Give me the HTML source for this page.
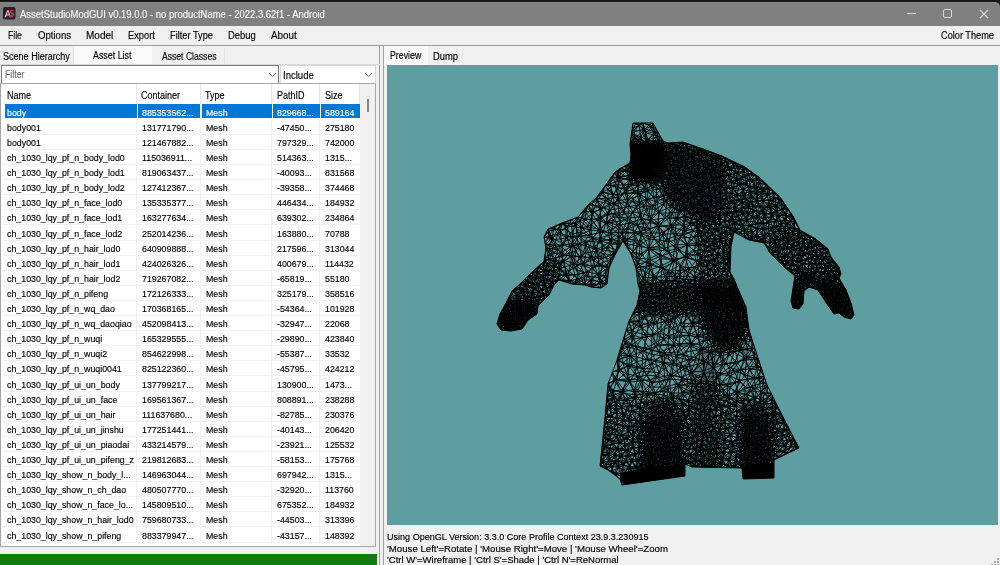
<!DOCTYPE html>
<html><head><meta charset="utf-8">
<style>
*{margin:0;padding:0;box-sizing:border-box}
html,body{width:1000px;height:565px;overflow:hidden;background:#f0f0f0;font-family:"Liberation Sans",sans-serif;font-size:9px;color:#000}
.a{-webkit-text-stroke:0.15px currentColor}
.a{position:absolute;white-space:pre}
#top{left:0;top:0;width:1000px;height:10px;background:#181818}
#title{left:0;top:2px;width:1000px;height:24px;background:#808080;border-top-right-radius:5px;border-top:1px solid #888}
#menu{left:0;top:26px;width:1000px;height:19px;background:#f0f0f0}
.mi{top:30px;font-size:9.6px}
#sep{left:0;top:45px;width:1000px;height:1px;background:#a0a0a0}
.tab{font-size:9.2px}
#lv{left:0px;top:83px;width:376px;height:464px;background:#fff;border:1px solid #a6a6a6}
.row{position:absolute;left:4px;width:355px;height:15.1px}
.c{position:absolute;top:1px;font-size:9.1px;white-space:pre;color:#000;transform:scaleX(.97);transform-origin:0 0}
.gl{position:absolute;left:4px;width:355px;height:1px;background:#f0f0f0}
.vl{position:absolute;width:1px;background:#f0f0f0}
#gl{left:387px;top:65px;width:611px;height:460px;background:#5f9ea0;overflow:hidden}
.info{left:387px;font-size:9.1px;color:#000}
</style></head><body>
<div class="a" id="top"></div>
<div class="a" id="title"></div>
<!-- icon -->
<svg class="a" style="left:3px;top:7px" width="13" height="13"><defs><linearGradient id="ga" x1="0" y1="1" x2="1" y2="0"><stop offset="0" stop-color="#f4f0f6"/><stop offset="1" stop-color="#f05a6a"/></linearGradient><linearGradient id="gs" x1="0" y1="1" x2="1" y2="0"><stop offset="0" stop-color="#f0106a"/><stop offset="1" stop-color="#e8483a"/></linearGradient></defs>
<rect x="0" y="0" width="12.5" height="12.5" rx="2" fill="#1f212b"/>
<path d="M1.6 10.2L4.2 3H5.6L8 10.2H6.5L6 8.6H3.6L3.1 10.2ZM4 7.4H5.6L4.9 4.9Z" fill="url(#ga)"/>
<path d="M10.8 3.6C10.2 3.1 9.5 2.9 8.8 2.9C7.5 2.9 6.7 3.7 6.7 4.8C6.7 6 7.7 6.4 8.6 6.8C9.2 7 9.6 7.3 9.6 7.8C9.6 8.4 9.1 8.8 8.4 8.8C7.7 8.8 7.1 8.5 6.6 8L5.9 9.2C6.6 9.9 7.5 10.2 8.4 10.2C9.9 10.2 11 9.3 11 7.8C11 6.5 10.1 6 9.1 5.6C8.5 5.3 8.1 5.1 8.1 4.7C8.1 4.3 8.5 4.1 9 4.1C9.5 4.1 9.9 4.3 10.3 4.6Z" fill="url(#gs)"/></svg>
<!-- window controls -->
<div class="a" style="left:907px;top:13px;width:9px;height:1px;background:#d8d8d8"></div>
<div class="a" style="left:943px;top:9px;width:9px;height:9px;border:1px solid #d8d8d8;border-radius:2px"></div>
<svg class="a" style="left:979px;top:8.5px" width="10" height="10"><path d="M1 1L9 9M9 1L1 9" stroke="#d8d8d8" stroke-width="1.1"/></svg>

<div class="a" id="menu"></div>
<div class="a" id="sep"></div>

<!-- left tab control -->
<div class="a" style="left:0;top:46px;width:380px;height:519px;border-right:1px solid #a0a0a0"></div>
<div class="a" style="left:0;top:48px;width:74px;height:17px;background:#f0f0f0;border-right:1px solid #e3e3e3"></div>
<div class="a" style="left:74px;top:46px;width:78px;height:19px;background:#f9f9f9"></div>
<div class="a" style="left:152px;top:48px;width:73px;height:17px;background:#f0f0f0;border-right:1px solid #e3e3e3"></div>
<div class="a" style="left:0;top:64px;width:380px;height:1px;background:#dadada"></div>

<!-- combos -->
<div class="a" style="left:1px;top:65px;width:278px;height:19px;background:#fff;border:1px solid #7a7a7a"></div>
<svg class="a" style="left:268px;top:72px" width="9" height="6"><path d="M1 1L4.5 4.5L8 1" stroke="#606060" fill="none" stroke-width="1"/></svg>
<div class="a" style="left:280px;top:65px;width:96px;height:19px;background:#fff;border:1px solid #d9d9d9;border-bottom:none"></div>
<svg class="a" style="left:364px;top:72px" width="9" height="6"><path d="M1 1L4.5 4.5L8 1" stroke="#606060" fill="none" stroke-width="1"/></svg>

<!-- list view -->
<div class="a" id="lv"></div>
<div class="a" style="left:5px;top:104.1px;width:131.7px;height:14.2px;background:#0078d7"></div>
<div class="a" style="left:137.9px;top:104.1px;width:62.5px;height:14.2px;background:#0078d7"></div>
<div class="a" style="left:201.6px;top:104.1px;width:70.0px;height:14.2px;background:#0078d7"></div>
<div class="a" style="left:272.8px;top:104.1px;width:46.9px;height:14.2px;background:#0078d7"></div>
<div class="a" style="left:320.9px;top:104.1px;width:38.8px;height:14.2px;background:#0078d7"></div>
<div class="a c" style="left:6.9px;top:107.7px;color:#fff">body</div>
<div class="a c" style="left:141.7px;top:107.7px;color:#fff">885353562...</div>
<div class="a c" style="left:205.7px;top:107.7px;color:#fff">Mesh</div>
<div class="a c" style="left:277px;top:107.7px;color:#fff">829668...</div>
<div class="a c" style="left:325px;top:107.7px;color:#fff">589164</div>
<div class="a c" style="left:6.9px;top:122.8px;color:#000">body001</div>
<div class="a c" style="left:141.7px;top:122.8px;color:#000">131771790...</div>
<div class="a c" style="left:205.7px;top:122.8px;color:#000">Mesh</div>
<div class="a c" style="left:277px;top:122.8px;color:#000">-47450...</div>
<div class="a c" style="left:325px;top:122.8px;color:#000">275180</div>
<div class="a" style="left:2px;top:133.8px;width:358px;height:1px;background:#f0f0f0"></div>
<div class="a c" style="left:6.9px;top:137.9px;color:#000">body001</div>
<div class="a c" style="left:141.7px;top:137.9px;color:#000">121467882...</div>
<div class="a c" style="left:205.7px;top:137.9px;color:#000">Mesh</div>
<div class="a c" style="left:277px;top:137.9px;color:#000">797329...</div>
<div class="a c" style="left:325px;top:137.9px;color:#000">742000</div>
<div class="a" style="left:2px;top:148.9px;width:358px;height:1px;background:#f0f0f0"></div>
<div class="a c" style="left:6.9px;top:153.0px;color:#000">ch_1030_lqy_pf_n_body_lod0</div>
<div class="a c" style="left:141.7px;top:153.0px;color:#000">115036911...</div>
<div class="a c" style="left:205.7px;top:153.0px;color:#000">Mesh</div>
<div class="a c" style="left:277px;top:153.0px;color:#000">514363...</div>
<div class="a c" style="left:325px;top:153.0px;color:#000">1315...</div>
<div class="a" style="left:2px;top:164.0px;width:358px;height:1px;background:#f0f0f0"></div>
<div class="a c" style="left:6.9px;top:168.1px;color:#000">ch_1030_lqy_pf_n_body_lod1</div>
<div class="a c" style="left:141.7px;top:168.1px;color:#000">819063437...</div>
<div class="a c" style="left:205.7px;top:168.1px;color:#000">Mesh</div>
<div class="a c" style="left:277px;top:168.1px;color:#000">-40093...</div>
<div class="a c" style="left:325px;top:168.1px;color:#000">831568</div>
<div class="a" style="left:2px;top:179.1px;width:358px;height:1px;background:#f0f0f0"></div>
<div class="a c" style="left:6.9px;top:183.2px;color:#000">ch_1030_lqy_pf_n_body_lod2</div>
<div class="a c" style="left:141.7px;top:183.2px;color:#000">127412367...</div>
<div class="a c" style="left:205.7px;top:183.2px;color:#000">Mesh</div>
<div class="a c" style="left:277px;top:183.2px;color:#000">-39358...</div>
<div class="a c" style="left:325px;top:183.2px;color:#000">374468</div>
<div class="a" style="left:2px;top:194.2px;width:358px;height:1px;background:#f0f0f0"></div>
<div class="a c" style="left:6.9px;top:198.3px;color:#000">ch_1030_lqy_pf_n_face_lod0</div>
<div class="a c" style="left:141.7px;top:198.3px;color:#000">135335377...</div>
<div class="a c" style="left:205.7px;top:198.3px;color:#000">Mesh</div>
<div class="a c" style="left:277px;top:198.3px;color:#000">446434...</div>
<div class="a c" style="left:325px;top:198.3px;color:#000">184932</div>
<div class="a" style="left:2px;top:209.3px;width:358px;height:1px;background:#f0f0f0"></div>
<div class="a c" style="left:6.9px;top:213.4px;color:#000">ch_1030_lqy_pf_n_face_lod1</div>
<div class="a c" style="left:141.7px;top:213.4px;color:#000">163277634...</div>
<div class="a c" style="left:205.7px;top:213.4px;color:#000">Mesh</div>
<div class="a c" style="left:277px;top:213.4px;color:#000">639302...</div>
<div class="a c" style="left:325px;top:213.4px;color:#000">234864</div>
<div class="a" style="left:2px;top:224.4px;width:358px;height:1px;background:#f0f0f0"></div>
<div class="a c" style="left:6.9px;top:228.5px;color:#000">ch_1030_lqy_pf_n_face_lod2</div>
<div class="a c" style="left:141.7px;top:228.5px;color:#000">252014236...</div>
<div class="a c" style="left:205.7px;top:228.5px;color:#000">Mesh</div>
<div class="a c" style="left:277px;top:228.5px;color:#000">163880...</div>
<div class="a c" style="left:325px;top:228.5px;color:#000">70788</div>
<div class="a" style="left:2px;top:239.5px;width:358px;height:1px;background:#f0f0f0"></div>
<div class="a c" style="left:6.9px;top:243.6px;color:#000">ch_1030_lqy_pf_n_hair_lod0</div>
<div class="a c" style="left:141.7px;top:243.6px;color:#000">640909888...</div>
<div class="a c" style="left:205.7px;top:243.6px;color:#000">Mesh</div>
<div class="a c" style="left:277px;top:243.6px;color:#000">217596...</div>
<div class="a c" style="left:325px;top:243.6px;color:#000">313044</div>
<div class="a" style="left:2px;top:254.6px;width:358px;height:1px;background:#f0f0f0"></div>
<div class="a c" style="left:6.9px;top:258.7px;color:#000">ch_1030_lqy_pf_n_hair_lod1</div>
<div class="a c" style="left:141.7px;top:258.7px;color:#000">424026326...</div>
<div class="a c" style="left:205.7px;top:258.7px;color:#000">Mesh</div>
<div class="a c" style="left:277px;top:258.7px;color:#000">400679...</div>
<div class="a c" style="left:325px;top:258.7px;color:#000">114432</div>
<div class="a" style="left:2px;top:269.7px;width:358px;height:1px;background:#f0f0f0"></div>
<div class="a c" style="left:6.9px;top:273.8px;color:#000">ch_1030_lqy_pf_n_hair_lod2</div>
<div class="a c" style="left:141.7px;top:273.8px;color:#000">719267082...</div>
<div class="a c" style="left:205.7px;top:273.8px;color:#000">Mesh</div>
<div class="a c" style="left:277px;top:273.8px;color:#000">-65819...</div>
<div class="a c" style="left:325px;top:273.8px;color:#000">55180</div>
<div class="a" style="left:2px;top:284.8px;width:358px;height:1px;background:#f0f0f0"></div>
<div class="a c" style="left:6.9px;top:288.9px;color:#000">ch_1030_lqy_pf_n_pifeng</div>
<div class="a c" style="left:141.7px;top:288.9px;color:#000">172126333...</div>
<div class="a c" style="left:205.7px;top:288.9px;color:#000">Mesh</div>
<div class="a c" style="left:277px;top:288.9px;color:#000">325179...</div>
<div class="a c" style="left:325px;top:288.9px;color:#000">358516</div>
<div class="a" style="left:2px;top:299.9px;width:358px;height:1px;background:#f0f0f0"></div>
<div class="a c" style="left:6.9px;top:304.0px;color:#000">ch_1030_lqy_pf_n_wq_dao</div>
<div class="a c" style="left:141.7px;top:304.0px;color:#000">170368165...</div>
<div class="a c" style="left:205.7px;top:304.0px;color:#000">Mesh</div>
<div class="a c" style="left:277px;top:304.0px;color:#000">-54364...</div>
<div class="a c" style="left:325px;top:304.0px;color:#000">101928</div>
<div class="a" style="left:2px;top:315.0px;width:358px;height:1px;background:#f0f0f0"></div>
<div class="a c" style="left:6.9px;top:319.1px;color:#000">ch_1030_lqy_pf_n_wq_daoqiao</div>
<div class="a c" style="left:141.7px;top:319.1px;color:#000">452098413...</div>
<div class="a c" style="left:205.7px;top:319.1px;color:#000">Mesh</div>
<div class="a c" style="left:277px;top:319.1px;color:#000">-32947...</div>
<div class="a c" style="left:325px;top:319.1px;color:#000">22068</div>
<div class="a" style="left:2px;top:330.1px;width:358px;height:1px;background:#f0f0f0"></div>
<div class="a c" style="left:6.9px;top:334.2px;color:#000">ch_1030_lqy_pf_n_wuqi</div>
<div class="a c" style="left:141.7px;top:334.2px;color:#000">165329555...</div>
<div class="a c" style="left:205.7px;top:334.2px;color:#000">Mesh</div>
<div class="a c" style="left:277px;top:334.2px;color:#000">-29890...</div>
<div class="a c" style="left:325px;top:334.2px;color:#000">423840</div>
<div class="a" style="left:2px;top:345.2px;width:358px;height:1px;background:#f0f0f0"></div>
<div class="a c" style="left:6.9px;top:349.3px;color:#000">ch_1030_lqy_pf_n_wuqi2</div>
<div class="a c" style="left:141.7px;top:349.3px;color:#000">854622998...</div>
<div class="a c" style="left:205.7px;top:349.3px;color:#000">Mesh</div>
<div class="a c" style="left:277px;top:349.3px;color:#000">-55387...</div>
<div class="a c" style="left:325px;top:349.3px;color:#000">33532</div>
<div class="a" style="left:2px;top:360.3px;width:358px;height:1px;background:#f0f0f0"></div>
<div class="a c" style="left:6.9px;top:364.4px;color:#000">ch_1030_lqy_pf_n_wuqi0041</div>
<div class="a c" style="left:141.7px;top:364.4px;color:#000">825122360...</div>
<div class="a c" style="left:205.7px;top:364.4px;color:#000">Mesh</div>
<div class="a c" style="left:277px;top:364.4px;color:#000">-45795...</div>
<div class="a c" style="left:325px;top:364.4px;color:#000">424212</div>
<div class="a" style="left:2px;top:375.4px;width:358px;height:1px;background:#f0f0f0"></div>
<div class="a c" style="left:6.9px;top:379.5px;color:#000">ch_1030_lqy_pf_ui_un_body</div>
<div class="a c" style="left:141.7px;top:379.5px;color:#000">137799217...</div>
<div class="a c" style="left:205.7px;top:379.5px;color:#000">Mesh</div>
<div class="a c" style="left:277px;top:379.5px;color:#000">130900...</div>
<div class="a c" style="left:325px;top:379.5px;color:#000">1473...</div>
<div class="a" style="left:2px;top:390.5px;width:358px;height:1px;background:#f0f0f0"></div>
<div class="a c" style="left:6.9px;top:394.6px;color:#000">ch_1030_lqy_pf_ui_un_face</div>
<div class="a c" style="left:141.7px;top:394.6px;color:#000">169561367...</div>
<div class="a c" style="left:205.7px;top:394.6px;color:#000">Mesh</div>
<div class="a c" style="left:277px;top:394.6px;color:#000">808891...</div>
<div class="a c" style="left:325px;top:394.6px;color:#000">238288</div>
<div class="a" style="left:2px;top:405.6px;width:358px;height:1px;background:#f0f0f0"></div>
<div class="a c" style="left:6.9px;top:409.7px;color:#000">ch_1030_lqy_pf_ui_un_hair</div>
<div class="a c" style="left:141.7px;top:409.7px;color:#000">111637680...</div>
<div class="a c" style="left:205.7px;top:409.7px;color:#000">Mesh</div>
<div class="a c" style="left:277px;top:409.7px;color:#000">-82785...</div>
<div class="a c" style="left:325px;top:409.7px;color:#000">230376</div>
<div class="a" style="left:2px;top:420.7px;width:358px;height:1px;background:#f0f0f0"></div>
<div class="a c" style="left:6.9px;top:424.8px;color:#000">ch_1030_lqy_pf_ui_un_jinshu</div>
<div class="a c" style="left:141.7px;top:424.8px;color:#000">177251441...</div>
<div class="a c" style="left:205.7px;top:424.8px;color:#000">Mesh</div>
<div class="a c" style="left:277px;top:424.8px;color:#000">-40143...</div>
<div class="a c" style="left:325px;top:424.8px;color:#000">206420</div>
<div class="a" style="left:2px;top:435.8px;width:358px;height:1px;background:#f0f0f0"></div>
<div class="a c" style="left:6.9px;top:439.9px;color:#000">ch_1030_lqy_pf_ui_un_piaodai</div>
<div class="a c" style="left:141.7px;top:439.9px;color:#000">433214579...</div>
<div class="a c" style="left:205.7px;top:439.9px;color:#000">Mesh</div>
<div class="a c" style="left:277px;top:439.9px;color:#000">-23921...</div>
<div class="a c" style="left:325px;top:439.9px;color:#000">125532</div>
<div class="a" style="left:2px;top:450.9px;width:358px;height:1px;background:#f0f0f0"></div>
<div class="a c" style="left:6.9px;top:455.0px;color:#000">ch_1030_lqy_pf_ui_un_pifeng_z</div>
<div class="a c" style="left:141.7px;top:455.0px;color:#000">219812683...</div>
<div class="a c" style="left:205.7px;top:455.0px;color:#000">Mesh</div>
<div class="a c" style="left:277px;top:455.0px;color:#000">-58153...</div>
<div class="a c" style="left:325px;top:455.0px;color:#000">175768</div>
<div class="a" style="left:2px;top:466.0px;width:358px;height:1px;background:#f0f0f0"></div>
<div class="a c" style="left:6.9px;top:470.1px;color:#000">ch_1030_lqy_show_n_body_l...</div>
<div class="a c" style="left:141.7px;top:470.1px;color:#000">146963044...</div>
<div class="a c" style="left:205.7px;top:470.1px;color:#000">Mesh</div>
<div class="a c" style="left:277px;top:470.1px;color:#000">697942...</div>
<div class="a c" style="left:325px;top:470.1px;color:#000">1315...</div>
<div class="a" style="left:2px;top:481.1px;width:358px;height:1px;background:#f0f0f0"></div>
<div class="a c" style="left:6.9px;top:485.2px;color:#000">ch_1030_lqy_show_n_ch_dao</div>
<div class="a c" style="left:141.7px;top:485.2px;color:#000">480507770...</div>
<div class="a c" style="left:205.7px;top:485.2px;color:#000">Mesh</div>
<div class="a c" style="left:277px;top:485.2px;color:#000">-32920...</div>
<div class="a c" style="left:325px;top:485.2px;color:#000">113760</div>
<div class="a" style="left:2px;top:496.2px;width:358px;height:1px;background:#f0f0f0"></div>
<div class="a c" style="left:6.9px;top:500.3px;color:#000">ch_1030_lqy_show_n_face_lo...</div>
<div class="a c" style="left:141.7px;top:500.3px;color:#000">145809510...</div>
<div class="a c" style="left:205.7px;top:500.3px;color:#000">Mesh</div>
<div class="a c" style="left:277px;top:500.3px;color:#000">675352...</div>
<div class="a c" style="left:325px;top:500.3px;color:#000">184932</div>
<div class="a" style="left:2px;top:511.3px;width:358px;height:1px;background:#f0f0f0"></div>
<div class="a c" style="left:6.9px;top:515.4px;color:#000">ch_1030_lqy_show_n_hair_lod0</div>
<div class="a c" style="left:141.7px;top:515.4px;color:#000">759680733...</div>
<div class="a c" style="left:205.7px;top:515.4px;color:#000">Mesh</div>
<div class="a c" style="left:277px;top:515.4px;color:#000">-44503...</div>
<div class="a c" style="left:325px;top:515.4px;color:#000">313396</div>
<div class="a" style="left:2px;top:526.4px;width:358px;height:1px;background:#f0f0f0"></div>
<div class="a c" style="left:6.9px;top:530.5px;color:#000">ch_1030_lqy_show_n_pifeng</div>
<div class="a c" style="left:141.7px;top:530.5px;color:#000">883379947...</div>
<div class="a c" style="left:205.7px;top:530.5px;color:#000">Mesh</div>
<div class="a c" style="left:277px;top:530.5px;color:#000">-43157...</div>
<div class="a c" style="left:325px;top:530.5px;color:#000">148392</div>
<div class="a" style="left:2px;top:541.5px;width:358px;height:1px;background:#f0f0f0"></div>
<div class="a" style="left:136.2px;top:119.2px;width:1px;height:422.8px;background:#f0f0f0"></div>
<div class="a" style="left:199.9px;top:119.2px;width:1px;height:422.8px;background:#f0f0f0"></div>
<div class="a" style="left:271.1px;top:119.2px;width:1px;height:422.8px;background:#f0f0f0"></div>
<div class="a" style="left:319.2px;top:119.2px;width:1px;height:422.8px;background:#f0f0f0"></div>
<div class="a" style="left:6.6000000000000005px;top:91px;font-size:10px;line-height:1;transform:scaleX(.9);transform-origin:0 0">Name</div>
<div class="a" style="left:141.39999999999998px;top:91px;font-size:10px;line-height:1;transform:scaleX(.9);transform-origin:0 0">Container</div>
<div class="a" style="left:205.39999999999998px;top:91px;font-size:10px;line-height:1;transform:scaleX(.9);transform-origin:0 0">Type</div>
<div class="a" style="left:276.7px;top:91px;font-size:10px;line-height:1;transform:scaleX(.9);transform-origin:0 0">PathID</div>
<div class="a" style="left:324.7px;top:91px;font-size:10px;line-height:1;transform:scaleX(.9);transform-origin:0 0">Size</div>
<div class="a" style="left:136.2px;top:84px;width:1px;height:20px;background:#e5e5e5"></div>
<div class="a" style="left:199.9px;top:84px;width:1px;height:20px;background:#e5e5e5"></div>
<div class="a" style="left:271.1px;top:84px;width:1px;height:20px;background:#e5e5e5"></div>
<div class="a" style="left:319.2px;top:84px;width:1px;height:20px;background:#e5e5e5"></div>
<div class="a" style="left:359.2px;top:84px;width:1px;height:20px;background:#e5e5e5"></div>
<!-- scrollbar -->
<div class="a" style="left:360px;top:84px;width:15px;height:462px;background:#f0f0f0"></div>
<div class="a" style="left:367px;top:99px;width:2px;height:13px;background:#858585"></div>

<!-- green bar -->
<div class="a" style="left:0;top:554px;width:377px;height:11px;background:#107c10"></div>

<!-- right tab control -->
<div class="a" style="left:383px;top:45px;width:617px;height:520px;border-left:1px solid #a0a0a0"></div>
<div class="a" style="left:384px;top:46px;width:44px;height:19px;background:#f9f9f9"></div>
<div class="a" style="left:428px;top:48px;width:35px;height:17px;background:#f0f0f0;border-right:1px solid #e3e3e3"></div>
<div class="a" id="gl"><svg width="611" height="460" style="position:absolute;left:0;top:0"><defs><filter id="bl" x="-20%" y="-20%" width="140%" height="140%"><feGaussianBlur stdDeviation="2.5"/></filter><clipPath id="cp"><path d="M246 58L266 58L276 76L281 78L296 77L319 85L335 91L358 102L373 113L393 132L406 151L413 165L429 174L441 184L444 192L452 202L454 209L452 213L459 225L464 238L467 250L464 254L457 252L452 248L447 249L440 239L431 225L422 222L417 226L416 239L412 244L406 243L404 236L406 223L408 211L397 202L383 188L377 178L362 175L347 167L344 182L343 207L347 214L352 226L359 242L362 265L371 293L380 320L394 348L412 383L387 395L387 413L356 414L355 403L305 402L298 399L298 411L235 420L233 414L221 405L213 401L218 352L221 319L230 295L233 285L242 256L250 240L253 226L251 219L249 203L244 189L236 176L228 190L222 203L220 219L214 223L204 222L198 220L185 219L172 215L167 220L162 230L151 241L150 249L141 255L135 264L124 266L114 265L110 259L113 249L119 238L125 226L135 217L143 209L157 196L159 183L157 172L161 164L175 158L191 152L201 140L209 133L218 121L228 107L234 103L243 98L244 90L243 79Z"/></clipPath></defs><g clip-path="url(#cp)"><g filter="url(#bl)"><path d="M244 78L275 78L277 100L271 113L253 115L244 110Z" fill="#000" fill-opacity="0.9"/><path d="M275 78L313 83L335 93L338 135L325 160L303 150L278 130Z" fill="#000" fill-opacity="0.6"/><path d="M110 235L150 235L150 249L135 264L123 266L110 260Z" fill="#000" fill-opacity="0.6"/><path d="M428 217L459 220L467 250L464 254L447 249L431 227Z" fill="#000" fill-opacity="0.6"/><path d="M406 215L416 220L415 239L412 244L406 243L404 235Z" fill="#000" fill-opacity="0.6"/><path d="M250 221L357 215L359 246L250 246Z" fill="#000" fill-opacity="0.35"/><path d="M313 220L353 220L358 255L345 280L331 280L316 245Z" fill="#000" fill-opacity="0.5"/><path d="M263 335L288 335L298 405L253 413Z" fill="#000" fill-opacity="0.55"/><path d="M355 340L378 340L386 405L356 407Z" fill="#000" fill-opacity="0.55"/><path d="M311 285L327 285L332 402L305 402Z" fill="#000" fill-opacity="0.3"/></g><path d="M341 162l6 1l1-5l4 6l-5-1l0 4l-3 7l0-5l-6 3l6 2l-2 8l-5 5l0 8l3 4l3-4l-6 0l5-7l-5-1l0-5l-4-7l1-6l2-8l-3-4l-6 0l5-5l1 5l-4 8l-2-8l-4-4l-2-10l-4 1l1 7l3-8l8 0l4-5l4 6l5-1l7 3l7-4l6 7l8-3l3-4l3-4l6 0l2 5l5-3l-7-2l-3 4l5 1l5 2l3 6l3-5l3-6l-9 0l6 6l-6-1l0-5l-1-7l-6 5l-2-8l-9-4l-8 4l-1-8l-6-3l0-7l6-3l-6-2l0 5l-6 3l6 4l7-4l-7-3l-7-4l6-6l1 5l2-5l10 8l-6-1l1 6l-1 7l9 4l3 6l2 6l3 4l-6 0l-3-7l-7-5l-2 9l-5 3l-1-6l-2-5l-5-5l0 5l7 5l6 3l9-4l1-9l-2-5l-7 1l-4 8l5 0M341 162l7-4l-4-3l-7-6l0-5l5 4l0-5l0-6l-3-3l-6 4l4 2l0 4l-8-1l-5-3l-3 3l-2-6l-2 7l-4 4l-5 1l5 5l0-6l5 3l-5 3l-1 5l-1 4l4 4l-8 5l4 9l4-4l3 4l-7 0l1 8l-13 3l14 4l5-1l-3 6l0 6l-7 6l1 4l4-2l-5-2l7-1l0-5l8-3l4-3l0-5l-4 0l-5-1l2 5l7 1l5 5l-1 6l3 3l-1 5l4 3l4-5l-4 0l0 5l7 1l2 2l-3 2l1-4l5-2l-3 4l3 1l3-1l-1 4l3 2l1 4l-4-2l3-2l-2-6l-4-9l-1-3l-2 5l4 3l3 4M341 162l3 7l3-2l11 6l7-1l5 4l5-2l-6-4l-4 2l1-5l3 3l1 6l7 1l-2-3l3 4l1-9l-4 5M341 162l3-7l-2-7l-5 1l-5 3l-9 1l-5-2l1 5l8 1l-4 5l2 6l4-3l7-4l2-4l-5 0M341 162l-3-5l-1-8l-4-2l4-3M341 162l6 5l5-3l4-4l-8-2l4-4l-3-8l2-6l5 2l-1 5l7 2l7 4l10 0l-7 5l-2 6l-1 6l6-7l-5 1l-4 3l-9-1l8 6l-3 3l8 1M341 162l-5-1l3 5l2-4M347 167l10-1l1 7l4 2M334 265l0 5l4 0l2 3l2 1l3 2l5 3l-2 5l3 14l-5 7l-7-7l12 0l9-6l11 1l-1-4l-2-6l-8 1l-2-11l-3-3l-2-4l-4 2l-4-3l-4-3l-1 3l-2 5l-4 4l0 3l-4-2l4-1l0-4l-2-3l2-2l-4-1l-5-1l-2-2l0-5l3-1l3-5l3-6l-4 3l-3-3l-5 2l-2-6l-5 2l-4-3l3-6l3-1l1-5l5-1l4 4l2-4l-6 0l1 6l3-2l1 3l2 5l-4 0l2-5l-4-1l2 6l4 3l0-3l3 1l1 5l4 1l2-3l0-7l-2-3l-2 3l0 3l4 4l-3-1l-3 3l-4-3l-3 3l-2-2l-5-2l-1-3l-5-4l-4 0l1 6l-4 3l1-4l3 1l1 5l2 5l0 7l3 6l-13 8l1 11l-6 9l-13-1l-3-9l-10-12l-11 4l1-14l10 10l11 3l-1 9l-6 11l9-2l3 8l10-7l5 9l2 9l0 10l1 9l3 4l-3 8l5 6l4 4l-5 4l-4 8l-5 2l-6-4l6-1l-2-8l-5 1l-7 1l0 5l-2 6l-4-2l-4 1l-3-1l-3 2l-4-1l-5 1l3-4l2 3l1-4l-3 1l0-6l-5 0l-5-2l1 7l4-5l5-11l-6-3l2-8l8-3l10-13l3 9l-13 4l-12-2l4 5l-6 5l4 3l9-3l1-8l6 5l-4 8l7 6l-3 5l-5 2l-5-1l0-11l-8 4l-2 5l-6-4l-5-8l-2-6l-7 0l-7 0l-7-3l1 4l6-1l2 5l-6 5l2 9l6 1l-1 7l-5-8l-7 0l0-3l1-8l2-7l2 9l-4-2M334 265l2-4l5 1l-1-3l-3-1l1-4l4-1l4 2l4 2l1-5l-5 3l-4 1l0-3l-1-3l-3 4l4 2l-5 2l-4-4l-4-4l-1-3l0-6l3-2l4 2l1 4l2 4l0 5l-5 0l-2 5l-5-4l3 5l-4 3l-3 5l-7-6l1-3l-4-3l-6 5l-4 9l-5-8l-13-6l-6-7l-4 1l2-5l2 4l4-3l5 2l-3 8l-13 12l-1-10l-9 0l-2-8l-7-3l-1-6l-4 7l5-1l1 14l6-11l-2-5l-5 2M334 265l3 2l1 3l4 0l-2 3l1 4l4-1l-2 4l1 3l4 1l12 8l-2 18l-12-5l-6 15l8 6l5 7l6 1l-3 4l-7-1l-6 6l-7-2l8-3l-1 5l-2 6l9 2l2 4l5 5l4 2l-1 5l4 2l1 4l4-5l-5 1l-4 2l5 2l6-2l6 1l-4 3l-4 6l-1-4l-3-4l-5 1l0 4l-4 3l-3-3l-2-6l4-1l5-4l0 4l-5 0l-4-5l0 6l-6 7l-9 1l-6-2l-3 6l3 4l7-2l-1-6l1-5l-7 3l-6 3l3 3l-1 6l0 7l-4-3l-5 6l1-9l-3-6l-7 0l-1-8l0-6l-6 3l6 3l-4 6l-2 8l0 5l-6-2l-1 5l-2 3l-1 6l0 3l6-2l-6-1l4-3l-1-6l-5 1l-6 2l3 4l0 6l1 0l4-4l-5-2l-4 1l1-5l-6 3l2 6l3-4l-5-2l-5 3l-1 3l3 1l-7 3l4-4l4-2l-1 3l3 2l9-2l-4-1l-3 0l-2 3l-2-5l4 2M334 265l3-1l4-2l3-2l1 5l-5 0l2 5l0 4l3-1l0 3l5-3l0 6l4-5l4-1l-4 9l-4-3l-4 0l-1-3M332 267l-3 2l2 3l-1 3l2 5l2-3l3 0l3 5l3-2l3-1l2 5l-6 5l9 9l7 12l14 4l2-12l-3-9l-2 7l5 2M332 267l-2-3l6-3l1-3l-6 1l-1 5l-1-4l2-1l5 2l4-2l2-3l2 4l-4-1M332 267l-1 5l3-2l3-3l3-2l-3-1l-1-3M332 267l-4-1l-3-3l1-4l-3 2l-3-4l-4 2l1-4l-5 1l3-5l-3-2l3-4l3-5l-5-2l-4 1M282 382l-1-5l-3-5l-3 3l3 3l4 4l-4 4l-4-3l-1 3l-5-1l0-4l-3-2l-4 1l-3 4l-5-2l4-4l4 2l2 5l-5-1l0 3l-6 1l-4 2l-4 6l7 8l3-5l6-3l4-5l-1 6l0 3l3 2l4 0l3 2l3-6l-3-2l-4-1l-1-5l-4 1l-1-6l5 0l3-2l3 0l5-1l-6-3l1 4M282 382l1 5l-3 1l0 4l6-1l6 2l3 1l6-3l7-6l2 4l8 2l4 3l4-4l4-2l2-5l4-3M282 382l4 4l6 3l3 5l-3 3l2 2l4 0l3-3l6-3l-6-2l9-2l-3 4l2 8l-4-3l-4-2M282 382l5 0l3-3l2 4l0 6l0 4l0 4l-3 3l3 2l3 3l2 4l1 2l-11 1l4-1l7 0M282 382l4-5l-5 0l2-7l5-3l3-2l2 7l0 5l-3 2l-4-2l-3-7l-5 2l-1-7l-1-3l-4 4l1-5l-6-3l3 5l2 3l-4 0l-6 4l-4 0l-3 5l4 0l-1-5l-3-5l-3 6l6-1l3-3l0-4l-2-6l0-4l-3-7l2-7l-7 4l-8-4l-2 6l2 6l-8-2l-4 4l-3-9l-3 8l-7-3l5-6l5 1l7 5l6-4l7 2l-5 4l5 3l6-3l-4 8l-8 7l-5 4l-7 1l-7 3l-7 0l1 7l-2 0l0 9l2-9l6-7l-7-2l0 2l-1 7M282 382l-3 0l-1 4l-5 0l-2-3l-3-2l-5 4l-5 2l2 3l4 1l2 3l3 1l-2 3l-1 4l2 3l2-3l-3-4l-4 2l-3-4l3 1l3-3l2-4l0-5l3 4l2-3l4 4l3-2l-2-2l5 1l3 4l6-2l3-6l-2-6l4-4l-4-1l3-8l-2-5l-2 3l-1 3l-3-2l0 4l2 3l-1 3l-1-6l-3 0l-1-4l4 0l4-1l-3-2l-3-3l4-2l4 4l2-3l2-6l5 5l2 6l-5-3l0 5l-4 1l-5 1l-1 5l3 2l-4 1l4 4l-1 6l-6 3l0 5l-5 5l-5 2l3 3l4 1l6 1l3-1M278 378l3-1M278 378l0-6l3-5l-1-6l-3 4l-5 1l-3 4l-7 0l-3 5l-2 3l-2-3l-3-4l-5 0l-3 7l-5 7l9 5l-7 2l3 4l-8 3l-5-4l0 6l-4 8l6 5l1-3l1 9l10-2l-4-15l3-7l5 0l-1-6l7 4l-1 5l-5-3l2 8l4 2l4 4l4-3l-3-2l-5 1l1-3l-2-4l5 2l4-1l1 4l2-2M278 378l1 4M278 378l-5 1l2-4l-4 0l-3 6l5-2l-2 4M271 398l-2-3l2-6l2 7l-2 2l5 0l1-4l-4 2M271 398l-1 4M271 398l-4 0l-4-1M271 398l2 6l4 1l2-4l-6 3l-1 4l-5 0l4 3l-5 2l-4 3l5-1l10-1l5-3l4-5l3-3l2 5M273 404l-5 1l4 3l3 1l2-4M319 176l-5-5l1 6l-8-5l7-1l1-4l5 0l5 1l-2 3l-9 0l6-4l3 4l5 0l6-2l-5-4l-6-3l-3 5l-2-7l-3 7M319 176l-4 1M319 176l-1 5l5 0l-4-5l4-5l3 6l-3 4l7-2l3-4l5-3l-4-3l5-3l5 3M319 176l7 1l4 2l3 3l4 5l-7 4l7 4l-6 3l-4 3l-4-5l-3 4l-5 1l-2-5l-6 7l8 4l5 3l-5 2l-2 3l-1 5l-3-3l-2 2l-5 5l0-6l6-5l-1 6l5 1l2 2l2 5l-4 0l0 6l1 5l0 4l2 3l5 1l-1 4l-2-3l3-1l3-4l1-4l-4-1l-2 3M317 237l-2-5l4 0l2-6l0-3l1-3l3 3l2 3l4-1l6-2l3 5l3 0l0 4l-3-1l-4 1l-4 0l0-3l-1-4l2-5l4-2l-3-3l-5 2l2-5l4-2l-1 5l5 0l1-6l-5 1l-3-4l-1-8l-4-2l3-5l1 7l5 5l1-8l6-1l-1-6l0-6l-5 0l-4 0l-3 9l-5-2l2 7M317 237l2-5l3 0l-2 5l-3 0l-4 1M320 237l-1-5l-2-2l-2 2l-3-5l2-5l-4 1l2-3l5-2l5 2l4-1l3-2l4 3l-5 3l-1 3l1 4l-3 0M320 237l3 5l5-1M264 226l-1-7l-3 6l-2-5l5-1l4-7l10-8l13-10l9-2l-10-8l4-11l-11 4l-5-10l-6-6l11-8l-10-6l-9 9l8 5l1-14l7-11l-6-4l4-9l-10-5l-1-4l-1-4l-5 1l-2-3l3 0l0-2l-3 2l0-2l3 0l1-2l2-4l1-2l3 1l-2 3l-1-4l-4-1l3 3l2 2l-4 2l4 2l-1 4l3 0l0-3l1-2l5 0l2-3l1 4l-3 4l-3 1l1 3l2-4l4 3l-1-7l-3-1l0 5l1 4l0 4l2 5l5-1l2-8l-6-1l5-6l-6-1l2-5l-3 1l-5-1l-3-2l0-2l4-3l-4-2l-2-1l-3 1l-2 2l-3-1l-3 1l-4 0l-1 3l4-1l1-2l3 1l0-2l1-3l2 4l0 3l-3-2l3-1l2 2l2 2l3-1l0-5l-1 2l-1-3l-4-2l1 3l4 2l-2 4M264 226l5-3l3-4l1 4l-4 0l-1 6l4 4l5-1l3 3l7 3l6 4l3 3l-5 5l-4-2l2-5l7 2l5-1l4-2l1 4l6 3l5-2l-2-2l-5-1l-5-2l-4-2l-5 5l3 4l9 2l4-2M264 226l4 3l-3 4l-5 0l-3 3l3 4l5 3l-1-5l-4 2l0-7l4 5l1-5l7 0l-2 8l-5 2l-3 3l-3 4l8 0l-6 8l-8 3l-11-5l2 9l-5 0l-2 9l9 0l7-13l-9 4l2 9l10 12l-1 17l-10-3l-9-2l-5 7l-6 2l5 8l1-10l-1-10l6 3l3 10l-8-3M264 226l-4-1l-5-1l-2-6l-2-11l0 12l2-1l5 2l-2-7l7 6l3 2l6-2l-5-7l9 6l-4 1M264 226l1 7l-5-4l0 4l-7-3l4 6l-4-1l-3 5l1 1l6 4l3-5l-4 0l1-4M264 226l-4 3l0-4l-4 3l4 5M264 226l2-5l3 2l3 4l1-4l6 1l2-6l-1-6l-3-8l11 7l2-17l-1-10l-7-7l-2 9l9-2l11-4l11 1l6 5l1-5l5 5l0-5l5 4l2 6M327 201l1 8l3 3l-3 2l1 3l-1 6l-3 0l-4 3l-3-2l-2 3l1 3l4-4M320 200l3 4l-8-3l-8 2l1 10l-8-2l2 7l5 1l3 4l-3 2l-5-1l-5 2l6 6l-6 0l-5 0l-4-2l-4 2l-4 3l4 7l3-4l4-2l1-4l-1-4l-3 2l-3-2l-5 0l-3 4l-1-5l-3-4l3-5l5 0l2 3l2 7l-1 4l-4-4l0 7l0 6l-4 4l-6-4l-3-5l-2-3M453 237l4 0l5 4l2-4l2 8l-4-4l-4 1l-1-5l-1-3l-3 3l0-3l-4-2l0-3l-3-1l-3-2l3-1l-1-4l0-3l2-4l1-4l4 3l-2 0l-2-3l1-4l3 3l0 4l3 6l4 6l-2 1l0 4l-4 4l-5 1l5 2l-3 2l-4-2l-3 2l-3 0l-3-6l3-2l3-5l-4 0l-1-4l-4-2l-1-3l-4 3l-3 3l5 2l1 1l-2-3l-4 0l-4-1l-5 3l-1-4l6 1l0-2l4 3l-2-6l-3-3l3-5l1-6l5 0l-2-5l-3 5l3 4l2-4l5-1l4 3l-2 3l-4 4l0 5l-5 0l-2 6M453 237l-1 5l-2-3l-2-4l-2 2l-3-4l0 6l-3-3l-3-3l-2-2l5 8l0-3l3-3l-3-2l0 5M453 237l2 5l2-5l3-1l2 5l2-4l-4-1l-4-2l-3 0l0-5l-4 0l4-3l4 0l-4 3l-4 3l-1 3l-4-4l5-2l1-5l-5-3l4-4l-2-3l3-1l-1 4l-4 1l-1-5l4-3l4-1l-2-6l-1 3l-3-4l0-6l-5-1l2 3l-4 7l3 5l6 0l-4-4l5 0M311 85l-4-4l-1 4l-1 5l-1 8l4 1l-3-9l-6 0l-5-3l1 6l-6 7l-2-4l8-3l4-3l-1 6l-3-3l0 7l-6 0l-1 6l-4 8l-1-7l-4-6l-2-5l0-4l3-3l5-2l-7-5l3-4l4 9l5-2l4 2l0-6l5-2l-3-2l-2 4l-4 4l-2 6l6-4l5-2l6 5l-7 6l1 7l5-5l-6-2l-3 4l4 3l4 5l-5 5l-7 0l-7 1l7 6l0-7l7-4l1-6l6 1l-1-6M311 85l-5 0l-7-6l8 2M311 85l8 0l-1 4l7 3l4 3l6 3l-1 7l3 6l2-5l6-1l-2 5l-6 1l1 7l-5-6l-6 1l-7-1l-3-5l-2 5l5 0l2 7l-7 3l-1 7l-7-4l0 8l7-4l5 1l-4-8l-4-1l3 8l-1 7l-6-3l-3 4l-5-8l-5 5l-6-4l-5 3l-4 3l-13 5l7-9l-12 2l-9-5l-1-8l-6-2l1-6l4 1l0-3l-4 2l-4-2l-12 1l-2 8l8 0l-6-8l2-7l2-2l-6 4l2 5l-12 9l-5 8l8 5l2 11l-9 7l-10-7l-9 8l9 12l-14 6l1 9l4 11l8 2l-10 6l-7 4l11 5l-4-9l12 5l-2-11l8-2l13 3l5-7l-6-8l-8-3l-10-3l-15-2l-1-9l-4-8l-10 4l-2 1l-6 4l4 6l5 11l-9 0l-3 9l-6 5l2 5l7 2l1 5l-7 4l-5 1l1 6l1 5l6-4l3 2l-3 3l-2 7l-3-1l-1-7l6 1l0-5l4-6l-7-2l2-5l-3-6l-2 7l3 4l-1 5l-4-4l2-5l-7-4l-1 5l6 4l-4 2l5 4l-7 2l-4 7l-1 4l-1 4l-4 2l1-4l3 2l0 3l-4-1l2 4l4 1l5-1l0 1l-5 0l0 5l-1 4l5-1l-9 6l-1 0l2-2l8-4l-2-1l-3 2l-3 3l-1 2l-3 4l-3 5l-4-1l1-4l-2-4l-5 1l-3-4l-5 0l5-3l3 3l0 4l2 3l3-4l-5-3l-3 0l0-3l-1-3l5-1l-4 4l6 1l2 5l2-3l4-3l-4-1l0 4l2 4l-2 3l-5 0l-4 0l2-3l-5 1l2-5l-4 3l-1-3l-4-3l-1 6l-2 4l1-1l1 3l3 0l0-3l-3-3l-1 3l4 0l3 1l-3 2l2 4l4-2l2-4l-3-2l1 6l3 2l0 1l-7-1l7 0l4 0l3-2l-2-1l3-3l3 1l-4 3M311 85l7 4l6-2l1 5l0 9l-2 7l-3 4l-3 6l-2 4l8 5l-1-8l5-6l-1 9l7 4l5 3l1 5l-2 6l5 3l5-5l8-2l-4 4l-4-2l2 8l-7 2l4 1l-2 6l8-1l-6-5l3-3l6 1l-3 7l4 6l1 6l-5-2M311 85l1 5l-7 0l7 6l-4 3l-3 5l-2 4l-5 1l0 4l-3 4l-4-4l-3-7l-5 1l1-6l5-1l4 6l6-3M306 85l-7 0l0-6M306 85l6 5l6-1l1 6l6-3l8-1l2 7l0-7l-2 0l-4 4l-4 6l5-1l5-2l7-2l-7-5l-11-4l9 4M282 177l-9-2l4-8l8-5l8 11l14-1l4-9l-4-4l6-5l-9-1l4-4l-6-1l-5-5l-3 3l-5-3l-7 10l1-11l-11 5l-6-6l-3 15l-5 9l-12-6l-5-6l-14-1l-4-7l5-6l3-7l-3-12l-7 4l-8 5l-4 4l3 8l-8 4l-3-5l-10 12l-6 2l-4 7l-8-2l-12 5l6-1l-5 8l-4 8l1 4l5 6l10-1l2-8l4-8l10-1l9 8l4 14l9 6l6 6l4-2l-2 11l-2-9l-6 4l-7-5l-8 4l8 6l0-10l7-5l-1-8l-4-9l8-6l7-8l1 11l7 0l-1 8l-1 3l-6 13l2-9l-12 5l10 4M282 177l3-15l-3-9l9 0l3-7l-2-7l5 4l0-5l2-9l-3-6l6 0l-3 6l5 1l3-5l-5-2l2 7l3 3l1 6l-4-2l-1 6l5 6l2-5l7 0l-3-4l-1-4l6-6l0 7l-6-1l-5 3l6 1l5-3l5 3l0-5l-5-5l4-3l3-5l-4-3l-5-1l-2-6l-6-3l8-2l6 1l4 5l6 8l0 5l-4 6l-3-10l7-1l5-3l6 5l-6 1l-5 2l1 7l-1 5l-4-1l0 6l-2 5l-6-5M259 357l5 2M259 357l-4 1l-5 1l-2-5l0-7l3-4l3-7l2-10l-5-14l4-9l5 7l-9 2l-6-12l-6 8l12 4l-4 15l9-1l-8 7l-5 6l-6-1l4-5l7 0l6 3M259 357l5-4l3 5l2-4l0-7l5 5l7-1l1-6l4 7l4 3l3-4l3 5l4 2l3-3l6-2l-2-4l3-4l4-2l0 6l-7 0l-4 6l-1-6l-4 1l-2-4l-3 5l-4-3l-7-3l-5 2l2-8l3 6l5-6l4-8l6 0l8-4l-4 8l7-4l8 0l5 5l5 0l3 7l-6 4l-5-7l3-4l-6 1l-1 6l4 3l5 1l6 4l5 2l1-6l-6 4l0 7l-3 2l-1 6l-6-3l7-3l-7-2l0 5l-2 6l8-3l-1 5l0 10l-3 6l6-3l5-1l-2-5l-1-5l-5 8l-4 1l-5 3l-5 4l3 8l4 3l-2 2l-6-1l-4 1l0-4l2-5l6 4l5-6l3-4l-6-2l-4-3l-4-5l4-2l-4-4l-1-4l-1-6l5 0l-1-8l3 3l2-7l4-3l0-6l-4 3l-4-7l0 9l-8-2l3-4l-4-4l-4-4l-2 8l-4-8l-7 0l3 8l-8 0l-9 2l-6 1l3-6l-7-5M259 357l-1 6l3 0l3 2l-2 5l-1-3l-6-2l-5-1l-8 2l5 5l-6 2l3 5l-7 3l2 4l-9 0l5 6l-4 4l-6 1l6 5l5 4l-2 6l-7-2l-6-4l-3-2l-2-6l-3 4l5 2l6-2l7 0l5-2l0 6l-9 4l-3-8l-3 4M215 176l-2-10l1-14l5 5l4-12l-11-4l2 11l-9 3l-1-10M215 176l0 9l14 2M215 185l8-6M215 185l-4 6M215 185l9 9l4-4M215 185l-8-3l-4 11M349 108l1 7l-7-5l-4-4l-5-1l-1 7l4-1l8 5l5-1l1 5l5-1l0 5l6-2M349 108l7-1M349 108l-4-3l-4-3l-6-4M349 108l-6 2l2 6l-7 2l0 6l0 5l5 0l-4 5l-5-1l4-4M349 108l-2-8l8 2l-8-5l-5-1l-1 6l-2 4M238 355l-7-2M238 355l-8 5l9 1l3 5l-1 7l-4-3l-4 8l-3-7l-5 8l-8 2l5 3l8 1l3-7l8-5l-4 8l-7 4l-3 4l4 6M238 355l5-4l0 6l-1 9l-8 0l-4-6l-10-3l5-5M238 355l-3-6l-1-6l-6 1l1-6l5-5l-8-6l1 6M238 355l1 6l4-4l7 2l0 5l-3 7l5 6l-8 1l2 5l2 7M238 355l5 2l5-3M271 101l3 4l-3 2l0 4l-3-1l-2 4l-5 3l-10 4l-13 7l8 6l6-5l9-12l6 1l2-3l2-4M271 101l-2 4l-3-3l0 4l2 1l3 0l3 3M271 101l-5 1M271 101l0-4l-3 2M271 101l3-3l-2-4l3 0l2 2l5 1l5-1l-7-7l-3-3l8 1l3 4l7 2M369 398l-4-4l-6 1l1 5l-4 4l-1-1l-7-2l8 3l0 8l4 1l6 0l10 0l0-2l-4 0l1-4l3 4l4-4l-1-4l-3-2l1 5l-1 5l5 1l-1-5l6-3l-7-1l-2 3l-4 1l-4 1l3 3l4 2l5-1l6 1l-1-9l0-5l-2-4l3-4l3 2l9-4l-2-2l-7 6l-3 2l-1 4l-5 0l-2 4l-1-5l-1-6l3 3l4 0l3 0l0-4l-2-6l5-5l1-4l-4-5l3-4l6-1l7 0l-4-7l-3 7l-1 5l-8 0l0 6l3 3l-5 1l2-4l4-1l6 5l0 6l-7 0l0 6M369 398l1-4l-5 0l0-5l-3 2l-3 4l-3 1l4 4l-4 0l0 4l6-1l5-2l-1 5l3 2l0 4l3-1M369 398l-2 3l5 3l1 3M369 398l5 0l3-6l-3 1l-4 1l2-6l-2-3l-1-4l4 0l0-6l-5 2l-5-1l2-3M369 398l3 6l-3 4l-5 1l-4 4l-4 1l10-1l3-1l7 1M369 398l-6 0l-4-3l-1-5l-5 2l-3 3l-8 0l-2 8l-5 0l-2-1l-5-1l-2-4l-1 5l8 0l3-6l6-1l0-7l8 7l2 4l1-7l3 4l0 4l-1 3l-3-4l4-3l2-6l4 1l3 3l-2 4l4 3M365 394l3-6l2 6l4 4l2 3l-4 3l2-6l0-5l-2-5l3 1l2 3l3-5l5-2l0-4l-3-2l-6 0l-3-4l6-1l-2-2l1-6l6 1l3 4l-4 4l2 6l-5 3l5 1l5 2l0-7l7 1l-2-10l-5-4l-6 0l0-4l-6 3l1-5l3-2l4-2l2 6l8 3l6 3l1-3l-5-9l1 2l-4-4l-1-7l-5-9l4 8l1 1l-4 9l-2 6l2 4M297 331l-5-10l13 6l5-1l-2 5l2 5l-5 3M305 327l4-7l-5-2l-9-6l9-4l5-15l-12-3l-5-9l-11-1l-12 1l2-13M264 353l5-6l8 0l4 4l5 1l3-4l2-5l-9 2M251 121l6-5l-3-3l-4 1l0 3l1 4M257 116l4 1l5 8l7 7l8-3l-4-6l-11 2l-14 4l-14-1l7-9l-9 1l-5 12l-10-8l0 10l10-2l4 11l-12 2M257 116l1-5l0-3l-4-2l-2-2l-3 1l-4 1l-2-3l1-4l5 0l1-2l-3-2l-3 0l2-3l0-3l4-2l0-5l4 0l3 3l3 1l4 0l0-3l1-4l1-3l1-8l-5-8l-6-2l0 8l6-6l4-2l1 10l4-1l0 8l-4-7l-8 9l7-1l-4 3l3 0l2 2l2 2l2 1l1-5l6 3l-1 4l-3 4l6-1l2 8l-5-5l-3-2l-1 2l-1 2l-1 3l-3 0l-1-3l-4 2l-2 1l-2 2l-3 2l-4-1l-2-3l-1-4l-2 2l-1-3l3-3l-3 0l-1-5l5 3l4-1l0-4l-4-3l-6-3l2 5l4 1l0-3l-4 2l-1 3l-1 6l2-1M257 116l-7 1l-4-4l0-3l4 1l4 2l4-2l2 0l4-3l1 2l-4 3l5 1l3 1l3-1l3 0l3-1l-3 5l-3-4M257 116l4-3l-1-2l1-3l3 0l-2-4l-4-1l-2-2l-2 2l-2 1l-1 3l-2-2l-3-2l-2-4l-1-1l-2 1l3 0l2-2l-2-2l-1 3l3-1l4 0M266 394l1 4M317 400l5 1l4-4l3-4l1-5l6 4l6 3l3 8l3-2l-6-6M322 394l-1-7l5 3l3 3l7 3l4 7l5 0M322 394l0 7l3 1l3-1l8-5l-1 7M281 396l6 0l5-3M281 396l-1-4l3-5l3-1l1-4l5 1l3 0l8 0l5 2l3-3l0-7l6-6l7 2l-4 3l4 7M281 396l-2 5l4-3l0 4M281 396l2 2l6 2l-2-4l5 1M281 396l-4-2l3-2l-3-2l1-4M286 391l1 5l-4 2M226 364l4-4M226 364l4 7l4-5l3 4M226 364l-3 10l-4-6l-3 4l1-10l2 6l2-5l5 1l-6-7l-3 5l4 1l-1-6l-2-5M226 364l-7 4M226 364l8 2l5-5M257 378l1 6l-6 4l1-6l-1-5l3-2M257 378l-5-1l0-6l-2-7l3-2l2 3l3-2l-3-5l-2 4l-3-3M257 378l5-3l-1 5M253 382l-7 1l-7 2l-4 6l6 1l-2-7M277 96l-3 2l2 4M275 94l2-2l-4 0l-5 0l0-2l-2 1l0-2l-2-3l2-1l3-2l-1 5l-2-3l-2-2l-2-4l-3-2l-2 3l-3 2l-1-3l-3 0l-2-6l-1-8l-2-7M275 94l-2-2l-1-3l-4 3M275 94l-1 4l5 3l3-4l2 4l3-5l1-5l-8-2M326 336l6 3l-3 4l0 8l-7 3l1-7l0-7l-2-4l2-5l0-7l6-2l-6-3l0 5l5 4l1-6l4 4l-5 2l-5 3l-7 0l-1 6l3 3l5 0l3-4l5-4l-3-4M326 336l-3-5l-7-7l7 0M440 214l-2-2l-1-4l5 2l-4 2l-5 0l-5-5l-4 2l-4 1l-3 1l4 3l-1-4l-5-2l-2-4l-5 1l-5-1l3-5l2 6l4 3l1-4l-3-3l-2 4l-2 4l-3-5l-6-2l9 7l6-1l3 0l2 3l0 4l-4 3l-4 3l-3 2l2-7l1 5l1 3l-4-1M440 214l2-4l2-4l-5-1l-5 3l-4-5M440 214l4-1l3 1M440 214l-4 1l-3 2l-4-3l4-2l1-4l3 0M440 214l1 4l1 5l1 3l1 5l5 1M440 214l-3 5l-4-2M441 218l-3 4l-2 4l4 5l-1-5l-3 0l-4 0l2-6l-4 3l1 2l4 6l-3-5M441 218l4 0M441 218l3-5l-2-3M441 218l4 3l7-1l3-1l-6-2l3 3l4 3l3 2l1 7l4 5M441 218l-4 1l-3 1l-5 0l1 3M389 145l-4 6l-6 2l2 5l-6 5l4 6l-10 1M392 151l6 3l4 2l6 1l-6 6l0-7l-3 4l3 3l-4 5l-4-3l-7 3l-8 1l6-5l2 4l3 4l2 5l-2 5l6 2l-1 5l0 6l-4-2l4-4l5-5l-4 0l-5 2l4 3l5 2l-5 4l2 7l1-1l-3-6l-5 0l1-2l0-7l-5-3l4-1l1 4l-6 3l1-6l-3 5l2 1l6 4M392 151l-7 0l-1-8l-7 4l2 6M392 151l7-3l-4-2l4-5l0 7l-1 6l1 6l-5 5l2 7l4 2l4-2l3-2l5-3l6 2l0 5l5 4l0-6l-5 2l-2 4l7 0l-2 5l-6 3l-4-6l-2 5l-3 8l-2-8l-4-1l6-3l5-1l5-2l-1 8l3 3l-3 6l6-2l6-2l2-4l8-4l2 5l-1 4l3 3l-7-1l-6 4l-6 2l3 3l-4 4l3 2l1 4l-4 1l-4 1l-1 6l-3-3l-3 6l3 5l4-3l0-1l-4 0l0 4l-3 1l-4 0l-2 6l2 2l0 4l3-5l3 2l4 0l0-10l-3 0l-5-2l2-3l-4-1l0 7l1 4l-3 2M392 151l2 6l5 3l-1 8l-2 4l-4 5l-4 1l-2 5l-6-1l-2-4l-1-1l3 5l3 6M392 151l-3 5l-4 8l-10-1l-3-5l-9 3l3 6M284 232l3 3l0 3l2 5l4-1l5-5l-1-5l0-6l7 2l-2-4l-5-2l0 4l-6 2l6 4l-6 4l2 6l8-2l0 4l5 2l4-2l3-2M280 235l-4 4l1-7M280 235l7 0l1-5l-1-5l-2 3l-6-4l4-3l3-3l5 1l6-2l5 1l-5 4l0-5l3-6l7-8l-8-11l-5 10l13 1M397 381l-7 6l-3 4l-4-2l-6 3M397 381l6-5l4-2l1 3l4 6l-5-9l-5-5l-7 2l-4 5M397 381l7 1l-5 7l10-4l-5-3l4-5l1 8l3-2M336 396l0-4l1-6l8-7l8-1l4-2l-1 5l-4 1l1-4M345 219l-4-1l3 6l1-5l-1-6l-4-4l1-4l2 2l-3-8l1 6l-5-2l4-4M345 219l3-2l1 5l0 5l2 3l0 4l-5 3l-2 4l5 0l-1 5l4-2l2 2l2-3l-4 1l0 5l-4-3l-4 0l-3 4l-3-1l2-4l-2-3l3 0l3-1l-3-2l-3 3M315 337l-5-1l6-5l-6-5l6-2l7-5l-8-7l-11-4l4 5l-4 5l-12 3l3-9l-10-2l-7 5l-1-11l-2-13l12 6l-10 7l-12-6l-10 5l-11-12l-8 7l-2-8l-4 5M316 324l0 7M316 324l-7-4l1 6M316 324l-2-6l9 1l7-7l-1 10l4-3l7 1l-7 6l0-7l-3-7l16-7l7 12l5-7l6 16l-11 7l-4 4l6 6l1-5l-3-5l-12 0l8 4l-5 1l-7-2l4-3l-1-13l13-3l11 9l8-12l5-3l3 8l-8-5l2 13l7-7l-1-1l-6 8l11 2l1 9l-8 1l-2 6l4 7l-4 4l4 1l2 2l2 4l2-6l-2-3l-2 5M260 86l-1-4l-2 3l-3 1l1 3l-4-1l-1-1l-1 2l2 2l0 3l-2-1l2-2l0-3l3-2l-2-2l-2 3l-2-4l-3 1l-2-5l1-3l4-3l11 4l-3-11l11 2M260 86l2 3l2-3l-3-2l-1 2l-1 4l4 2l0 4M260 86l-2 1l-1-2l0-5l5-1l-1 5l3-1l3-2l-1-5l5-1l5 0l0 1l2 6l3-4l-5-2l-5-1l1 4l-6-3M259 82l3-3M259 82l2 2M259 82l-2-2l-4-1l6-2M288 211l-2 7l-6-6l-13 0l-11 1l-5-6l-2-4l3-9l-6-8l1-10l-9 1l-3-10l6-14l-6-10l-8 9l-8 5l-6 9l-9-1l1 8l8-7l9 2l13-1l11-8l1 9l0 8l6 4l9-6l9-13l-13 4l4 9l-15-6l-9 9l8 9l-2 3l8 5l10-10l18 2l10 8l4 8l6 9l-7 1l1-10l-6 9l5 1l4 5M288 211l-8 1l-4 6l3 6l-3 3l-4 6l0-6l-4 2M288 211l3 8l2-7M284 256l-2 15l10 10l-8 8M284 256l9 15l9-1l15 6l-4 9l10 3l4 15l12-5l3-9l-9 2l-10-3l-5 9l-14 11l-11-5l4-13M284 256l-10-6l-7 0l-5-4l-2-6M284 256l-2-10l-2-5l4 1l3 6M284 256l-14 2l-3-8l2-5l-4-2M284 256l7-6l6 12l9-1l9 1l6 2l2-3l-3-1l-5 2l2 14l5-8l4 3l3-2l-1-3l-6 2l-1-4l4-1M293 271l-11 0M293 271l10 10l10 4l-4 8l-7 6l-9 4l-6-6l-2 13l-4 14l-1 10l7 5l4 4l4-4l6-4l1 8l5 6l-5 0l0-6l-7-4l-8 0M293 271l-1 10l11 0l6 12l9 4l-5-12l12-4l-2 7l6-3l3-5l5 1l-3-4l3-3l1-4M293 271l4-9l2-13l2-5M255 394l3-7M255 394l5 2l0-6l3-5l2-6l6-4l-2-5l-1-4l-2-4l-2 3l-3 2l-3-4l-5-1M255 394l-3-6l-6-5l6-6M255 394l-6 2M255 394l5-4M120 257l-2-2l-3 3l0-4l2-2l-4-1l0-2l4-7l2-4l1 3l1 5l-3-1l-1-3l3-1l3-3l5-2l3-4l-3-6l5-4l-8 4l-1 3l4-3l-3 0M120 257l-2 2l3 4l4-1l2-3l2 3l-1 3l7-1l0-4l-1-4l-4-1M144 218l3-4l-2-7l5 0l-3 7l-5-3l1-2l2-2l5-4l1-1l6-6l3 3l-4 3l-5 0M144 218l-2-7l-4 2l-3 4l-2 5l2 4l-7 0M144 218l6 1l8 3l-6 4l-6 0l-2-4l6-3l-3-5l-4-5l-5 4l1 6l-6 3M144 218l0 4l-5-3l-4-2M144 218l-5 1l-4 7l-4 6l1 5l3 3l-5 2l-4 3l0-5l4 2l1 3l-5 0l2 5l-3 2M144 218l-6-5M230 315l9-7l3 8l9-4l14 6l3 10M230 315l12 1l5 11l-6 6l-5-9l6-8M230 315l-9 3l0 1l5 8l-6 3M230 315l6 9l-2 9l3 5l4 7l-7-2l-5-5l-8-4M230 315l-4 12l-5-9l4-11M434 194l4-2l5-1l-2 4l-3 4l1 6M434 194l1 8l-7-4l3-5l-4-2l-4-3l-2 5l1 7l-5-1l-4 5l5 0l4-4l3-6l2-3M434 194l-3-1l-2-6l-6 1l-5 1l3 4l-4 6l-2-4l-5 2l-4-4l0 6l4 2l0-4l-4 2l-5-2l-6-2M434 194l4 5l-3 3l-1 6l-6-1l-1 4l-3-2M434 194l-1-6l4-5l-8-7l-6 2l6-4l8 9l4 1l-2 4l4 3l-2-7l-12-10l-11-5l5 3l6 2l0 2l1 4l-7-2l2 5l4 4l4 1l5 4M295 383l4-3l2-6l-4-1l2 7l4 3l-6 6l4 2M295 383l2 6l-2 5l3 5l7-1M297 389l-5 0M268 90l0-2l-2 1l0-4l1-4l5-2l-3 4l3 3l-1-2l3-2l4 0M268 90l-2-1l-4 0l-3 1l-4-1l-1 3l1 2l1-3l2 2M268 90l4-1l-4-1l4-2l2 4l0-4l0-4l3 4l-3 0l-3-2M261 97l1 4l2-1M176 196l10 7l-6 6l-12 3l0-6l-5-1l4-4l5-3l4-2l-2-8l-7-8l-9-1l-1-7l5-1l5 9l-8 3l-1 11l-1 2l-1 6l2 4l5-1M176 196l4 13l8 1l-2-7l-1-11l8 7l2-8l-10 1l6-12l8-1l6-6l2 9l-8-3l-4 12M176 196l9-4l-11-4l-7 8l-7 3M176 196l-4 8l-5-3l0-5l-3-7M176 196l-9 0l-9-2M185 192l-2-10l-7-2M450 203l-4-7l-3 2l3 4l4 1l2-1l0 7l2 0M123 259l2 3l-1 3M293 372l7-3l7 2l4-3l6 1l-3-5l5-1M277 204l-4-10l7-8l-7-11l-11-1l0 10l-9-4l-1 14l12 6l13 4M276 245l-7 0l1-4l-6-3l3-2l5-3l4 6l4 2M276 245l0-6l-6 2M276 245l6 1l2-4l5 1l2 7l8-1l7 12l2-10l4 5M304 228l-1 4l5 1l-4-5l3-3l0-6M304 228l5 0l3 5M143 244l3 2l2 2l2-4l1-3l1-5l-1 4l-3-3l-4-3l4-1l-2-7l-6 0l5 4l-4 2l-4-2l3 6l-4 1l-1 3l5 2l2-2l2-3l4 0l4-1l10-6l-8 1l5-2l5-6M143 244l-3-2l-1 4l-3 3l-2-6l1-3l4-1l1-3M143 244l-1-4l-3-1l1 3l-3 2l-1 5l-1 3l5 3l-3 0l-3 1l1-4l-3 0l-4-2l4-2l-1-3l3-2l-4-1l2-5l-4-1l-2 4l-3-2l1-3l4 1l-4-7l-5 9l5-3l-4 3l-1 0M143 244l-4 2l3 4l-6-1M143 244l3-3l-2-4M143 244l-1 3l3 3l-3 0l0 3M142 247l4-1l4-2l0 5M142 247l-3-1l-2-2l-2-4M142 247l0 3l-2 5l-2 4l-1-4l-2-3l7-2M251 88l-2 1l0 4l-3-1l-2-2l0 5M251 88l3 4l-3-1M220 214l-7 4l-8-4l-3 7l2 1l1-8l7-5l8 5l-1 5l-6-1l-1-9l0-10M136 237l-5-5l6-2l-2-4l5 0l4-4M136 237l-4 0l-6 3l-2 3l-3 3l-5 2l6 1M136 237l1-7l3-4l1 6M136 237l3 2M230 112l8-6l5-3l3 0l3-4l3 1l-2 2l2 2M230 112l13 3l3-2M238 106l4 5l4-1l-1-4l-3 5l1 4l2 4l5-2l4-4l1-3l3-2M238 106l7 0l1-3l4-1l-1 3l0 4l1 2l1-4l2 1l-3 3l5-1l-2-2l1-2l-3 1l-2 2l-3 1M238 106l-6-1l-4 2l-10 14l10-1M238 106l-4-3l7-4l2 4M238 106l3-7M213 218l1 5l-10-1l9-4M307 125l4-4l-1-5l5-4M307 125l-3-7l-6-5l6 0l-1-5l6 1l1 7l-6-3l5-4l-4-5l8-1l-5-4M354 274l1-4l-3 0l1-4l-4-1l-4 0l1 4l3-1l0-3l-2-3l3-5l-4 1l0-3l-1-4l-3 2M354 274l0 8l6 10l10-3l-10-5l0 8l9 8l-11 10M354 274l-4-1l-1-5l3 2l2 4M352 270l-2 3l-4-4l-4 1l3-5l2-3l-3-2l2-2l-4-2M270 341l-3-5l7-3l5 6l1-5l4-3l-3-7l11-3l-1 10M270 341l-1 6l-5-5M225 396l-9 1l-2-6l1-1l7-6l5 5l-2 7l-1 5l-8-4l6-6l-8 0l-1 10M225 396l-3-5l-7-1M328 209l-5-5l-3 6l8-1l4-3l4-3l4 6l3-2l0-12l0-1M328 209l0 5l-8-4l2 5l0 5M386 404l-2 5l-4-2l-3-1l-5-2l-6 2l-2 3l-2-6l-2-3l3-2l-1 5l4 3M386 404l-5-5l-1-4l-2 3l-2 3M387 413l-3-4l-3 3M292 321l-8 10M292 321l-7-11l-8-6l-8 7l9 4l-13 3l-5-8l5-12l10-7l-11-2l1 9l-9-12l8 3l5-8l6 10M249 203l-5-14l-6-12l-8 2l5-12l12 1l11-3l-5-13l10 4l-6-15l-11-7l-4 7l-1 12l-11 7l-3-8M249 203l15-3l-13 7M322 215l-7-3l2 6l-3 4l4 2l3-1l4 0l1-4l2 4l3 2l-3 5l-2 3l3 2l-1 3M322 215l-5 3l4 5M322 215l4 4l2-5l-6 1M317 218l-4-3M317 218l1 6M237 274l5 8l-9 3l3-10l1-1M236 275l3-10l7 9l-4 8l-6-7M267 212l-1 9M267 212l-3-12l-8 13l-3 5M443 198l1 8l2-4M443 198l-5 1M337 386l-5-3M337 386l5 2l3-9l-8-4l-2-5l-2-5l-7-5l3 7l-4-1M410 201l7-2l-7-2l1-4l4 2l-3-6l-6 4l-5 4l2 7l-5-3l3-4l-1-6l6 2l5 0l1-4l3-3l-6-1l-5 0l2-4l-5-3l-1-4l2-5l0-6l5 1l1-7l-2-6l-4 5l2-6l-6 4l-4 3l0 8l-4 7l6 0l6-3l2 3l-3 6l-1 6l-3-5l-1 5M417 199l1 5l-3 4l-2 6l4-3M255 89l1 2l3-1l-1-3l-4-1M255 89l3-2M296 356l-6-1l-1 5l5-1M279 224l1 4l-4-1l-4 0M321 264l-1-4l-4-1M304 118l-8 5l-7 2l-1 5l0 6l6-2l-2 5l-4-3l1 7l3-4l5-1l-3-4l-1-7l6 2M304 118l-2 5M304 118l7 3l6-3l-7-2l-6 2l-9-1l1 6l-5-3l-2 5l-7-3l9-2l4-3M304 118l0-5M346 233l0 4l3 4l3 3l3-4l0-4l-3 3l0 5M346 233l5 1l-4-4l-1-4M346 233l-3-1l-1 3l4 2l-5 2l0 3l3 4l-4-1l-4 0l-1 5l-3-6M346 233l-4 2l-4 0l-4 0l-5 0l2 4l3-1l1 3M346 233l1-3l-4-2l-3 3l0-3l4-4M342 235l-2-4l-2 4l-4 3l-5-3l-1-5l4-1l3 0l2-6M342 235l-1 4l-3-4M408 157l5 8l-6-1l5 3l1-2l5 4l-5 4l5 1M375 362l3 4l3 4l-4 2l-3-6l4 0M375 362l1-6l3 5l1-4l0-5l5-8l-7-5l-6-1l4 7l9-1l5-2l-1-3l-3-1l4 4l3 5l-6 2l7-1M375 362l4-1l5 2l4 0l-4 4l-3 3l6 1M375 362l-7 3l-4 4l-1-4l-3 2l-5-2l2-5l4-5l-2-3l-4-3l-5 2l-2 4l-7-6l-6-2l8-4l7 3l0 5M375 362l-3-3l4-3l-2-5l-6 1l-2 5l-5-2l0 7l3-1l-3-6l-3 1l-1 4l-5 2l-1 4l4-1l0 6l2 5l3 2l1 4l-5-1l-3 6l5 3l4-4l-1-4l5 2l3-3l-3-1l-6-2l3-2l-3-2l-3 2l-6-4l-5-6l5 0l-2-5l-1-6l-9-2l2-4l9-3l-1-9M375 362l-7-1l-4 0l4 4l1 3l5-2l-6-1l0-4l4-2l-2-4l-2-3l1-7l7 0l-2 6l6 1l4 2l-4 3M375 362l-1 4l-3 5l2 4M376 356l-6-1l4-4l-5-6l-6 5l5 2l-3 1l-6-1l1-7l-5-2l0 6l-3 6l7-3l4-2l-3-5l9 0l3-7l2-11l-10-1l-5 8l5 7l5 4M360 253l-1 6l0 3l-4-2l4-1l-1-4l1-3l-1-3l-4-3l-2 3l-1 3l-3-3l0-3l-2-3l-2-2M360 253l-2-4l-6 0l-4 0l-4-3l1 5l6 1l3 1l-4 4l2 4l1 5l4 0l1 7l4-5l3 6l-2 1l5 8M360 253l-2 2l-3 5l-3 1l-3 4M360 253l-1-1l-5 1l4-4l-2-6l-1-3l-3-1l-6-2M360 253l2 12l3 9M362 265l-3-6M362 265l0 3l-5-2l-2 4M362 265l-3-3l-2 4l-3-3l-1 3M362 265l-5 1M297 138l7-1l0-7M297 138l6 5l-6 0l0 8l-3-5M303 143l5-4l2 5l3 4M303 143l-1 5l2 5l-7 3l10 3l5 0l7-3l-6-2M303 143l7 1l4-4M150 244l-4-3l2-4l0-4l-3-3M421 183l-5-5l-3-5l-2 7l-4-5l0-5l-5-1l-4-1M421 183l2 5l2-5l-4 0l-3 6l-6 0l-3-4l-3-4l1-6l-3-3M408 377l-5-1l-8-5M369 153l1-7l-6-2l-8-2M369 153l3 5l9 0l4 6l5-2l-3 6l-2 6l-7 4l10 0l2 4l7-3l-5-2M369 153l-6 8l7 3M369 153l-9 1l2-5l2-5l-3-5l7 2l2 5l7 1l2-5M369 153l8-6l8 4l-4 7l8-2l-4-5M377 147l-4-5l-5-1l2-6l6 3l4-8l-6 2l-4 3M256 101l1-3l-5 2l2 3l4 3l0-3l3 3l3 2l2-2l3-1l2 2l-3 3l-2-4M258 103l-4 0l-4-1l-1-3l-3-2l1-2M258 103l1-4l-1-4l-1 3l2 1l3 2l0 3M258 103l4-2M150 203l0 4l8-1M299 90l0-5l-5-4l-6-1l-3 7M306 238l2-5l1-5l1-5l2 4l-3 1l-2-3M306 238l-4-2l-1 4l-3-3l-7-1l-4-1l5-3M306 238l-5 2M360 413l5-1l4-4M360 413l-1-4l-3-5M365 412l1 1M365 412l4 0M365 412l-1-3l-5 0l-3 3l0 2M328 247l-3 2l0-5M330 312l9-14l-6-7l-6 12l-9-6l-3 15l12-9l3 9l10 8M330 312l-15 0l-7 1l1 7l5-2l-6-5M296 123l-3 4l-5 3l-7-1l-2 7l4 6l5-6l-5-3l0 9l6 1l2 10l6 3l1 10l-5 7l7 7l-1 12M269 245l-7 1l-5-1l-1-5l-5 1M269 245l5 5l-4 8M301 374l-1-5l0-6l6 4l5 1l3-4l5-6l-7-2l2 8l-4-3l-4 6l-6 2l-3 4M301 374l2 4l-4 2l-6-3M300 369l-4-5l-4-2M297 409l1-9l-4-1M174 188l9-6l7-11M363 365l-2-3l-6 3l-3-3l-3-1l-3 5l-3 5l8 1M363 365l1-4l2-4l2 4l2-6l-4 2l-1-4l-4 2M363 365l5 0M267 358l7-1l2 5l1-4l-3-6l7 4l5-4M270 363l-2 3l-4-1M438 212l-2 3l-3-3l-6-1l-2 2l-1 4l-2 3l-6 1l-3 4l4 1l-1 3l-1 9l-3 1l0 5l-1-2l-5 0l0 1l0-5l1-4l3-4l-2-3l-2-4l2-7l5 2l0 7l-3-1M436 215l1 4l1 3l4 1l4 2l0 3l-2 3l2 6l1 5l-4-3l1 5l3 5l5-1l3 1l5 1l5-1l2 1l-1-5l-1 4l-2 4l4-3M273 379l-2-4l-6-2l-3-3l0 5l-3 0M271 375l3-4l1 4M298 399l0 1l-3 5M290 85l-2-5l-7-2l15-1l-8 3M268 405l-1 3l-4-1l-1 5l-3-2l-3 6l6 0l0-4l5-4l-1 5l-4-1l-6 4l0 1l6-1M268 405l-4-1l-1 3M344 338l-3-5l-8-7l-2 6l1 7l4 2l1-5l-5 3M430 180l7 3M430 180l-1 7M430 180l-5 3M350 346l5-3M350 346l5 3l5-4l-4-7l8 3l-4 4M253 235l3 5l-6 0l3-10l0 5M341 242l-1 3l1 5l4 1l3-2M341 242l5 1l3-2l3-2l-1-5M342 188l2-6l0-8l-5 4l-2 4M344 182l-2 0l-3-4l-6-3l0 7l-5 3l2-6l-2-8l-3-3M403 376l-1-7M403 376l1 6l-7 5M221 134l7 5l7 4l7-2l-11-9l7-4l-2-8l7-5M221 134l-9 7l-11-1l-6 13l-6 9l15 3l1-10l-10-2l-4-1l-2 10l-8-1l-6-3M221 134l-12-1M455 242l3 0l-1 4l-5 2l-1-3l-4 4l-1-2l1-5l-3 2l2 3l5-2l-4-3l3-3M455 242l-4 3l6 1l3 4l-3 2l-2-3l2-3l4-1l1-4M455 242l2 4M455 242l-3 0l-5 0M114 265l-4-6l2 2l2 4l0-1l1-3M114 265l3 0l1-6l0-4l-3-1l-3 1l1-4l2 3M341 218l-2-3l-2 3M341 218l3-5l-5 2l-4-5l1-7M347 230l4 0l1-4l-3-4M347 230l-4 2M347 230l2-3M291 153l6-2l7 2l3 6l-9 7l13-3l7-3l-6-1M291 153l-6 9l12-6l0-5l5-3M272 366l2 5l4 1M269 370l-4 3l0 6l-3-4l3-2M269 370l5 1l3-6l4 2l3-4l5-3l-1 3l-3 4l-2 3l-2-3l4 0M287 225l-1-7l-5 0M287 225l-4-4M287 225l4 3l1-5l5 3M287 225l4-6l6 3l-5 1l-1-4M287 225l5-2M303 383l0-5l4-1M369 300l3 14M260 405l-1 5l-7 2l3-6M260 405l-4-2l-5 1l-10-1l-7 8l11 7l7-6l-1-8M260 405l-1-4l1-5M260 405l4-1l3 4M259 401l-3 2M259 401l5 3M313 103l4 4l-1-8l-4-3l6-7M313 103l3-4l5 1l4 1l3 4l-1 8M313 103l-4 6M313 103l-1-7l7-1l-3 4M319 137l5-2l5-3l5 1l-5 4l0-5l-6-5l1 8l5 2l-5 3M325 92l-4 8l-4 7M321 100l2 8l5-3l5 7l0 9l5 3l5 5l-1 8l-5 3M321 100l-2-5M354 282l-6 2M354 282l6 2l3-9l-5-2M150 207l2 6l-5 1M128 265l-4 1M128 265l-3-3l4 0M152 226l7 3M152 226l-2-7l2-6M152 226l2 5l-2 5l-4-3l4-7M334 359l0-6l-5 5l4 7l1-6l-5-1l-7-4l4 6M334 359l5-6l-5 0M334 359l7 4l-6 7l8 1l-6 4l-8-2l6-3l-6-3l-5 4l5 2l0-6l4-2l8-2l8-2l-6-3l5-3l4 0l0 7M334 359l9-1l-4-5l-4-6l1-6l-7 2l6 4M250 240l-3 8l6 13l7 11l-4 14l-14-4l2 9l1 9M328 266l2-2M328 266l-2 5l-4 4l0-7M260 272l-14 2M260 272l9 9l-13 5l-12 5l-10-1l-1-5M379 169l6 5l5-2l-2 6l-8 4M256 326l9-8l4-7l-9-1M328 185l-3 4l-2 7l-5-5l0 4M328 185l-5 1l-6 0l-5 3l1 7l5-5l-6-2l-12-9l7-8l-9-6l-13-4l-14-1l2 14l-11 9l11 10l17 0M326 177l2-6l1-6M241 403l-5 2M241 403l-5-4l-1-8l-8-2l-5 2l0-7l3-5l5 6M241 403l11 9l-7 6l11-1l-4-5l4 4M274 82l-2-3l4-3M344 155l-6 2l-6-5l-5-4l-4 5l-4 3l4 6l-5-2l1-4M363 350l2 3M359 352l-1 4l-6-1l-3 6M315 251l4-1l1 4l3 2l-3 1l-3-2l-2-4l2-4M315 251l5 3l0 3l0 3M319 250l4 2l6-2l6 0l3 4M319 250l6-1l4 1l1 4l3 0l2-4l3-1M319 85l5 2M415 238l1 1M415 238l-2-4l0-5M413 234l-1 5l-1 3l-5 1M413 234l-3-4M413 234l3-5M413 234l-6 0l2 3l2 5M413 234l-4 3l-3 1M422 220l-2-2l1-4M416 221l4-3l4-1l4 0l1 3M355 260l-1 3l5-1M355 260l-2-3l-3 0M353 257l5-2l-4-2l-2-4M353 257l-1 4l-5 1l-1-4M353 257l1-4M348 131l-6 6l5 1l1-7l5 0l5-1l-3 6M348 131l-5-2l5-3l-4-3l-1 6M348 126l3-6l-7 3l1-7l6 4l5 4l-3 7M348 126l8-2l2 6l3 9M328 274l2 1l-2 3l4 2l2 3l-1 8l4-5l5 3l2-6l-4-1l-3 4l-3-3l-5 2l4 6M328 274l1-5M328 274l0 4l-6-3l-5 1l-14 5M328 274l3-2l3 2l3 0l3-1M328 274l-2-3M328 274l-6 1l3 6l7-1M260 229l-4-1l-3 2l0-4l2-2l3-4M291 113l2-7l2-6M298 109l-5-3l-5 0l-4-5l-5 0M255 224l-4-5M255 224l1 4l-3-2M366 380l2-3l3-6l-2-3M366 380l-5 2l-2 2l-3-3M366 380l0 4l4 1l3-4l3-2l3-5l3 5l1-4l4 2M366 380l-3-4M318 346l-1 8l6-7M439 226l3-3l3-2M328 230l4 2l2 3M254 106l4 0M254 106l0-3M254 106l1 4l3 1l3 2l0 4M317 369l3 5l0 8l1 5M317 369l-2 8l0 8M320 374l-5 3l5 5M164 218l-4-3l-3 2M164 218l7-3l-4 5M158 222l2-7l8-3l4-8l-4 2M278 113l3 4l-4 6M275 118l-6-3l-1-5M275 118l-8 0l-1 7l-5 9l5 7l-9 0l-5-12M275 118l6-1l3-3M341 277l1-3M341 277l2 3M341 277l-4 0l0 4l-3 2M341 277l-1 5l-3-1l0 5l7-3l2-4M341 277l-4-3l0 3M328 105l6 0l-4-5l-1-5M328 105l2-5M331 259l-1-5l-4 1l0 4l-3-3l0-4l3 3M388 133l5-1l2 4l-7-3l-8-3l7-3l6 5l5 8l1 1l5 9l2 1M388 133l-1-6l-4-4l-8-7l-2-3l-5-3l-5 5l6 6l6 2l-4 3M323 252l-3 2l-3 1M323 252l2-3l-5-3M219 157l3 11l8 11l6-3l2 1M219 157l11 3l-8 8M230 160l5 7l1 9M285 310l8-7l2 9M453 229l4 1l-1 4l4-2l-3-2M453 229l0-3l3-3l1 3l3 6l0 4M233 378l4 3M233 378l-8 1l-2-5M140 226l-1-7M355 147l5 7l-8 0M303 232l-1 4l-4 1M341 333l-10-1l6 4M341 333l7-7l16 0l4 9l4 3l9-6l-3 7M332 152l1-5l-4-4M327 148l6-1M325 189l-2-3l-5 5l-1-5M325 189l-7 2M277 394l0-4l-6-1l-3 1l-5-5M277 394l-6-5M446 225l4-1l-4 4M265 298l4 13M315 377l-4 5M315 377l-4-2l0-7l-1-7l2-5l5-2l-3-5M247 168l6 12l-7 6M356 400l-4-1l-4 2l2-6l-1-9l4 6l0-5l-1-5l-7-3l-2-8l-2-8l2-5M289 125l-8 4l1-7l-1-5M289 125l4 2M245 106l4 3M379 374l4 1l-2-5l-2 4M282 411l0-4M340 228l-5 1l1 3M281 129l2 4M258 95l-4 1l-2 4M322 401l-7 1l10 0M341 363l5 3M390 195l-5-6M242 256l5-8M460 250l3 3l1 1M460 250l1-5l4 4M333 175l-5-4M418 204l3 3l-1 3M435 231l1-5l-2-6M435 231l5 0l4 0l-1 2M317 276l8 5l3-3M116 248l1 4M116 248l-3 1M116 248l1-6M116 248l2-3l2-4l0-3l3 0l1 5l2 2M274 352l0 5l-1 4M269 354l5 3l3 1l3 3l3-2l-2-3l5 1l-3 2l1 4M329 260l-3-1M264 200l-2-16M264 200l9-6M134 243l-2 5M134 243l3 1M360 371l0 3M360 371l-3 5M355 102l3 0l4 7M347 97l0 3l-2 5M382 379l-2 5l-4-5l0 6l-6 0l-2 3l-3 1l1-5l-4 2l3 3M452 220l-2 4l6-1l-1-4l-5-6M362 268l1 7M364 144l4-3M272 86l2 0M272 86l0 3l2 1M374 398l4 0l3 1l3-4l-1-6l2-4M181 161l-10 8l2-10M181 161l-1 11l9-10M274 98l-3-1M252 84l2-2M252 84l-2-2l-2 1l-2-2l-3-2l1-11l0 8M334 105l7-3l6-2l-5-4M374 327l7 5l4-3M374 327l-6 8l-9-1M381 332l5 6l-1 6l2 5l3-7M234 290l8-8M244 68l4 5l8-7l-9-1l9-7M244 68l3-3M407 164l-5 5M407 164l0 6l6 3l-1-6M450 224l3 2M408 216l0-5l-2-2l3 2l3-3l1 6l0 4M408 216l5-2l4 1l3 3M408 216l1-5l-1 0M323 340l6 3M281 356l-1 5M281 356l0-5M281 356l-4 2M291 343l5 3l-1-7M387 349l-7 3M387 349l-1 8l4 0l6 9M387 349l-3 5M387 349l3 8l5-2l3 2M346 243l-2 3M251 94l3-2l2-1M251 94l3 2l3 2M350 273l-5 0l1-4M289 373l1 6M289 373l-3 4l1 5M289 373l-6-3M443 239l-2 2l-1-2M441 241l3 3M441 241l6 8M362 403l-3 6M376 385l-4 3l-4 0l-2-4M376 385l-3-4M376 385l4 2l-5 2l-1 4M376 385l-1 4M376 385l4-1l0 3l3 2l-3 6M331 332l-8-1M368 335l-4 6l8-3M202 221l-4-1l-1-12l-9 2l3 7l6-9M198 220l7-6M198 220l-7-3l-8 0l-3-8l-8-5l0-6l-5-2M198 220l6 2M421 193l4 1l3 4M355 240l4 2l-3 1M359 242l-4-6M359 242l-1 7M452 242l-1 3M226 327l10-3l11 3l1 6l3 10l5 3l-8 1M317 354l2 4l3-4l-5 0M205 155l8 11M389 156l1 6l4 3M389 156l5 1l-4 5M329 235l3-3l3-3l5 2M363 161l-6 5M363 161l-7-1l4-6l3 7M349 386l-4-7M349 386l-7 2l-6 4l-7 1l-1 8M349 386l3-4M349 386l4 1l6-3l-1 6M338 172l1 6M338 172l1-6M281 324l-7 9l6 1M286 406l1 6M461 245l-3-3M461 245l5 0M359 384l3 2l0 5M167 180l4-11l9 3l3 10l8-2M218 121l3 3M242 141l-4-13M242 141l8 3l-4-10M117 265l-3-1l-2-3l3-3M302 343l-6 3l6 3M296 346l-7 2M306 246l-7 3M306 246l2 5M400 174l-3 5l-1-7M397 179l4-1l6-3l6-2M171 215l-3-3M171 215l9-6M171 215l12 2l5-7M352 261l2 2M312 96l0-6M253 152l-12 1l9-9l3 8l-7 7M253 152l4-11l4-7M422 200l-1 7l-6 1M425 194l6-1l2-5l6 0M250 144l7-3M425 213l3 4l1-3l-4-1M404 150l-5-2M191 217l-6 2l-2-2M342 270l3 3M388 178l-3-4M131 245l-3 5M229 338l8 0l-3 5M162 171l-1-7M162 171l9-2M315 312l-1 6M331 225l4 4M253 79l-5-6M381 124l-6-8l-6 5l1-6l-2-5M381 124l6 3M381 124l2-1M381 124l-1 6l-5-7l6 1M148 233l6-2M443 191l1 0l-3 4M446 196l-2-5M446 196l6 6M337 264l0 3M408 227l-2 3M413 214l-4-3M241 392l-5 7M344 213l-1-6M344 213l3 1M124 243l-4-2M429 214l-2-3M390 357l9 2M353 317l-5 9M289 403l0-3M308 233l-6 3l-5-4M329 285l-4-4M375 123l0-7l-5-1l-7 0M398 140l-3-4l-6 4M460 232l4 5M124 235l0-6l7 3M266 413l1 2M463 253l-6-1M373 113l-3 2M315 402l-2-5l-4 4M135 260l2-5M135 260l3-1M400 184l0 7l4-6M143 232l-6-1l-3 2l-1 4l0 4l-3 0l3-4l6-3l-2-3l4-4l6-3l-1-4l-2-7l-1-4l-4 7l5-3l5 0l5-3l4 0l4-3l-2-5l0-4l-3-2l1-4l1-9l0-4l-2-7l3-5l1-3l6-2l8-4l13 0l3-6l-16 6l-2 10l-8 5l-5-6M143 232l-2-5l5 2l1-5l7 0l3 7l-5 1l3 4l2-5l4-2l1 1l-7 6l-4 3l1-7l0-5l5 4l5-1l-2-5l-3 6M143 232l3-3l6-2l2-3l3-3l6 0l2-4l6-4l4-7l-1-7l11-9l-9 1l-8 2l6 6l2-8l-5-6l-3 8l0 5l-8 0l6 4l-4 5l-4-1l-4 4l-4-2l0-5l2-1l3-4l5 0l4-4l4-1l-5-4l8-4l-6-12l-8-1M143 232l-4 2l-5-1l-4-3l-3-3l-2-1l8-3l-6 4l-5 6l-3 5l-5 9l-1 2l0 2l-3 8l4 3l1 3l4-2l2-3l-2-4l4 0l-2 4l3-1l-1-3l3-1l-2 4l2 3l-1 4l-3-2l2-5l4 1l1 4l-4 2l-1 0l-9-1l7-1l-1-4l-4-1l2-3l-1-3l3-3l-4-1l-4 0M143 232l2 4l0 4l-3 3l-3-2l-2 4l-4-4l3-2l3 2l1 5l2-3l2 3l1 4l4-3l1 2l-5 1l-3 4l8-5l-1-5l0 3l-5-1l5-2l-7-1l-2-5l-1 3M143 232l5 1l4-1M139 234l6 2l3-3l-2-4M139 234l-3 5l-3-2l-3-2l0 6l-3 3l-3 0l0-4l2-4l4-6l-8 3l3-7l9-8l-1 5l5 1l-1 7l-3-3l-7-1M139 234l1 4l5 2l4 4l2-3l4-5M253 103l0 3l-4 0l-3 2l-3 7l6 1l5 0l0-3l-3-3l-2-4l4-3l3-2l-2-4l4 1l3-2l4 4l-1 4l-3 2l-1 5l-2 1l-4 1l1-2l-1-1l0 3l-3 0l-2 3l-5 4l-1-5l-2-5l5-2l1-3l2 1l-1 4l1 6l1 5l-6-1l-5 5l4-10l5-5l-2-2l-3 0l-2 2l-1-4l3-6l5-1l-3-2l-2 3l0-2l1-4l0-4l5 0l-3 3l-2-3l3-3l-3-1l0-5l3-4l4-2l-4-3l0 5l2 3l2-5l3-3l2 7l2 4l1 2l2 3l-4 0l2-3l1-4l-2 2l-3 0l-3 4l5 1l-3 1l0 3l-3 2l-1-2l4 0l4 1l3 3l0 5l-3-3l-2 3l1 3l4 2l-4 3l-4-3l4-2l-4-1l1-3l0-3l2-2l5 1l3-1l1 5l2 2l4 1l3 0l-3 2l0 4l3-1l3 1l7 1l2-6l6 1l-2-5l-4 4l2 5l5 0l-4 5l-5-4l-2 4l-2 6l5-1l4-5l-7 0l-5-5l-1 3l-2-4l-3-3l0-2l1-3l2-2l1-4l-4-2l-2 1l0-2l2 1l1 3l2 3l-4 0l2 2l2 3l2-2l-2-3l4-3l-3-1l2-4l6 4l8 2l-1 4l-6 0l2 4l-7 0l-2 5l-2-3l-1-3M253 103l-6-1l-4-2l1 3l3 2l0-3l1-3l2-3l1 2l3-1l0-2l0-3l2 3l2 3M253 103l-3-3l-2-1l3-1l0-4l-1 2l-2-1l0 4M256 101l-2-1l-3-2l3-3l-3-1l-3 1l-2-2l4-1l4-3l-2-2l-1-5l-2 4l-3-3l-2 3l-1-7l4-2M256 101l5 0l4-1l3-2l2 0l-3-3l2-2l-4-1l4-1l-1-3l-2 1l3 2l2-2l2-4l1-3l4 0l7-3l-4-1l-3 4l7 2l0-5l11-2l-6 4l-5-2M256 101l4 2l1 3l2 1l3 2l2 3l2 4l3 9l-8-4l5-5l-5-1l3-3l1-3l-3 0l1-3l4-3l-3-3l2-2l2-3l-3-2M322 287l-1 10l-10 2l-7 15l2 5l3 5l7 1l5 1l1-5l5 6l3 3l-2 4l5 1l-3-5l8 0l2 6l-7-1l5-5l10-13l4-12l10-1l7-10l-10 1l-6-10l-5 12l4 8l-11 4l7-12l-13 3l-14-3l-4 11l-13 6l-4-12l-9 6l4 7l11 4l-2 8l-3 8l4 7l4 6l-8-3l4-3l6 2l-2 4l-3 6l5 5l5 1l3-4l4-5l-3-2l-1 7l-5-1l6-6l3-5l0 7l0 5l-4 0l3 5l-6-1l-2-5l-3 4l2 4l-4 5l-3 4l-5 0l-3-2l-6-1l3-2l3 3l4-6l7 4l6 0l4 3l8 3l3 3l4 2l4-4l-8 2l0 6l-1 5l1 5l-2 4l1 5l4-3l-5-2l-3 5l4 0l6 1l-2-4l-3-6l-5 1l3 3l-4 5l1 0l-10 0l-1-7l-2 7l-4-2l-4-3l-1 4l2 1l7 0l3 0l2-1l-3-6l-5 0l3 7M322 287l-9-7l0 9l8 8l9 11l3 12l5 10l-6-5l-2 5M322 287l-9 2l-2 10l-11 3l-5 13l9-1l8 4l-3 6l-5 3l2 4l-5 4l-6-7l0-13l9 12l-9 1l-3 6l9 1l5 1l-1 6l5-3l3-5l5 0l0 6l-5-6l-7-3l0 5l7-2l3-4l2 4l4-1l6 1l5 7l7-5l8 5l11 0l2 5l-5 6l-8-1l-4-4l4-6l2-5l9 5l-6 5l8 0l4 2l5 4l-2 5l2 3l3 1l4-4l3-3l4 3l-3 5l5 2l5 1l-1 7l4 4l-3 5l-6-3l-3-3l-4 4l-4-3l-4 0l-1 4l-4 4l-3 1l-3-1l-4 2l-1 4l3 4l4-1l-2 5l6 2l1 5l2 3l3-2l-5-1l-3 0l2-5l5-5l-1-4l5-4l4 5l-1 3l-1 4l4 2l-3-6l6 0l-5-3l2-6l1-5l1-6l3-2l5-1l-4-3l5-4l-4-5l-3-3l1-4l-5 1l-2-4l-2-4l-3-5l6-3l6-4l-5-7l-4-9l-11 3l-5 9l-9-3l-13 3l7 3l-5 3l2 6l-9-1l0-6M322 287l-2-13l1-5l5 0l-1 5l-4-5l-4 0l-2-5l2-4l3 4l-5 0l-10-7l4-6l-4-5l-6-1l-5-2l0-5l-1-6l5-2l2-4l-3-6l-6 3l-6-3l-6 3l-3 3l-3-4l6 1l4-7l2 4l-1 4l4 4l3-5l5 3l1-6l6 3l-3 3l5 2l4-5l6 1l-1 4l-1 4l-3 2l-3 2l-4-1l-5-5l7-2l-2-5l6 0l4-2l2 3l5-1l4-5l4-1l-1 5l1 4l-1 3l-4-1l-1 3l1 4l-2 3l-3 2l-3 0l-3 2l-7 4l2-6l0-4l5 1l1-5l-4-5l5 1l5-1l-4-3l-6 3l0-4l1-4l3 2l0-4l4-3l6-3l6-4l5 5l4 4l0 7l4-6l-4-1l-4 0l-6 1l4 3l-4 6l-3-1l2 4l2 3l0 4l-6-1l2 3l-4 0l-4-1l1 3l0 3l-3-3l-3-3l-5 3l-4-5l-4 1l-1-6l-2-4l4 0M322 287l5-7l-7-6l-3-5l3-5l1 5l3-3l2 3l2-2l-1-6l-2-3l2-3l0 6l6-3l1-4l2 5l-3-1l-6-3l-1-3l-2-3l3-5l4 4l-4 1l-3 0l-2 3l-1-4l3 1l-3-5l6 0l0 5l-1 3l-4 0l2 3l1 3l-1 5l3-2l3 1l3-4l1 5l-2 5l0 5l0 3l2 4l3-1l3-3l1 3l-1 3l3 2l6-1l4 2l4-10l4-6l-4-3l-3 2l-3 0l5 2l5-1l1-4l-2-3l-2-4l-2 5l-2 5l2 2l1 5l-6 4l2 6l-11 3l1-4l-4 1l1-3l-3 0l-3-2l0 4l5 1l3 3l6 9l11-2l3 9l7 9l7 5l-2 16l11 0l-1 5l5 4l4 3l1 2l2 5l2 4l5 9l0 3l4 5l0 1l-6 0l-7 1l5 6l0 7l-3-2l-5-6l8 1l5 4l4-5l-1-7l5 9l-8 3l-5 3l-7 3l-5 3l-1 2l-6 4l-3 2l-1-4l-2 3l-3 4l0 4l-3-2l-4 0l1 5l1 0l10 0l-5-3l4-1l-4-3l-1-6l-4 5l-2 3l-1-3l-4-2l6-3l-1-4l-3-3l1-3l-5 4l1-6l-3-2l-10-1l0-8l-2-8l5-5l-4-9l-6 0l-4-5l-1-9l-8-4l3-3l-1-7l-6-1l-5 4l0-5l2-6l3 7l1 7l-4 7l5 4l-7 2l4 3l-7 1l-4-2l-8 3l-5-2l5-4l0 6l5 3l8 1l-1-5l-7 4l-5 5l-4 2l-4-3l-2 2l-4 2l-5 1l-3 5l-2-5l-4 1l6 4l-4 1l-2-5l-4 3l3 2l1-5l-4-1l0 4l-2 3l-4 0l2 5l-5 1l-3 5l-1 5l-4 2l-2 8l4-4l-2-4l6 1l-2-3l5-3l4-1l-3-3l-2-3l-1-4l4-2l-2-5l-2-5l-2-3l-4 0l-2 6l5-2l-3-4l-4-2l-7 0l0 6l-6 0l-1-6l-5-7l-9 3l-3 1l2-9l-1-2l4-2l6 3l1-6l5-9l-8-12l-6 4l2 6l4-10l-2-8l8-3l-6 11l13-1l9 10l-2 9l-12-6l-12-2l-3 5l0 2l3 7l-3 4l1 8l-2 6l-1-5M322 287l10 0l-11 10M322 287l8-4l4-3l1-5l5 1l-1-3l-1-3l-6 3l3 2l-3 1l-3 0l3-3l-4 0l-2-4M397 364l1-7l-2 1l-5 7l5 5l-6 2l-2 4l-6-1l-5 0l-3 1l2-4l1 3l1 4l3 2l-5 1l2-3l-6 2l-2-5l-5 1l4 3l-5 0l1 4l-1 4l-2-3l-4 3l-4 2l-5 0l0 7l-4 6l-6-3l10-3l5 3l1 3l4 0l-4 2l5 3l3-3M397 364l6 2M397 364l-6 1M397 364l6 5l4 6l1 6l4 2M397 364l-1 6l-2 6l-6 0l-3-3l1-4l0-5l1-4l-6 2l-4 0l0-5l-2-3l3-4l-4 0l-4 2l5 2l5 0l0 4l4-1l4-2l8-2l-8-2l6-3l-5-9l0 4l-4 5l-7 2l2-7l9 0l-1 8l0 4l-1 5l9-2l0-5M397 364l-1-6l-8-3l-3-2l0-5l3 3l-3 2l-3-2l-2 3M386 390l1 5l-4 0l-3 6l4 6l-4 5l7 1l-3-2l0-4l3 6l-1-12l0-4l-3-2l0-5l-5 2l-5 1l4 2l-4 2l3 2M386 390l-3 5M386 390l6 2l4-5l3-5l2-7l2-6l-7 1l5 5l7 6l-9 1M386 390l-3 0l-3-4l-4-4l-4-1l2-5l-3-4l-1 4l-3-2l-4 0l2 3l-5 0l3-3l-4-1l-1-5l1-3l-2-6l5 2l-3 4l4 0l-1-4l2-3l-7 1l-2 6l-7-1l2 4l-7 1l-4-6l-1-8l-7 1l1 8l-5-1l4-7l3-6l-6 1l-5 0M386 390l0-4l5-5l-3-5l-3 2l-4 3l2 3l-3 2l-6 1l-5 1l-5 0l-2 2l0-5l-1-5l4 4l4 0l0-4l3 1l0 3l-3 4l0 3l-4 0l-4 2M392 392l-6-6l-3 4l0-6l2-6l1 8l-3-2M368 365l2-5l-4 1l-4 0M368 365l2 3l2-3l-2-5l3-3l4 0l3 1l1 4l-1 5l-4 5l6-1l0 4M368 365l-2-4l-2-3l4-1l-2 4l-3 4l5 0l4 0l1-4l4 1l0 3l-1 7l-5 0l2-4l3 4M368 365l-2 6l-3 3l-1-5l-3-4l-4 0l3 3l-2 3l-1-6l-5 3l0 6l-5 3l5 2l-5 6l4 5l6-4l-2-4l-3-3l4-5l5-1l1 4l-4 1l-6 1l0-5l-7-5l-5 6l7 2l-7 6l7 2l8-3l6 2l-1 4l4 2l3 1l-1-3l5-4l0 4l-4 3l5 4l-6 1l-5 2l-2-4l-3 1l-5 2l0 5l6 1l0 2l1 4l4-1l4 0l-2 4l3 1l-9 1l10-1l2-2l-3 2M368 365l-6 4l-4-1M370 368l1 4l-4 2l-2 3l-1 3l-4-3l1 3l-2 4l-3-6l-3 4M370 368l3 0l4-3l4-3M370 368l-4 3l5 1M324 263l-4 1l4 2l0-3l4 4l4 1l5-1l3 0l-2 3l-6-2l-2-6l4 1l3 4l1 3l-3 5l4-2l2-3l-1 6l4-1l-3 4l6 0l2 4l2-4l-4 0l1-3l-1-3l-3-2l-4 5M324 263l-3-2l4-3l-3-1l-1 4l-4-1l-1-4l-7-5l-9 0l-1-6l-3 4l-2-6l-6-2l6-3l5-2l-6-4l-5-4l4 0l6 2l8 2l-1-4l4-1l1 7l2 3l0 5l-5-2l-3 2l-5 3l0-5l-5-2l-6-3l0-7l-7-1l-2-4l-1-6l3-10l-12 6l0 5l-5 5l3 8l5 4l-5 3l-5 4l-4 4l-6-1l-5 3l-5 8l5 3l0-11l3-8l2 5l3 8l3-7l5 3l-1-7l-5-2l1 6M324 146l4-4l-6-4l-3 6l-4-3l-4-5l4-4l5-1l3-4l-2-5l-5-1l-5-2l-4-3l6-2l-2 5l-4 3l0-6l0-5l6 3l4-4l6-1l5-6l-4-4l-4 6l8-2l6-2l6-1l3 4l-1 7l5 1l1-6l-5-2l4-7l3 4l-7 3l-6 1l3-5l7-3l-8-3l1 6M324 146l-5-2l-3 3l-1-6l7-3l2 8l2 5l7 3l-4 5l-2 4l-5 1l3 4l6 3l4-3l0-5l4-1l3-5l-2-7l1-7l4-5l-8 2l4 3l2 4l-3 3l-7 4l5 1l4 2l5 0l7-2l-4-4l-3 6l2 7l8 0l1 7l6 0l6 1l6-7l-7-2l-5-3l-7 4l-5-4l2-5l6-4l0-10l-4 7l-2 7l6 1l-3 8l-4 4l-4-4l-5 0l-2-7l3-5l5-1l6-3l4 3l6-5l5 5l4-5l2 8l-6-3l5 8l0 6l7 6l0 6l-5 3l5 8l8 3l2-4l0-5l0-8l-5 1l-5 2l-6 0l1 3l5 3l0-6l-8-3l1-9l5-3l5 0l8-3l5-8l7 3l-2-5l2 2l-6-9l4 7l-5 2l1-9l-1-1l-4-1l-3-7l1-1l-6-4l-6 0l-5-3l-4-7l-2-5l-4-5l-8 2l-1-6l9 4l-8-6l-8-1l7 3l1-2M324 146l-4 2l-1-4M324 146l8 4l-4-8l6 3l7-2l6 0l-2-5l-6-3l-2 5l-3 5l6 5l-2 5l1 7l5 2l3-7l5 3l-3 4l-2 3l-1 1l-6 6l-5 4l-3 4l-2 7l9 0l4-2l0-5l1 0l-5-3l-4-1l0-5l-4-2l0-5l4-3l6 7l-6-2l0 5l5 1l1-4l-2-8l-6-3l2 4M320 148l1 5l-5-6l-3 6l8 0l5-2l-6-3l-4-1l-5 0l4-6l-5-1l1-4l-8 3l4 4l3-3l-7-1l-6 3l-4 4l-6-3l-9 10l-6 8l-8-6l14-2l2-16l-13-5l-8 4l-6-5l-1 9l7-4l1 8l4 11l5-11l-10-8l-1-12l-5 7l-12 3l-2-9l-8 11l-8 3l-13-3l-5 13l-1 11l-9 3l-7-5l-3 15l1 8l-10 10l-1-13l-4 7l-12-2l4 6l-5 3l6 2l-7 2l-2 2l-5 5l-2 1l-2 4l-2 5M213 213l-6 6l-9 0l0 1l9-1l9 1l-3-7l-8-11l-5 9l7 8l7 4l2-3l3-1l-6-6l9-10l1-2l1-11l-3-8l-10-5l-2 9l12-4l3-8l-13 3l-13-1l11 10l8 3l4-7l9 3l-6 5l4 0l-5 11l-6-12l7 1M213 213l-13-2l-2 8l-13 0l-3-3l-7-10l7 0l-8-7l-3 4l4 3l-7 0l-6 1l4 4l-8-1l0-4l-8 2l2-6l6 4l2-4l6 0l5 1l-3 3l-2-4l2-4l6 1M213 213l2-12l-10 1l3-8l1-8l-10 2l-13-7l-1 9l-3 16l0 10l-11-3l-3-7l-2 5l-1 6l-5-2l-2-5l-4 6l0-6M222 203l-7-2l8 0M230 336l-3-6l-7 0M230 336l-7 3l4-9l-4-5M230 336l4 5l-5 1l1 6l6 2l6 5l-3-9l-3 4l-1 5l7 6l-1 5l-2 7l3 6l-6 5l-4-6l10 1l-1 7l-5-2l-6-1l2-5l7-5l7 3l-4 3l5 4l-6 3l7 3l4-1l0-6l4 4M230 336l8-1l9-2l8-1l4 5l-9 2l-3-6l-2 8l5-2l5-7l-6-8l-14 3l-8 3l-7 2l-1 9M234 341l-4 7l-3 9l-6-6l3-4l5-5M234 341l5 5l5 0l5 9l5-5l-1 7l-6 4l4 2l-6 7l-6 3l-5-2l-2 7l-4-9l-6 1l1-8l-6 5l5 3l6-6l8-3l-2 10l-6-2l0-5l-5-2l-4-5l8 0l9 4l5 5l4 4l5 3l5-3l4 2l6 3l-3 4l7 1l3 2l3 4l-4 3l-2 5l-4 1l-2-2l-4 0l-5-1l2 4l-6 0l5 6l1-6l3-3l3 3l3-1l3-4l3-2l3 2l4-4l-3-1l1-4l2 5l4 2l4 2l3-5l2 3l-2 2l5 2l-3-4l-5 2l3 0l-3 7l4 0l1 3l-3 5l-1-4l4-1l2 4l-5 1l3 3l2-4l5-2l-7-2l4-3l-1-5l-4 5l-1-7l-5 4l2 3l1 4l3-4l5 0l3-2l-4-3l5-4l3-4l5-3l6 0l2-7l4-4l5-2l3 5l-4 3l7 0l-4 7l3 4l-7 1l4-5l4-1l4-4l4 4l-8 0l7 6l-8-1l-4 6l-3-5l-3-4l-6-3l1 6l0 7l4-4l4-2l-1 7l-7-1M234 341l2 9M234 341l4-6l-3-8l5-13l8-5l2-12l9-3l9 1l10-7l13-1l-4-8l-9 9l-1 9l14 11l-9 6l-7 12l-5 6l2 9l5 3l7 1l3 9l2 3l-2 5l-4-3l-1 4l-5 0l1-5l-2-3l-4 5l5 3M234 341l11 0l-6 5M307 90l0-4l-7-4l-4-5l-2 7l6-2l7-1l0 5l-5 6l-2-10l-3 5l5 5l6 4l7 0l5 1l4 2l6-1l-2 5l0 6l-5 0l-3-4l-3 5l1 6l-5-2l-1-5l8-4l-3-3l-2-6l-1-5l5-6l4 5l12 1l-8 2l-3 6l-7 3l3-5l7-4l3 5l4 3l3 4l5 6l-5 0l-1 6l-8 1l-7 4l7 2l-5 3l3 5l-6-1l2 7l8-2l-2 6M307 90l1 6l-2 5l-6-4l8-1l6-5l-7-1l-5 2l-2 5l-4-1l-5 0l-3-7l-3-5l5-3l4 3l-2 4l-2-7l-2 8l4-1l-1 8l-7 4l-4 0l-4 1l-4-1l-4 0l-3 0M307 90l8-4l-8 0M302 92l-6 4l-4-8l5-1l-3-3M267 238l0-7l4 0l1 4l5-1l3 4l-2 5l5 2l-2 5l1 12l-8 4l-9 5l-10-8l0-10l-8-5M267 238l6 1l5 4l6-2l4 0l-2 3l-3 1l4 3l-6 2l6 3l-5 9l-8-10l0 14l7 5l1-9l10 5l-5 12l-6-8l11-4l8-16l5-5l6 1l-2 4l6 0l1 5l-11 1l12 3l2-4l3-4l-4 0l3-4l-7 0l1 3l-4-4l1-5l3 2l0-4l2-3l-5 0l4-4l-3-1l4-2l-3-2M267 238l-4-2l-1 6l6 4l-5 3l-8 4l-8 6l-8 6l7 5l-10 5l3-10M267 238l2 3l-7 1M273 239l-1-4l3-5l2 4l-4 5l7-1l4 3l-1 4l-5 2l0-4l-4 1l-2 4l-4 2l-5-1l4 9l7 8l-3 14l7 8l-14-3l-5 9l-2 12l6 10l9-8l-4-13l9 2l5 17l13 1l-11 13l-9-2l-3-9l-9-1l-9-1l-5 9l12 5l-2 8l7 1l6 3l4-3l1 6l-3 4l-2-7l-3 5l-5-3l-5-6l-5 6l4 4l4 6l-5 4l5 0l-3 3l6 2l0-6l4 7l-4-1l-4 3l-2 4l4 1l2-3l4 0M273 239l1 5l-6 2l4 2l2 4l7-2l-3-3l-6 1M273 239l-4 2l-1 5l0 4l6 2l4-5l-4-3l-5-3M434 203l5 2l5 1l0-5l-2-3l-3-5l-3 2l-2-5l5 3l2-5l-7 2l-5 0l-4 4l-2-5l-8 2l-3 6l-7-1l-1 4l1 6l6-3l1 4l2 6l1 3l-3 4l-4 3l0-5l0-5l-2 10l0 2l2-2l-2 0l2-5l4 2l1 6l-5-3l1 3l4 0l4 0l-2-4l0-6l2-1l6 0l3-2l-3-2l0 4l-4-3l4-1l-3-3l-3 2l-3 3l-4 2l-2-2l0-2l2 0l-2 2M434 203l-4 3l4 5l1 3l5-2l-6-1l-5-1l-3 3l5 0l3-2l1-3l5 4l3 4l4 0l4 3l3 0l5 6l0 3l-4 3l-4-3l1-4l-1-5l-5 1l1-4l-1-3l-6-1l-1 3l-4-1l-4-1l-2-3l1-4l0-4l4 1l-2-5l-4 0l-3-4l5 0l6 1l6 3l-5 2l-1-5l-4 3l-2 4l-4 1l4 3l5 2l4-3l5-4l6 0l-1 4l-5 1l-2 3l-2 3M434 203l1 5l7 1l-3-4l-2-5l7 1l5 4l3 5l2-1l-2-3l-3-1l3-3l0 4l0 4l0 3l2 6l0 3l-3-3l1-5l2 5M434 203l3-3l-5-2l-2-4l4-4l-1-6l4-3l-4-2l-4-5l-5 3l-1-5l6 2M369 313l-4 8l-5-7l2-10l12-2l-5-8l2-1l3 9l0 3l-5 8l-9 1l-12 3l-15 3l-1 5l-5 2l0-6l-5 0l6-4l5 3l8-11l7 8l3 10l14-6l9 13l6-7l1-7l-5-2l1-7l-8 2M377 311l-3-6l-12-1M271 92l3-4l-1-3l-2-4l3 1l2 3l-3 0l-3 0l-2 3l-1-2l-4 1l3 2l-3 1l-2-2l2-1l-4-2l5-1l-4-3l0-6l11-8l-14-3l-1-6l10 3l-9 3l3 11l3 4l-3 2l-4-2l-5-4l2 6l-2 1l4 1l2 2l1-2M271 92l0-3l-3-1M273 71l3 4l-2 3l4 4l3 7l4-5M273 71l-2-4l-5-6l0-3M273 71l-2 6l5-2l4 3l-2 4l-2 3l1 5l4-1l7 0l-5 5l-3 6l-1 4l5 6l4-1l1 5l5 0l-1-5l4-3l4-3l5-2l2 5l-1 5l-5 2l5 3l-5 2l-3 5l7 4l1-5l-8 1l-7 3l-4 3l-1-4l-2-6l-3-5l-6-2l-3 0l-3 4l5 3l-2 6l-6 7l-2-11l0-6l-1-3l2-3M273 71l-13 4l-6-3l-10-4l-1 11l1 2l2 2l1 4l2-1l0 4l1 2l-2 3l-3 2l-1-3l2-1M271 77l-11-2l-4 4l-1 4l-2-2l-4-1l2 2l-2 1l-5-2l5-1l0 3l-3 0M271 77l-8 2l3 3l5-1l-3 1l-1 4l-1-4l-2 2l-1-5M271 77l-5 5l2 0l2 3l1-4l0-4l3 1l0 4M332 227l-4-1l6-3l4 0l2 2l3 6l2-2l-1-4l-1 6l2 3l4 4l0 3l-5 0l1 6l-5-2l4-4l1-4l4 4l2 4l-1 5l-5-3l2 3l-5 3l3-6l-6 1l1-3l-2-3l6-1l3 4l4 0l1-3l4 0l-4-4l-3 3l3 1l0-4l-3 0l-4-1l0-3l5 1l-1 3M332 227l2-4l-2-3l-5 2l-3-4l-7-4l-4-5l-11-5l-10 5l-11-2l2 9l-5 1l-5 5l-4-4l0 9l-5-4l-3 3l-6 1l1 5l-6 8l3-14l-1-7l4-5l-3-13l9-7l-13-1l4 8l-4 2l0-10l1-12l-12-3l1-10l-5-8l-9 4l1-9l-7 3l6 6l-1 10l7-6l8 0l-3 8l2 2l6 11l5 4l13-10l0 11l12 7l-5 12l-9 4l4 6l-7-3l-5-1l-1 0l5-5l-7-11l-5-14l6-8l-3-13l-9 10M332 227l5-2l1-2l-4-7l0-4l3-6l2-7l-3-6l3-4l3 5l-6-1l-6 0l2 5l4-5l-6-4l0 4l-5 2l-5 1l0 5l4 4l2-5l-6-4l-6 2l6 3l-3 4l-4 4l0 8l-3 2l-2-4l-2 6l3 2M332 227l4 2l-2 3l3 4l5-1l1-4l-5 1l-1 4l-5-2l-3 2l-4 2l0 4l2 2l5-2l-1 6l3 0l-2-6l-4-3l1-3l-4-4l-2 3l-3-2l1 5l0 3l-3-1M332 227l-1 3l-3-4M334 223l0-7l-2 4M334 223l3 2l3 0l4 0l4 2l2-3l-3-10l-5 3l3-5l-2-5l-6-1l-8 1l-5-2l-1 6l1 7l2-4l2 3M398 192l-5-5l-5 0l5-5l5-2l5 3l2-4l0-5l5-3l-4-4l-1 7l-4 1l4 4l3 2l-5 2l4 2l7-2l2-6l2 6l-4 0l-2 6l3 2l4 4l-7 2l-5-6l-2 5l-5 2l4 2l5 0l3-3l0-8l-5 2l0-6l5 4l4-2l-1 4M398 192l-7 4l5 3l2-7l3 1l4 3l4 4l-4 6l2 4l5-3l5 3l-2-6l-3 3l-2 4l4 2l3 2l0-5l2 2l1-4l-5-4l-4-1l1-6l4 2l-1 5l6 0l6 4l-1 5l1 4l-4-2l-1 3l0 4l-3-2l-2 5l5-3l3 0l6 3l3-1l3 6l-5-3l6 8l2 4l0 1l3 1l-1-4l-2 2l7 10l-7-9l2-3l-1-4l-4-3l1 5l4 2l3 2l3-2l1 3l2-3l-3 0l-4-2l-2 2M398 192l-7-1l0 5l6 6l3-4l-4 1l1 3l3 2l4-4M398 192l2 6l0 6l5 2M398 192l4-4l1-5l-6 1l-4-2l-4-3l-6-2M398 192l-1-8l-4 3M310 339l8 1l-2 6l-3 4l-2-6l7-4l7-3l-2 7l5 7l-5 5l-1 5l-3 6l-3-7l-3 3l2 5l0 7l8 2l-4-6l0-4l5 2l3-6l-4-7l8 0l-3-5l1-6l4-4l6 6l-1 8l-3 5l-4-4M310 339l1 5l5 2M310 339l-4-3M275 106l-1 2l-1 4l-2-3l-2 0l2-4l-4 1l2 3l1 2l0 5l5-1l5 5l-5-1l3 6l-5 0l3 6l4 6l-11 7l9 9l6 7l13 0l7-2l6-1l3 4l5 0l4 3l1-4l6-1l2 7l4 2M275 106l-4-1M275 106l1-5l3 3l5-4l-1-6l-2-5l-5-4l-2 3l3 2l1 5l-2 6M275 106l4-2M320 196l-6-3l-1-8l-4-7l9-3l4 0l-5 5l-8-2l5-6l4 3l0-6l4-5M320 196l1-5l9-2l-3-3l5-4l-5-1l0 5l-5-5l0-6l3-7l2-5l4 3l-6 2l-7 1l4 6l5 0l5 7l4 3l3 4M321 191l-4-5l-4-1l-6 1l2-8l3-13l-8-7l-9 11l14 9l-9 1l-12 1l-10 3l-11-10l5-12l12-1l3 9l1 11l-2 15l-5 12l-7-6l12-6l-8-12l-16 0l5-10l-4-9l9-3l4 8l12 11l7-11l2-9l-10 9l8 0l17-4l1-4l5-5l3-3l2 7l4 3M321 191l-7 2l3-7l5-5l5 0l0-6l4-4M321 191l6-5l-10 0l0-6l-4 5M321 191l4 4l5-6l6-4l7 2l1-5l-1-5l-3-3l-1 5l4 3l-7 3l-1-7l-8-3l-5 6l-5-1l1-5M270 85l-3 1l-3-2l-1 3l0 3l2 2l2 3l1 3l0 2l-1 2l-3 2l-3-3l-1 2l4 1l3 2l0-4M270 85l1 4l3-1l1 6l-3 1l-5 0l-3 0l4 3M292 334l-4 5l-4 6l9-1l3 5l-3 5l0 4l-4-1l2 3l6 1l-2 6l7-3l-1-5l-3-5l-2-5l-6 0l-6-4l-2-5l-5 4l4 8l-5 3l-7 0l-4 1l-3 1l3 5l0 5l4-4l3-3l1 4M292 334l-6-1l-4 7l-6-2l-6-6l-4 6l-2 5l8-2M292 334l3 4l10 4M292 334l-8-6l11 0M301 335l-6 3l6 7l-8-1l-5-5l-2-6l-6 1l-5-8l-14 3l2-13M317 308l-6-9l-7-5l-4 8l-11-3l-11-11M317 308l13 0l5-8l6 9l-11-1l-2 9l-1 4l6-1M317 308l4 8l1 5l-4-2l3-3l9-8M317 308l-5 10l-6 1M304 397l-6-1l1-7l-5-5l8 1l-5-3l-3 2l-5 2l-4-1l-7 2l4-5l-4-6l-6 1l0 5l4 0l2-6l5 1l-3-4l-1-5l5 2l-2-7l-4-5l5 1l2-2l2 5l1 4l-6-3M304 397l-6 2l5 2l5-1l-3 2M304 397l5-2l-1 5M304 397l0-7l-2-5l2-6l3 3l1-4l7-3l4 5l-6 2l-5-4l-2-6l-4-8l-5-3l1-7l-5 4M216 372l1-5l0-5l6 0l4-5l8-2l7 0l2-9l10 4l4-3l6-4l2 8l-8-4M216 372l6-2l3 6l-8 7l-3 8l1 6l3 5l6 0l4 7l4-7l-8 0l-1-5l-8 0l2-7l0-7l6 0l-1 6l-5-6l2-9l3-4M216 372l3 2l6 2l7 2M216 372l1-10l2-5M345 237l-4 1l3 3M345 237l-3-2l3-1l2-3l-4 0l-4-2l1-4l2-2l-4 0M341 238l-4-2l1 6l3-4l1-3l-4-3l-4 0l-2 2l-3-2l-4 0l-3-1l-3-4l4 1l2-3l2-3l-5 3l-2-2l-1 4l-2 3l5 1l-2 2l-3 4l-1-4l4 0l-3-3l-1 3M282 340l6-1l7-1l-2 6l-3 5l3 5l-4 3l-4 0l2-3l6 0l5 0l8 0l-1 6l6-1l-3 5l1 4l2 6l4 1M282 340l-2-6l-10-2l-9-3l-6 3M297 87l-1 9l-1 5l6 2l-1-6l-5 4l-5-1M323 377l3 7l-7-4l4-3M330 377l1-8l-4 5M406 154l0-3M406 154l7 11l10 7l-8-2l-5 1l1 6l-6 2l-7 1l3-5l-3-2l0-5l3-4l5 3l0-5l0-8l-6 4l-6 1l-6-2l-2 5l-3-6l5 1l-3-8l-4-8l-6 5l-4-5l-1-6l-1-6l7-4l-6-1l2-6l1-5l-7-5l-4 7l8-2l3 0l6 7l-7-2l-5 0l3-5M254 92l4-2l3-2l0 5l0 3M258 90l-1-2l0-3l2 0M258 90l-4-1M258 90l0 3l-2 2l-2 0M258 90l3 3l2-3M318 252l-2 4l3 0l5-1l2-3l4 1l3 5M318 252l-4-4l-3-1l4-3l-1 4l4-5l3 1l4-2l3-3l-1 5M318 252l-3-1M318 252l1 4l3 1l2-2l3 0l3-2l1-5l3 4l0 2l3 1l4 3l5 5l-6 0l1-5l-5 1l-2 4l6 0l-3 4M304 390l3-8l3 5l3-5M304 390l-5-1l-4-1l-1-4l-3 5l4-1l-1 5M304 390l-6 6l0 3l-3-1l3 5l0-4M304 390l5 5l5-7l5-3l7-1M304 390l6-3l-1 8M269 403l3-2l-3-3l-4-3l0 6l-3-5l-6 0l2 4l4-4l1-3l5-2l1 3l5-3l1-5l-5-1l1 4M269 403l0-5l0-4l3 2l0 5l3-1l5-1l-3-2l-1-3l-2-3l5-1l-1-3M269 403l-4 1l-5 1l-4 2l-1-5l3-2l2 5l-5-3l-2 4l0 4l-10-8l-4 14l9 2l-5-16l-6-2l-6-4l-7 6l-3 3l7 4l5 5l6 2l6 2l3 0l6-1l-1-7l3-3l-3-1l-4-5l1-5l-2-7l4-7l5-1l5-2l-1 4l-3 6l-4 3M269 403l-4-2l0 3l-1 4l5 4l4-4l7 2l-2 3l-3-2l-2-3l-1-3l0-4l4 2l-3 5l6-2l1-7l2-2l4 1l-2 3l3 1l-2 4l3 0l0 5l3-2l4 2l3 0l-2-3l-5 1M269 403l3 2l-3 3l4 0M269 403l0 5l-4-4l-4-3l1-5M348 341l5 5l3 6l4 3l-3 4l-2-3l1-4l8 0l-3-6l7-6l-9 1l-2-6l3-5l3 7l-4 4M348 341l-6 1l2 5l0 8l4-4l5-5l-9 1l-5 0l-5 3l-5-5l-6-1M348 341l-3-8l5 3l1-9l9-13l-8-9l7-10l6-10l-12 0M371 141l10 0l-4-5l4-8l2-5l4 5l5 5l-2 9l5-2l-2-8M371 141l6-5l-7-1l-5-2l4-4l1-5l-3-6l-5-3l-4-5l-6 4l1 5l6 0l-1-9l-6-2l-5 4l5 2l7 5l3-4l2 7l6 2l-6 3l5 2l5 1l7-2l2 6l-2 7l9 1l-5 7l-2 7l-6-2l-1 5l-7 4l-5 2l-6 6l-5-3l-6-1l-3-3l2 4l-5 2l-6 3l-8 2l-2-7M371 141l-5 5l9 0l4 3l-2 5M371 141l-6-2l5-4l4-5l2-5l7-2l-4-3l-3 5M365 139l-5 2l-3-8l-3 5l6 3l6 5l-1 5l-5 0l0 5l4 4l0 5l-7-1M365 139l-8-6l8 0l-1-6l-7 6l-7 2l-5 3l-2-6l-4 3l-5-2l-4 3l4 9l-2 5l1 4l-7 2l3 3l4 0l0-5M365 139l0-6M365 139l1 7M398 168l-1-5l-3-4l-3 6l-5-3l1 6l-4 3l-8 3l2 3l-6 0l-1-5l-1-9l-1-6l3-6l-6 0l3 6l-4 3M398 168l-4 1l-1 5l5-1l0 7l-5-6l-4 5l-1 8l-5 1l0-5l5 4l3 4l-1 4l1 1M398 168l4 1l3 5l6 3l5 0l-1-7l-4 7l3 6l-6-2l3-4M397 163l4 1l5-2l7 3l2 5l4 3l-3 4l5 3l-3 3l7-1l8-3l0 5l-4 1l5 5l4-5l-1-4l-8-7l-6-2l-4 1l5 4l1 5l4 3l0 5l-6-1l-5-6l-2 4l-2-4M397 163l-6 2l-4 3l1 7l-5-4l-2-9l2-6l-7 3l5 3l6 6l7 1l3-6l3-5l1 6l1 5l4-2l5-1l-1 5M357 133l-7-4l3-10l-7 5l-7-1l-3-6l-5-4l6-2l0-6l-4 2l-5-4M357 133l-1-5l-3-9l-6-1l0-6l-7 4l-4 1l-3 5l-5 2l0-6l3-5l-3-4l5-2l4 4l3 5l2-5l6-5l4 2l5-4M350 129l-4-5l-7 5l0-6l1-7l7 2l5-4l0-6l-2-7l-2 5M350 129l0 6l4 3l-7 5l-4 4l6 0l1 4M350 129l6-1l3-9l5 8l-8 1M350 129l-7 3l3-8l1-6l-8 5l-6-1l-5-4l-3-3l-2-6l-5 7l-7 3l0 8l-5 0l-5 1l-2-5l-3-4l-4 7l-5-1l-9 0l2-5M376 346l-2 4l1 4l-2 3l0 4M376 346l-6 0l0 6l3 5l-5 0l-4-5l0 6l-4-3l-5 1l-7-5l4 8l5 0M376 346l4-3l-1-5l-5-4l-1 7l-5-1l6-6l-7-1l-2-12M374 350l-4-4l3-5l7 2l4-4l-5-1M282 314l-10 3l0-9l10 6l2 14l2 5M277 297l-5 11l-15-2l-9 3l-6-8l-12-6l4-7l4-10l-5 7l1 3l9 3l-13 4l3 9l7 10l2-13l8-4l-7-6l-5-13l-2-3l-3 10M277 297l12 2l2 9M321 244l0 4l-3-5l-3 1M321 244l0-3l4-3l3 1l5-1l4-2l-2 5l-3 1l5 4l3-1M321 241l4 1M321 241l-3 2M327 327l-5 6l3 4l4 8M356 254l2 4l2-4l-3-4l-4-1l-2-4l3 0l2-3l-1-6l-2-7l-2 3l-1 3l2 3l3-2l-5-1l4-3l-3 0l-3-5l-3 2l2 2l3 4M356 254l-4-1l-5 0l3-3l2 3l-4 3l-1-3l-4 3l-2 2l5 2l2-4l-5 0l-6-1l-1 4l4 4l0 4l4 4l4-1l3-2l-2-4l-3-1l0-3l-3-4l-1-3l5 0l0-3l3 0l3-1l-1 4l1 6l-3 0l-2-3M356 254l4 0l0-1l-2 5l-5 1l-2 3l5 1l4-1l-3 4l-1 4l-6 2l1-4l1-3l2 3M356 254l-3-5l1-4l-2-3M356 254l-3 5l3 4l1 3l5-1l-2-12l0 9M356 254l1-4l-3-5l3 0l-1-3l3 0l-2 3l3 8l-3-3l0-5M165 217l6-2l11 1l9-2l-9-8l8-5l-5-11l7 2l-6-11l12-5l4-6l2-10l-6-6l7-5l-4-9l-1 2l-2 12l-7-2l4 11l3-9M165 217l2 3l-7 5l-6-1l-3-5l-5 1l-7-4l-4 1l5 4l6-1l3-7l1-5l-4 0l-3 1l5-5l2 4M171 213l0 2l14 4l6-5l7 5M171 213l-5-2l-6 4l3 6l4-1l4-5M415 170l-4-4l-5-4l-6-4l-1-7l-8-1l3 9M411 166l2-1M435 220l-1 4l-2 3l-1-2l-3-4l-3 1l2-5l1 4l3-3l4-4l1 4l3-3l4 1l3-3l-4-4l5 2l-3-5M435 220l1-2l3 1l4-3l3 4l-3 1l0-5M435 220l3 5l-1 5l3-1l1 4l-3 2M435 220l-4-2l0-5l-4 4l4 1l5 0l3 4l-1 3l-4-1l-3-1l0 2M435 220l-4 3l-3-2M435 220l4 2l3 3l1-4l-4 1l0-3l4 2l6 2l2-4M438 225l4 0l-2 4l3 2l-2 2l3 2l1 4l4 1l4 1l-2 5l4 1l6 1l1-4l-1-5l-2-3l-1-5l-3 0l1-6l-5 3l-1 3l5 0l0 6l-4 0l2 4l2 6l3-3l3-5l1-4l-3 1l-4 1l-2 4l5 3l4 0l4 2l-5 2l2 5l-4-2l-4-4l2 5l2-1l2-3l-3-4l-1-4l4-1l3-2l2 9l-2 4l-1 3l1 1l0-4l-3-2M438 225l2 4l5-1l-3-3l7-2l2 5l-3 1l-2 3l4-1l-2-2l-3-1l1 4l-3-1l1 4l2-3l2 2l0 3M308 215l-6-11l-9-4l-12 7l-7 10l-5-4l-6-8l-1-11l10-5l2 12l-11 4l-10-4M308 215l5-6l-4-13l-7 8l-4-12l-10-12M308 215l5 2l4 3l-2 4M308 215l-5 2l-6 3l-4-3l-2 6l1 5l1 4l-5 3l0 6l3 6l3-4l5-3l4-5l1 7l1 4M308 215l-9-1l3-10M306 221l-3 2l0-6l-4-3l-2 6M306 221l4-2M306 221l-3-4M292 138l1 8l7 0l3-7l5-7l3 4l5 0l-1 5M292 138l-5 5l-7-6l6-2l-3-5l5-1l-2 6l1 8l2 10l8 7l2-8l5 6l2-8l4 7l3-4l5 3l-8 1l2 8l6-4l5-1l-5-4l0 5l0 8l-4 3l-2-7l6 4M292 138l-6-3l5-1l-3-5M292 138l5 4l-1-11l3-8M292 138l-1-4l1-8l4 5l-5 3M292 138l4-7l5-3l7 4l-2-5M216 167l-12-7l6-5l-5-6l11-7l7-3l3-9l-5-10l4-8l6 10l-10-2l-3 1l8 9l5 6l8 6l13-2l8 4l9 0l-2-12l9-1l2-6l7-6l5 1l-1-6M216 167l-5 10l-9-7l-7-7l-3 8l-4-13l-9 3l-4-3M216 167l9-3l6 4l3-8l-8-5l-5-7l2-9l-7-12l-6 9l-9 4M216 167l3-9l2-10l11 2l-9-11M216 167l8 7l7 2l-10 6M216 167l-14 3l-10 1l-6 10l-11-3l-10-5l-4-9M216 167l-6-12l9 3M267 106l-4 1l-3 4l-3-2l1 3l-4 4l-4 5l8 3l7-3l-6-4l-5-1l4 8l9 8M252 87l-2 5M252 87l-3-1l0-3M252 87l-3 3l-2-3l-3 3l0 4l4 1M252 87l5-2M275 400l2-3l5-4l4-2l-2 4l-2-2l0-4l-3 1l-3 4l6-1l-3-3M275 400l1 3l4-4l4 2l-5 5l1 4l2 3l-4 0l-1 1l-8-2l-2 3l10-1l5-1l5-1l11-1M275 400l-3-4l4-2M449 240l0 3l2 3l-3 2l1-5l-4-4l-2 2l3 4l2 3l4 0l3-1M453 241l4-1l2-4M453 241l-4 2l-6-2l4 8l1-1M159 179l12 6M159 179l6-6l2-11l6 6l12 5l-6-12l-6 7l2 10l10-5l7-2l6 5l1 12l-7 4l-2 9l10 10l-3-13l11-4l9-5l-2 12l-7-7l-9-6l-2 10l8 4M250 121l-3 5l6 5M258 124l-11 2l-8-1l-8-3l-5 8l-10-3l-7 6l1 3l6 6l5 6l-11 7l6-13M258 124l1-7l-1-5l-3-1l2-2l0-5l3-1M239 416l-4 4M239 416l-2-8l-9 1M245 418l9-1l2 0l-11 1M263 107l1-3M263 107l1 5l4 0l2-1l1-2M270 385l2-3l3-3l3-3l-1-3l2-5M270 385l-5-3l4-2l3-3l-3-2l3-6l3 0l2 4l3 0l-2 3l-5-3l-1 4l3 2l1 3l6 0l1-5l5-2l3 1l1-7l-5 2l4 5l3 3l0 5l-3-3l-2 5l-1-4l-3 3l1 6M270 385l-2 6l-3-2l-2 4l-5-4l1 4M270 385l-1-5l0-5l-4 0l4 5M270 385l-5 4l-7 0l6-3l1-4M270 385l-6 1l-3-3l-4-2l-4-3l7-2l-6-2l1-4l4-1l0 3l-5 2l-4-1l-4 3l6 6l-5 1l-1-7l-1-6l9-4l-3-3M278 95l2 5M278 95l5-1M342 342l-3 5l5 8l-5 8l9 1l4-5l-8-4M197 198l-5-6M197 198l-7 3l1 13l9-3M243 402l-6 6l0-8l-5 2l-1-6l-8 1l-5 5l3 3M243 402l2-6l5 0M243 402l-4-6l-2 4M243 402l6-1l6 1M237 408l-5-6M237 408l-4 6M386 401l-2 6l-6 0l2-6l6 0M255 237l-5 3l2 0l5 0l-5 5l0-5l3-3l1-5l-3-6l2 1l2-7l-4 6M255 237l2 3l6-4l-1-5l5 0l-4 5l-3-2l2-3l-1-5l6 5l2-4l7-1l5 1l3-3l-5-1M255 237l5-3l-4-2l6-1M260 234l-3 6M118 253l-4 1l-4 5l4-1l0 4l5 1l3 1l4-2l2-2l-2-5l-4-2l-3 3l-5-2l3-5l-4 2l1 3l0 4l3 1l-3 3l0 3l-4-6M118 253l-1-4l-3-2l2-3l3-6l-1 3l-2 3l1 5l2-4l2 5l1 3l1 3M118 253l4 0l4-2l-5-1l1-3l2-3l2 4l4-2l2 3l3 2l3 3l0 3l-2 3l-5-2l1 5l4-3l-2-6l1-3l-1-4l-2 2l-2 6l5-4l5 0l5-1M261 226l-5 6M261 226l-4-6l-1-6l4 3l3-12l-7 9M332 150l8 0l5 2l-2-5M332 150l-6 1l0 5l-5-3M295 374l3-4M295 374l-3-5l-4-3l-1 5l1 4l-4-5l-1 7l5 5l3-6l0 5l3-2l4-1l6 1l2-7l5 2l4-6l4-1l-6-4l-5 1l-6 0l3-4l-4-1M295 374l3 4l-1 4l-3-3l1-5l-4 2M295 374l6-2l-3 6M358 171l4 4l8-3l5 2l-4 3l-9-2l2-4l0-6l6 7M246 270l-8 8l11 4l10 12M246 270l1-11l8 4l-9 7l9 3l10-2l-1 14l4 10l-11 11l-7-9l-1-15l-6 9l-1 10l-9 3M246 270l3 12l6-9l0-10l12-5l-12-5M347 279l-3-4l3-2l1-3l1-6l-6 2l3-3M347 279l-2 3l-2 2M344 275l4 1l2-4l-3 1M344 275l0-4l-3-1l-1-3l3-1l-3-3M292 126l-2-6l6-1l6-1l0-5l-9-4l-1-4l5 1l5 7l-8 1l2 5M134 247l-4-1l-3-2l-3-4l3-1l3 2l2 3l1-3M134 247l-2-3l-2 2l-1 4l3-1M134 247l6 4l4-5l-4 0l-6 1l3-2l-5-1l-5 0l0-5l-1-3l-4-3l-1 5l-2 0M269 355l3 5l-7-4l-3-3l0 4M269 355l5-7l2 7M269 355l-3-4l-1 5M266 351l3-5l5 2l-8 3l-4 2l-8-3l3 7l-1 4l3-1l-1 5l-3 5l-1-4l-4 7l3 5l-7-2M291 381l-3 1l0-7M288 382l-6 0l3 3l-3 4M339 129l0 6M339 129l-5 4l3 7l-7-4l-4-4l2-8l5 4l6-5M339 129l-6-1l0-6M339 129l4 3l7 3l-3 8l2 4l7 1l-1-5l5-2M319 256l2 5l-1 3M241 110l-8 3l10 2M140 238l5-2l6 3l-6 1l6 1l0-2l-3-6l4-6l-5-3l4-5l3-3l3 5l3-6l-6 1l-5-3l-3-5M140 238l-4 1l1 6l3 1l0 5l2 3l-1 1l-3-1l-4 0l-3 4l-3 2l4 3l-3 1l-3-2M228 364l6 7l7-5l6-5l2-6M228 364l-1-7M444 235l4-1l3 3l2-4l2-2M448 229l1-6l3 1l4 1l3 3l-1 3l4 4l-3-7M445 228l-2 3M445 228l4-5l-3-3M128 260l2-5l-4 0l0-4l-4-4l-3-2l-1-4l3-3l5-2l4-1l0-5l4-2l-1-5l7-2l7 3M261 93l-3 0M261 93l4-1l-1 3l-3-2M299 152l-6-6l-4 7l-11 0M299 152l7-2l7 3l-2-6l-1-7M299 152l1-6l-3-4l4-9l2 6M299 152l-10 1l-5 7l-8 9l-9 4l-12-4l-5 12l12 2l10 6l6-6l-2-14l11 0M452 248l-1-2M452 248l-5 1l-1-4l3-2M249 58l-4 0M249 58l7 0M249 58l-5 10l13-4l-3 8l-7 0l-4 7M249 58l8 6M374 130l3 6l6-2l9-1l-7 6l5 3l1 8l-3 7M253 81l3-2M326 132l-4 6l-6-2l4-5l-4-4l7 0M326 132l8 1l-1-5l-7 4M333 399l6 1l-4 3M333 399l2-5l-6-6M335 394l-5-1M335 394l2-5l8-4l-2 8l6 4M335 394l8-1l6-3l5 5l0-5M335 394l4 6l4-7l-6-4l1-6l0-8l-1-7l6 1M313 280l7-6l5 0l2 6l7 0l-5-4l-1-3l4-5M313 280l-3-10l5-6M313 280l-9-2l-13 9l13 7l9-5l-9-11l-17 1l-16 1l-6-9l2-13l1-8M310 270l7-1M310 270l-9-2l4-11l-5-6l-13 2l0-5l-1-4l-2-3l0-7l-7 0l3-3l-4-5l-1 4l-4 1l-2-4l4-5l1-5l-5 1l-5 1l-4-2l-3 3M310 270l10 4M310 270l-5-13l-13 10l9 1l3 10l0 16l-15 5l2-12M310 270l-6 8l-12-11l-5-14l9-4l4 2M122 264l2 2l5-2l6 0l1-4M325 115l-4 7l-3-6l-2 5l-5 6l-4-5l-5-4l-8-4l-4 6l-3 5l-4 5l-3 7M325 115l3-6M325 115l6-2l2-6l1-6l-1-8l2-2l4 3l-5 7M325 115l-7 1M264 343l-10 0l-4-4M121 238l3 2l-3 2l3 2M121 238l0 4l-3-1M263 164l1-9l-9-1l5-10M263 164l-12-3l4-7l-3-14l-11-6l-2 8l-7 8l-6 5M263 164l-8-10l-13 4l-3 10l8 0l4-7l-9-3l-8 2l-2-10l-1-14l0-14l2-9l6 12M263 164l-8 5l-4-8M355 365l-3-6l3-3M350 368l4 6l-4 0M350 368l6 3l-2 3l2 4l5 2l3 0M421 204l-1 4l7 0l-4 3M421 204l5-1l-3-5l2-4l-6 1l4-6l2-7l-4-2l-2-7M421 204l2-6l-4-3l-3 4l-5 4l-4 7l1 1M421 204l-5-5l7-1l5 0l2 4M439 219l0-4M333 238l-4-2M333 238l-1 4M333 238l-1-4l-1-4l-4-1l-2 3l-2-4l-1-3l2-7l-4 1l-3-5l1-5l5 2l3 3l8-2l6-2l-2 6M333 238l2 3l3 1l-1 4l-3 2l0 4l5-1l-2 4l-3-3l5-4l-5 0M262 183l-7-14l-8-1l-5-10l-10-8l13-2l-6-6M286 195l7 5l-1 9l1 8l-5-2l-3 5M286 195l12-3l-5 8M286 195l-14-6M298 192l2-13l-5-10M298 192l11 4l5-3l0 5l-1 11l5 0l6-4l-7 0l-3-7l-5-2l-2-10l-7-7M298 192l9-6l7 7M408 218l2-3l5 1l2 2l2 2l-4 2l-3-2l-2-5l0-4l-3-1l-7-6M349 264l2-2l-1-3l2-6M349 264l-3-4l5 2l1 3l-3-1M346 260l4-1M251 113l0-3l-3 0l3 3l3 3M374 387l2-5l-4 2l-3 0l3-3M374 387l-2-3M374 387l-1 6l-3 2l0 5l-5 0M256 407l4 2l0-4l4 3l-4 1l4 5l5-2l6-1l5-1l5-4l2 6l8-1l-7 0l-1 1M256 407l1 5l-3 5M452 202l-2-1l-4-6l-7-2l5-2l-3-3l0-4l-4-3M452 202l-6-7l-4 3M276 131l7-1l-5-5M326 156l-3 4M338 375l-7-6l1-5l5 4l-6 1l-7 0l-2-8l5 2l4 6M408 181l-1 4l-5 3l-5-4l1-4M278 217l-4 0M114 265l1 0M373 397l-3-2M373 397l1 5l3 1l-2 6l1 4l-5-3l-3 1l0-3M373 397l-3 3l4 2l1 7l3-2l2 5l-4 1l-8-2l-4-3M373 397l0-4l-4-2M291 223l-7 1M291 223l-3-8l-7-8M303 108l-6-2l-2-5l-4-5M303 108l3-7l5 0l4-5M303 108l4 3l5-2l5 1M303 108l-1 5M303 108l5-2l3-5l-3-5M303 108l-2-5M360 156l-8 4M360 156l5-5M360 156l8 1l8 2M398 173l-4-4l-3-4M398 173l4-4l-1 6M394 169l-6 6l1 4l-6 4M431 218l0 5M282 114l-7 1l0 4M275 115l1-3M275 115l-2-3l-3-1M317 220l0-6M317 220l3 3l0-4l-3 1l-4 1M334 216l-8-2l3-7l3-4l0-5l7 1l4-5l-1 0l1-7l0 7l-1 8l-3-3l-7 4l5 3l3 4l2 7l5 2l3 5l2 2l-4 1l5 2l1 3l1 4l4 6M405 234l2 4l-3-2l1-2l4-3l0-5l-3-1l-1 9l2-6l-1-3M405 234l4 0l-2 4l0 3l5 3l-2-4l-3-2M254 350l0-7l-10 3l1-5l-7-6M462 235l-3-10l-3 0l-2-3l-2 2M462 235l2 2l-2 7M277 373l-4 0l-1-4l-5 1l2 5l4-2l2-4M380 367l6 2l-4 2l3 2M380 367l6-3M380 367l2 4l-5 4M380 367l-3-2l-5 0l5-3l3-4M307 143l-1 7l5-3l-4-4l-7 3l6 4M338 155l-5 4l-2 7M349 241l-2 4l-2 2M119 245l-3-1M119 245l2-3l1 5l4 1l1-4M384 411l-4 1l-4 1l2-6l-1-4M288 411l-3-5l-3 7M295 411l1-3l-3-3M355 143l-1-5M355 143l-8 0M355 143l-6 4l-4 5l2 5M249 282l15 3l-9-12M367 374l-1-3l-4-2l1-4M360 408l2 4l-6 2l0-1l4-5l-1-5l-5-3l0-5l5 3l-5 2l-5 2l-4 1M278 358l-6 2M278 358l3-6l3-7M319 380l0 5l-1 6l-4-3l-4-1M337 282l-3 2l-2 3l3 13l7-12l7-5l-4-1l-4-3l-4 0l3 3l5 0M337 282l2 3l-7 2l10 1M337 282l0-3l-2-4M287 354l3-5M287 354l-6-2l-7-4M285 357l-4-5l2 7M332 364l7-1l-2 5M332 364l3-4l4 3M421 180l3-3l9 2l-4 6l-6 4l-7-2M412 244l-6-1l1-2l-3-5M412 244l1-4l3-1l-3-2l0 3l-1 4M132 263l3 1l3-7l-4-3l-4 1l1 3M447 211l5-1M447 211l-1 2l6 1l-5 2M447 211l2-6M447 211l5 2l0 1l-5-3M446 195l-2 6M446 195l-2-4M336 185l3-6l4-2l3-9M337 255l5-2l-3-2l0-3l-2-2l-2-5M409 200l2 3M224 347l-4-4M224 347l6 1M224 347l-1-8M380 343l5 5l-3 3l-4-1M320 97l3-7l4 3l6 0l-3 5M320 97l-6-6l9-1M314 91l1-5l-8-5M245 370l2-9l-5 0M254 366l2-5l2 4l3 0l4 2l2 3l-2 5M254 366l4-1l1 4M130 235l4-2l0-5l4-4l3 3l-1-6l-2 3M130 235l-3 4M312 318l4 7l-5 4l2 5M312 318l6 1M312 318l9-2l7 1M274 391l-2 5l-3 2l-4 3l-4 0l-3-1M243 100l-5 1l5-3l2-1M138 254l2-3l1 4l-3 2M409 234l4 3l3-2l-3-3l3-1l0 4l0 4M409 234l4-2l0 5l-3 3l3 0M409 234l0-3l4 1l0-6l3 5l1-5l0-1l-2-3l-2 4l-4 5l-2-3l2-2M409 234l1 6l-3 1M330 283l4 1M330 283l-3-3l2-4l-4-2l3-1l0-6l-4-1M330 283l2 4M285 406l-6 0l-3-3l-4 2M285 406l-1-5l-2-4l2-2M459 225l-5-3M269 227l6 3l5 1l1-4l3 7l4-6M200 142l-9 10M200 142l5 7M345 333l6-6l6 8l-7 1M348 276l3 3l1-5l5 1l8-1l-3-9M348 276l4-2l4-4M350 272l-2-2l-5-4l1 5M350 272l2 2M264 223l0-4l5-6M438 185l-5-1M438 185l3 3M438 185l3-1l-12-10l4 5M356 371l3 2l-3 5M365 391l-1 5M342 223l2 2l2-2l4 1M342 223l0-6M342 223l5-4l0-5l-2-2l-5-2l3-3l-1-5l-5 4M342 223l4 0l2 4l-1 4l4 1M346 223l1-4M249 401l4 9l4 2l-1 5l8-3l0-6l5 0l0 4M249 401l-4-5l3-7l-7 2l0-5l-8 3l3-5M267 258l7-6M265 92l1-3l1-3M448 234l2-3l3 2l2 4l3-6M448 234l5-1M265 115l-3 0l3 6M372 365l1 3M298 403l-2 5M248 389l-1-6M265 389l-1-3M253 106l1 4l-3 0l1-2l-3-2l-2-4l-3 1l-4 3l-6-3l-4 2l-2 2l5 6l-3-8M253 106l-1 2l2 2l3-1M334 232l-3-2l-2 2M261 329l-7-14l-6-6M261 329l11-12M261 329l5 9M251 98l-1 2l4 0M364 352l6 0M364 352l-4 3M364 352l1-4l3-8l-1-7l-7-3M365 348l5-2l-2-6l-5-3l-6-2M395 146l0-6M395 146l-5-4M395 146l4-5M395 146l5-4M395 146l-4 4l-6-1l-6 0l2-8l4-2l-2-5l4-6M395 146l4 5M388 351l5-5l-4-7l-4-5l0-5l-5-2M427 217l-5 1l-3 2M284 328l-4 6l-4 4M225 376l-2 7l7 0l-3 10l-4 4l-6-7l5-1l1 8M225 376l3-7M225 376l5 7l-8 6l5 4l4 3l2-7l-6 4M219 374l-4 7l2 2M356 409l0 4l6-1M247 361l-5-6M271 81l3-3l6 0l1 0M284 234l-4 4M284 234l4 1l-4 6M284 234l-4-3M248 418l5-8M277 414l-2-3M295 367l-3-3l-5-2M301 133l-5-2M301 133l0-5M301 133l7-1l7 0l-4-5l-3 5M326 200l-6 1M326 200l4-7M326 200l3 7M326 200l6 3M326 200l-1-5M326 200l6-2M149 213l2 6l6 2l3 4l3-4M257 306l-3 9l-14-1M321 122l-5 5l0-6M365 285l4 9M365 285l-8-10M365 285l0-11l-4-5M365 285l3-2M365 285l6 8M241 134l-10 2M241 134l6-8l-3-6M287 253l4-6l-4 1M252 140l-7 8l10 6M426 203l1 5l2 2M426 203l2-5l2-4l-1-4M282 397l-5 0l-5-1M282 397l0-4M254 343l-9-2M298 354l3-3M240 106l3 2l4-3M240 106l-7 7l1-10l4-2l2 5M379 149l4 7M299 240l0-4M299 240l5 2M233 113l-8-1l-7 9l-2 6M230 185l6-9l-5 0l-1 9l-2 5M236 176l-5-8l0 8M228 107l-3 5M228 107l-10 14M342 194l-3 5M302 364l-1 8l3 7l4-1l3-4M242 158l3-10M386 386l10 1M322 333l-6-3l-5-1l-2-5M362 369l-3 4M422 218l3 4M422 218l-5 0l0-3l2-3M422 218l-5-3M291 247l5 2M291 247l-5-3M139 216l1 5l-6-3l1-1M310 234l-4-2l1 4M417 218l-2 4M204 222l3-3M204 222l10 1M204 222l-6-2M260 111l4 1l-2 3l-2-4M258 112l4 3l-3 2M217 390l-3 1l-1 10l2-4M297 382l7-3M288 366l-4 4l3 1M288 366l4-2l0 5M230 383l3 6l8 2l4 5l-6 0l-8 0M293 217l6-3l-7-5l-4 6l-5 1M427 208l3-2M331 230l5-1l2 3l1-3l-2-4l-1 4l3 0M164 194l4 4l3 5M164 194l-1-5M311 329l-7-2M311 329l-5 2M402 188l5 3l-6 2l-1 5M402 188l-1 5M347 214l5 12l1 3M339 94l-6-1M464 250l3 0l-1-4M463 253l-6-1M253 378l-1 4M253 378l1-4M359 398l0 5M305 360l3 4M292 364l5-3M292 364l-1-4M311 127l5 0l-1 5l1 4M312 109l-4-3M312 109l5-7l-6-1l1 8M330 253l-3-4M330 253l4 1M330 253l4-1M356 263l-4 2M384 339l5 0M241 391l-2 5l-6-7M364 122l-5-3M364 122l0 5M364 122l3-4M322 225l3 0M322 225l-3 2M264 414l3 1M264 414l-4 0l0-5l-3 3l3 2l-4 3M160 225l1 4M455 237l2 3M130 255l-1-5l-3-2l0 3l3-1l-3 5M295 101l-3 4l-4 4M341 270l-3 0M309 227l-3 5l-3 3M325 394l-4 2l-4 5l7 1l-9 0M325 394l-1 8l-3-6l-3-5M247 102l3-2M135 264l6-9l9-6M247 72l-3-4M330 262l-2 5M158 206l-3-8l5 4M327 321l5 4M344 164l-3 6M271 280l10-9M271 280l-7 5M119 263l-2-4l-3-5M317 205l1 4M284 370l-4 3M347 245l3 5M260 405l1-4M244 86l0 4M243 108l1-5M367 333l-4 4M218 402l-5-1M292 228l4-2M339 248l3 5M315 86l4-1M383 413l-1-5l5 5l-4 0l-7 0l-6-2l5 1l0-5l-5 4l-4 2l10 0l-1-1l3-3l-2 4l3-1l4 1M387 413l-3-9l-4 2l-3-4l3-4l1 3l-4 1l-2 5l-7-1l2 5l-4-1l-4-3l-1-6l5-2l3-4l-4-2l-4-2l0-4l-4 3l-4 1l3 3l1-4l4 1l0 4l4-2l6-3l-2 5l6 4l2 3l-6 2l-5-5l-2-2l1-4l1-5l-5-1l-1-6l-5 1l-3-1l-3-5l-3 5l-5 2l-3-5l-5-5l-8-1l7-4l2-8l0-10l-7 3l-7-4l5-4l2 8l-3 3l-4-7l-6-2l-6-3l-5-3l5-3l-3-6l0-6l3-4l0-6l-3-9l9 9l-6 0l-7 5l7 1l6-6l6 0l3 6l-2 5l-2 7l6-3l-4-4l-7-5l-6 0l5 5l8 0l8-3l-4 7l6-1l0 7l6 3l5 1l3 7l4 3l6 1l-2 5l5 2l1 3l-3 1l2-4l4-1l-3 4l4 1l4-4l1-4l4-1l-1-6l0-5l-2-6l-1-5l1-9l-2-9l10-1l0-2l-10 3l-9 8l11 1l8-10l4 7l-12 3l7 5l6 3l-5 6l9-2l-4-4l3-2l-9-1l-8 4l-10-3l-2 7l-7 5l-7 0l8-5l6 0l6-1l7 2l-4 6l-4 5l-2 3l-4 1l2-7l4 3l2 6l5 1l0-4l-7-3M387 413l-1-14l1-4l-1-1l6-1l0-8l7 4l-7 4l-5 2l-4-2l-2-5l1-4l-4-4l-1 5l5-1l5 0l5 1l6 1l1-8l-7 7l-4 4l4 4M255 316l8 6l15 0l-10 7l-5-7l-7 7l-2 8l6 4l7 6l4-6l1 7l-5-1l-10 0l-5 2l2 6l7 3l-2 5l-3 0l5-5l-1-7l-6 4l-4 1l2-7l8 2l7-4l0 5l5-4l4-5l-5-2l-4-4l0 10M255 316l-5-13l0-11l8-9l0-13l4-9l17-5l-3 17l-4 14l-14-4l-13-3l13-10l-6-14l10 5l5-10l12 5l2-6l-6-3l4 9l10-4l8-5l5 6l4 5l5 14l-7 7l-10 0l-7-6l-11 0l-9 6l-9-9l-13-4l-6-1l-2 8l8-7l0 14l5 12l-10-2l-7-5l2-2l5 7l5-10l-9-5l1-2l8 7l-10 3l1-8l-3 10l-1 10l-2 0l2 11l-7 1l4 8l-8 4l1 4l4 10l-2 8l0 10l-6 2l5 3l8 3l8 2l-9 5l-5 2l-4 8l5 3l6 7l1 6l3 8l-4 3l-4-5l-4 8l8-3l2 8l-10-5l9 8l7 3l8-4l0-10l-5-1l5 11l7 4l3-5l3 3l5-1l-2-4l-3 5l6 0l-1-1l1-3l4 2l6 1l4-1l5-2l0-5l-4 0l-5 3l4 4l6-1l-1-1l6 0l-3-6l-3 1l-4 4l4 1l3-6l3-2l5 1l1-5l-3-3l2-3l6-4l5 1l4-4l5-1l4 3l0 6l-5 3l-6-1l-4 5l9 1l1-5l0-5l5 2l4-6l3-3l-5-1l-2 4l4 0l-2-4l-6 1l-1 7l-6 4l-2-6l-4 3l-1-4l-7-1l-6 2l-2 3l-1 5l-5 1l-4-1l-6 3l-5 1l-5-4l-3 1l-1 4l5-1l-4-3l-2-3l5 2l3-3l2 7l-4 0l-1-4l-1-6l4 3l0-3l2-3l-2-3l5-1l5-2l2-3l-1-6l4 4l-3 2l2 3l-4 0l3 5l1-5l1-5l0-3l-4-1l5-5l7 1l2 4l2 7l2-4l2-3l0-7l-1-4l1-3l5 2l-6 1l-6-1l2-3l5 1l-2-4l-4-1l1 4l4 4l5 5l1-6l6 3l2 6l5-3l3-4l4 3l4 5l1 4l2 9l-6-6l3-7l3-8l6-4l4-3l-4-7l0-6l3-4l0-8l-6-2l6-5l0 7l-6 5l-1 4l7-1l5-9l0 10l-8 3l-4-3l-5 4l-3-6l-3-5l-1 6l-5-2l-5 0l0 6l-6 2l1-5l-7-1l-2-6l-8-1l-8-11l11-3l12 2l-4 5l-3 8l7 3l2 4M255 316l-6 14l5 7l-5 3l0-10l-9 5l-6 7l-3 4l-7-5l-4-4l6-4l9-5l-13-5l7-8l3-9l0-11l8-5l0 11l10-9l11 3l11-8l8 3l5 10l4-8l5-13l5 8l5-8l11 5l-4-12l7-10l3-4l6-1l-2-5l-2-4l-5 1l-5 0l-8 0l-3 4l-9 6l-6 14l-1 9l8-3l8-9l9 2l13 0l0-5l3-4l3 1l3 2l4 2l-5 3l3 3l2-6l-1-5l-2-4l-3 2l-4-4l2-5l1-6l-1-3l-4-1l2-2l2 3l4 2l-3 1l4 5l4-3l-2-2l5 2l-3 0l2 4l1-4l2-2l2-3l1-3l-3-1l2 4l4-1l-3-2l3-2l0-3l2-4l1 5l-3-1l-4 1l1 4M255 316l1 13l12 0l-1 8l-7 4l-3 6l3 4l7 1l0 4l3 4l0 4l4-3l-4-1l3-2l4-5l5 2l-4 3l-1-5l-5-5l0 5l5 0l2-6l3 8l2 6l5 1l1 3l5-2l-3 5l-4 2l-5 2l-3 3l1-6l2 3l1 6l-5 5l2 3l-3 2l-2 3l4 2l-2 5l-4-3l-2 6l4 0l-1 4l-3-4l-4-5l-1 6l-3 4l-1-4l-3 5l-2-4l-2 3l2 6l-2 5l-1 0l-10 1l-5-1l-5 3M255 316l10-12l-15-1l11-8l-3-12l9-4l5 8l4 11l9 2l11 2l9 5l-3-12l13-11l12-3l-2 5l-10-2l9-12l4 0l-4-5l-5 2l-8 3l1-14l1-9l2 3l3-3l-2-5l-3 5l-2-4l2-4l3 3l6 1l-4 4l3 2l4 1l2-3l3-3l-4 0l3-3l2-3l4-1l4 0l4 0l1-5l1 2l-2 3l-4 3l6 1l2 3l2-4l0-4l3-2l2-4l-3-1l2-3l-3-3l-2-3l-2-4l-3 1l-5 2l3 4l2-6l-3-3l-2 5l0 5l3-1l-3 5l-5-3l-4-5l-6 2l0 5l-5 2l-4 1l4 2l0-3l1-5l4 3l4-3l-4-2l-4 2l-3 0l-3 1l1 5l-3-2l2-3l-3-3l-1-3l3-4l3 2l0-6l-3 4l-4-1l7-3l6 3l-6 3l0 4l-3-6M255 316l15-3l8 9l-1 8l4 6l5-3l3-14l8 7l-11 7l-9-3l-9-1l-6 7l-8 1l-1 6l4 4M255 316l-12 1l-14-2l6 13l5 7l5 1l4 4l-6 6l9 3l-7 6l-6 6l-4-4l-4 2l-1 7l1 9l-6-7l-4-3l-4-4l1-8l0-1l-1 9l8 1l0 6l-7 2l3 6l10-1l1 11l6-6l7 3l6-8l6-1l-2 4l-4-3l1 8l-7 0l-6 2l-6 7l-5 6l8 2l7 2l-4-8l-6-2l-5-2l4-4l7-1l-1-5l8-5l-9-1l1 6l-7-5l3-6l5-8l7 6l0 8l5 0l4-5l2 4l2 2l4-4l4-2l5 2l4 2l-4 2l5 4l-4 1l2 2l-1 4l2 4l-4-1l-2-5l-1-6l-5 0l-4 1l-5-2l2 6l3-4l-1-4l5 3l-2 5l-2-4M265 304l11-6l4-8l9 2l13 3l-3-8l16-3l12-7l0 4l3-6l2-4l-4 1l2 3l5-1l2 4l4-1l4-1l4 3l3 2l3 4l4-7l2-7l-6 4l-6 4l0-7l-4 4l0-6l0-4l3 3l3-1l1-3l3-1l5-5l-5 2l0 3l1 4l5 3l1-6l-2-6l-1-3l1-3l0 6l1 6l0 6l4 3l-3-9l-2-12l-5-1l-3-2l2-4l2-3l-5-2l-2 1l2 3l1 5l-3-2l-2 3l5-1l0 4l3-2l4 4l-4 1l5 2M265 304l-4-9l15 3l-6 15l-7 9M265 304l5 9l13-3l-5 12M261 109l-2 3l-3 4l5 10l9 11l-10-3l1-8l8-6l1 17l7-4l-8-13l3-5l-4-2l-3 2l-2-3l-4 0l0 4l-3 0l-4-3l-5 0l-2-3l0-3l2-3l3 1l4-2l-1 4l-3-2l-2 2l-1-3l3-2l0 3l0 3l-2-1l-3 0l0-3l2 0l0-3l-2-4l5 2l3-1l0-2l2-1l1-3l-2 1l-2-4l1-3l-2-3l-4 0l-1-4l0-5l-3 5l3 0l3 1l2 3l2-3l4 1l5-2l8-8l1-4l-6-5l1-4M261 109l3-1l0-3l-3 0l-3 0l-2-2l-2 0l-4-1l0-3l3-3l1-3l1 2l-2 3l5 0l-3-3l6-1l3 0l2 3l2 2l2-2l3 1l3-2l-2-2l-1 4l3 2l0-4l4-2l-1-3l-5 3l-2-5l1-3l-1-4l-1-6l5-1l-6-4l1 5l-3 5l4 1l3 2l-2 2l5 1l1 4l3-4l7 3l6 6l-4 3l-2-9l3-9l-11-3l-6 6l3 3l4 0l6-4l1 7l8-5l-1-8l6 7l5-3l-1 6l5 2l9 2l5 4l-1 6l-5 2l7 2l-5 4l-2-6l-2-7l8-1l6 6l-5 4l-2-4l7 0l5 6l7-3l-1 5l-6-2l2-5l-7-1l9-4l3 7l4-7l-7 0l-5-6l-8-3l-2 7l6-2l4-2M261 109l2 3l4-1l-3-3l-2-1l-1 2l3 1l-1 2l0 3l-4-3l-3-1l0 5l-4 1l-11 5l-10 2l0-8l10 6l4-7l0-5l3-3l0 3l-3 0l-4 3l0 9l-6 7l-4-5l-5 6l-11-3l-5 6l4 11l-1 10l-1 10l-6 9l-12 7l8 2l4-9l7 0l-1-9l8-6l-7-4l-9 0l8 10l-12-2l6 11l3 12l-7-3l-8 11l0-13l-8-2l-13 3l-8-6l-6 8l3 1l3-9l-8-3l5-6l3 9l14-2l0-8l-2-7l-2 0l16-6l-14 6l-6 6l8 1l5-6l-7-1M261 109l-2 0l0 3M259 109l-1-4l-3 1l-1-3l-1-3l0-2l3 5l2-5l1 1l5 3l0 3l3-3l1-3l2 3l3 2l2 3l-1 3l5 3l-2-3l-3 0l-3-3l2-3l3-4l4-1l-4-3M259 109l2-4l3-3l2-1l2-2l-1-5l-3 0l3-2l-2-3l-2-4l1-4l-2-2l5-1l3-7l-5-9l-6 6l-7-8l-7 4l-1 4l2 6l3 6l-2 3l-2 4l4 3l1-3l1-4l2 1l4-3l-1 5l-3 0l-3 1l2 2l-3 1l-2 5l-2 2l-2 1l-3 3l-6 2l-3 4l0 9l-3-9l-10 14l8 9l9-1l15-2l10 7l-8 3l1 11l-3 12l-9-7l-4-6l9 0l7 1l10-6l7-5l2 11l13 0l7-1l-2-7l2-5l-5-1l3 6l4 3l2-5l-6 2l-5 0l7 7l2-4l5 1l-7 3l-3 9l-1 15l9-9l-8-6l-4-8l-14 10l1-10l4-8l-6-3M259 109l-3 2l-4 2l0-4l1-2l3 4l-4-2l-4 1l-1 3l-2 2l-4-2l-10 3l-8 3l8 5M259 109l3-2l2-2l4 2l-4 1l0 2l3 1l-2 4l-1 3l5 2l0-3l-4-2l-2 0l-4 1l2 10l3-8l-5-2M259 109l-4-3l-2 1l-3 1l2 1M330 275l-3 2l-3-5l-5-3l-1-7l-6-4l-7-9l1 9l-13 1l4-12l8 2l3-5l5 5M330 275l1 6l-4 0l2 5l-4 0l1 16l7 7l10 2l-1-8l-9 6l3-14l1-10l6-1l-3-1l-3 2l10 2l-4-3l4-1l2-4l-4 0l-2 5M330 275l4 3l3 0l3 5l1-6l-3-3l-1 4l-3 5l3 2l-3 3l2 7l6 8l12 2l13 9l-15 1l6 7l-9 7l7 7l1 9l2 6l4 3l4 5l-2 6l1 5l-5 1l4 4l1-5l3 4l4-2l5-1l-1-4l4 2l-3 2l6 1l4-4l-3-5l6 1l-3 4l-4-1l1-4l5-4l-1-6l-2-7l5 4l5 7l-8-4l3-3l2-2l-7-2l-2 4l-4 2l-1-4l7-2l3-5l4 7l3 9l-7 2l1 5l6-7l3 7l-9 0l3 4l-6 0l7 6l5-3l7 3l5 9l-2 0l-3-9l-3 7l-5 8l-1-3l6-5l-5-3l1-7l3-5l-3-2l0 7l-6-3l1 6l-5 5l2 6M334 278l1-4l3 0l1-3l-2-3l3-1l5-1l1-5l4 1l2 3l3-4l-3-3l-2 4l5-1l0-4l0-5l5-1l-1-9l-3 1l-1-3l-3-4l-1 5l-2-3l-4-2l2-3l4-2l-4-3l3-3l2 1l-5-12l-1 4l-6-2l0-5l3-4l0-3l-2-6l-5 0l-5 6l-7 1l-2-8l0-5l4-3l5 1l1-8l4 4l-5 4l-4 4l-5-2l-2-6l-1-4l-7-2l3-5l2-6l5-4l4 4l4-4l3-6l6-3l-1 6l6 3l3 2l-2 8l-1 7l-4 3l-4 1l0 5l-5-1l-4-6l-8-2l8-3l5 3l-5 2l-1 5l-6-3l-5 6l7 0M334 278l-3 3l3 2l6 0l5-4l0-3l-3-4l-1 5l4 2l2 4l5-2l7-3l-4-3l-3 6M334 278l0 5l0 5l-8 14l-6 14l-6 6l9 0l3-4l7-9l0 11l10-9l11-6l-2 10l-9-4l0 11l9-7l-3 14l1 7l-1 5l-4 7l5-2l5 6l4 4l-1 3M326 376l7-3l-1-5l-4-4l-7 3l-7 1l-7-3l1-6l-7 3l-2-8l-3 6M326 376l-4 3l1 5l-8-4l-3 6l4 6l-8-2l1-6l-6 5l-2-5l-5 0l-4-3l5-1l-3-3l-4-3l3-3l3 3l5-2l-5-5l4 1l7-3l-2 8l4-2l1 7l6-6l9 0M326 376l5 2l-3 7l4-2l6-5l5-2l6 0l4-1l4-3l4-1l1 6l3-2l1 4l-6 2l4 4l-3 2l-4-2l0 5l4 5l0 6l-5-2l-1 4l6-2l-2 4l3 2l-4 4l-2 3l0-9l-1-2l-10 0l1-2l-4-5l-4 4l7 3M333 373l-2 5l7 0l0-5l-6-5l6-2l-4-6l-5-3l5-7l5 0l3-9M333 373l5 0l0-7l5-4l-1-8l3-6l-6 2l-5-6l-4 2l4 4M325 252l4 0l5-1l-1-6l3-3l3-3l0 3l2 6l2 2l4-4l2 2l2-3l-4 1l0 5l-3 3l-5 2l1-4l4 2l0 3l-5-1l2 4l5 1l3 5l-4 0l-4-3l5-2l-2-4l-3 3l-4-1l-3 0l2-3l3 0l-2 3l4 4l0-3M325 252l-4 2l6 3l-2 3l2 3l4-2l-1-4l2-3l2 5l-4-2l-3 0l5-3l2-3l6 1l3-2l1 4l3 0l0-3l-4-1l0-4l4 0M329 252l-2-3l-4-1l-1-3l3-3l-1-3l-4 1l5 2l1 4l-4-1l-2-5l-4 4l-5 1l-3-1l5-3l-3-3l-6-3l-3 4l5 0l-2-4l4-2l3-3l-1-6l5-1l1 3l1 3l-3 3l-2 3l6-1l4-2l1-3l3 1l3 2l2 1l3 2l1 4l-4-2l-4 3l0-4l2-4l2-3l-2-7l-2 4l4 3l0 4l-4 3l4 1l0-4l4-1l-1 3l-3 2l0 3l-4 0l-3-1l3-3l-2-2l4-2M329 252l3 2l4 2l4-4M355 252l1-3l0-6M360 253l0-2l-4-2l-4 1M336 107l-2 4l-4 6l-5 1l4-6l-3-7l5 2l5 0M338 102l5 2l5-6l-1-1M338 102l2-5l-9-4l0 8l0 6l-2 5l1 5l-1 8l-1 7l2 8l-1 7l-6 0l-2 4l-3-7l5 3l5 7l-7-3l-6 1l-5 3l-6-1l-1-6l-4-4l2-9l7-3l-7-3l-6-4l-3-5l0-5l7 3l-7 2l-4 3l7 2l7-1l-1 5l0 6l-5 3l-4-3l3-5l6-1l4-1l4-3l-1 7l6-6l2 5l-8 1l-3-4l-3-4l5-7l-8 1l-4 7l0 5l-7-2l7-3M369 323l-11 6l0-7M272 148l-9-6l-3-8M272 148l-10 3l-9-3l4 10l-7 2l-9 4l-9 8l-8 4l8 4l0-8l4 4l5-2l-9-2l-1-8l-11-6l0-8l-6-6l-7 3l6 7l7-4l7-11l-13 5l-9-5l5-6l-1 0l-4 6l-4 1l6 7l-3 7l-4 8l-6 5l12 6M329 324l-6-2M329 324l2 6l-6 5l-6-1l-6-7l1-5l0-6l3-10l-12 1l-5 7l8 2M329 324l4-4l-7-2l-6-2l-3-10l9-4l10-7l11-8l8-2l-8-2l0 4l-5 16l15-10l10 0l4 0l3 9l-4 0l-3 12l-6-13l6-8l-2-10l-10 2l2 8l-3 12l7-4l9 1l-3-9l1-10l-3 0l-6-5l6-4l0 9l-8 10l-10-6M329 324l-3-6l0-16l-10-7l-11 12M329 324l8 1l-4-5l10 2l6 7l9 0l4 6l3 8l6 0l5 0l-5 5l-6-5l3 8l4 3l-1 6l-3-5M175 158l-4 6l-6 11M240 335l0 7l-6 0l4 9l-3 6l-6-4l2 6l-6 3l5 4l4 3l3 5l-6 1l-5 4l0 5l6 2M240 335l-8 0l2 7l-5-2l-5 1l-6 7l6 3l7-5l-2 7l-5-2l-1 5l6-3l9-2l-7-5l-2-6l3-5l3-7l14 2l7-1l6 7l-2 5l-7 2l-1 6M445 196l-4 2l0 4l1 5l1 5l3 4l-2 5l-2-3l4-2l2 3l-4 2l2 2l2-4l1-3l-3 0l2-3l-5-1l-3-2l2-3l-4-1l-5 1l3-4l5-1l4-6l-1-5l-7 3l4 4l3-7l-3-3l-7 0l-4 3l-4-5l2-6l-3-5l-8-1l-5 4l-4-3l-7 1l0 7l-2 6l3 3l3 3l5-5l4 1l3-2l5-2l0-5l6-2l6-1l-5-5l-4 1l-4 3l7 2l1-6l12 10l-3 0l-4 4l3 6l-7-3l-5 1l-1 7l-5 4l-1 6l-3 2l-5 0l-2 0l1 9l3 2l-3 1l0-3l-3 3l2 4l-2-4l1 7l-3 6l5 2l5-2l2 3l-1-7l2-6l1-2l-6-2l3 4l2 0M445 196l7 6l-2 5l-1 3l-6 2l2-6l-3 1M445 196l3 5l-7 1l-3 4l2 4l-2 3l-2 3l-2 3l-3 0l0-4l3 4l6 1l2-2l-6-2l4 4l4 1l-3 3l5-1l3 3l3 1l3-4l0-4l-3-6l0 6l3 0l3 5l-3-1l-3 1l-3 2l0 3l-3 5l5-3l3-1l3 1l3 6l-4 0l1-6l5 3l-2 3l3 1l2 7l-1 5l-3-1l-3-2l-4 2l2 1l2-3l-1-4l-3-3l2-3l-4 1l2 2l6 0l0-3M441 198l-7 1l-5 0l-1-4l-4 4l5 0l1 5l-6-5l-3-5l-4-5l-2 7l-1-5l-1-7l-1-6l-5 5l1-8l3-6l7 0l7 6M449 210l4-1l-1-7l-4-1l2 6l3 2l1 0M449 210l-1 3l1 3l3-3l-4 0l4 0l-3-3l-4-4l-4-4l-7-3l-6-4l-3-3l1-6l-4-4l-1-4l-4-4l-5-1l0 5l6 3l-1 8l-4-5l-6-1l-6 0l-4-4l4-3l-2-4l-4 3l6 1l2-4l5 3l-2-7l5 1l6 5l1-5l-5-4l-7-13l2 11l3 6l2-4l-5-2l-5 1l-5 3l1 5l4 0l-5-5l-3 8l-3-9l-6 1l3-5l1-7l5-6l1-5l-4-6l-1-6l2 0l5 7l-2 5l5 0l-2 7l-3-7l3-3l2 3l5 7l-7 0l-4-2l3 7l-8-1l4 6l4-5l6 0l-1 8l-4-3l-1-5l1-5l5 5l4 7l-2 5l-3 4M452 213l1-4M462 234l1 4l-1 4l3 3l-1-8l-1 1l-3 2l-4-3l-2-4l3-2l1-7l-4 6l0 3l-2 5l-5 3l-3 3l3 3l4 1l-3-5l-4 1l-1-4l-4-1l-2-5l-3-6l-3-2l6 8l2-3l-5-3l2-3l-5 1l2-3l1-4l2 3l4-2l1 4l-5 1l0-3l5 2l4 3l1-4l3 0l-1-4l4 0l3 4M462 234l2 3l2 11l1 2l-3 4l-7-2l-3-3l-2-1l-1 0l-4 1l-7-10l-1 0l4-3l3-2l-2-3l-3 2l2 3l1-5l5-2l2 2l3 2l-5 3l-3-2l-1 4l-2 2l0-4l2 2l2 3l-4-1l-3-1l-3-5l2 2l0 3M462 234l-2-6l-3 3l2-6l-4-6M464 237l-4-9l-1-3l-1-1l-6 3l2 3M340 185l-4 6l0 7l-5-1l0-7M340 185l-2-5l-6 2l1-6l-6 3l0 5l-7 2l-4 0l3-4l0-5l-7 3l-1-12l-5-2l-3-6l1-6l4-7l-5 1l-6 3l-5-4M340 185l1 7l0 6l2-4l0 10l-5-1l3-5M336 186l2-6l6 2l-1-3l2-4l-6 0l-2-8l7-2l0 5l1 5M421 221l0-4l1-4l0-3l-4-1l-2-3l-1 5l0 3l3 4l3-1l-2-3l-4-3l-5-4l0 4l-3-1l1 1l-2 12l3 0l-1 4l4-1l0-4l3-3l0-5l4 0l3-4l3 2l-3 1l-3 1l-1-5l6-2l-5-4l-3 3l-6 1l-3 3l-7-6l-3-2l-3-6l-4-1l-4-5l-3-2l5-2l3-6l4-5l-6-4l-3-4l-3 4l6 0l3-5l2-5l-5 1l3 4l6 1l-4-6l5 0l-1 6l8 1l-3-4M421 221l-3-3l1-4M421 221l-6-2l3-1M421 221l-3 3l-3 2l0 6l-1 4l-4-2l-3-4l1-3l4 3l3-4l-3 0l-3-3M421 221l1 1l-1-5l5 1l5 1l-3-5l-3-2l-1-5l0-8l-7 0l2 4l-7-1l-2 5l-4-7l-1-5l5 1l4-5M422 222l4-4l-4-5M422 222l4 1l0-5l-1-6l2-3l6-2l-3-3l6-1l2 3l0 7l-4 0l-1-6l-2 5l0 3l5 1l-2-3l4-7M422 222l-4 2l-3-5l-2-2l-4 3l2-6l-1-3M315 239l-2 2M315 239l3-5l1 4l3-6l-4-1l-1-2l2-3l0-4l4 2l-1-3l7 1l-4-5l5-1l-1 6l5 0l4-1l-3-3l5-2l-4-3l4-2l-2-8l-7 1l-4 6l-3-5l-3 4l-6 4l-8-2l-9-6l-2 9l-6-1l8-8l-11-8l-13-6l-14 6l-9 2l-2 4l-5-14l7 10l4-10l-1-13l10-8l7-10l-14 0l7 10l8 13l2 10l9-3l4 9l5-12l-4-14l12 9l12 0l-11 9l-3 16l6 10l4 1l1 5l6 2l-2 4l4 2M315 239l1 5M315 239l-3-4l-1-5l-4-3l-6-5l-5-1l-6 0l-6 3l-5 0l2-4l3 4l0 6l1 3l0 5l-6 0l-3-5l-4 2l2 4l2-6l5 1l4-1l8-1l2 3l6 4l-4 3l0 5l-6-1l-2 6l4 7l9 11l4-12l6 0l3-6l6-1l2-3l3-2l1 3M315 239l4-1l5 1l-2-7l4-2l1-4M315 239l-5-1l-4 1l2 5l2-6l-2-5l4 2l-2 3M315 239l5 1l-1-2M224 351l-6 1l0-4l1-7l5 0M349 272l-1-3l-3 1l4 2l5-1l7 0M349 272l2 2l-2 5M348 269l1-3l3-1l4 3l-5 0l-2-2l1-4l-2-5l4 1l3-1l-3-3l0 4M348 269l6 2l-3-3M282 87l3 6l-6-2l-4-1l-2-4l-4 0l3 3l-2 3l4 2l6 0l0 5l6 1l1 6l-7-1l-3 5l-2-3l-4 0l-1-5l-3 0l-1-1l0-4l-3-1l1-2l-1-4l2-1l-3-2l1-2l5 3l-3 1M282 87l1-6l-2-3l15-1l1 8l5-1l4 3l-5 2l0 5l-6 2l4 4l7 2l-2 5l-5-7l8-3l-1 5l5-2l8 3l-5 6l7 0l-5 4l-1 4l2 5l-3 4l9 4l5 2l5-3l7 3l6 4l-6 6l-6 0l-4-2l3-4l-5-4l-3 3l5 5l-6 1l-1 6M289 90l-4 3l-5 1M289 90l5 1l1 5l-3 8l7-4l2-6l6 3l4 3l6-4l7 5M194 167l0 13l-5 6l-3-8l-7-5l-6 8l-11 3l0 10l5 7l4-3l6-3l1 7l-7-4l2 5l-6-2l-5 0l0-7l-5 2l0 1l-7 6l4 1l-3 3l-5 0l-3 2l-2 2l-6 6l-3 3l-7 6l2 1l5-7l4 4l4 1l0 7l6 1l5 2l0-4l-5 2l-1-5l-5 4l-2 5l4-2l4-2l1 4l4-2l0 5l-6 2l0 4l-1 4l-2-3l-1-3l4-2l-1-3l-4 2l5 1l4 2l-4 2l-4-2l-5 1l-3-2l-3 1l-5 0l-3 3l-5-5l3-2l5 4l1-3l-2-2l1-3l-3 0l2 3l-4 1l6 1l4 3l1 5l-3-1l-3-4l0 6l-3-3l-2-7l2-4l0-3l3-7M194 167l-10-8l7-7l10-12l-4 6l-6 6l2 4l11-2l-7-8l10 1l-2-8M194 167l-8 2l-7-4M194 167l-1-11l-9 3l2 10l8 11M186 169l0 9l-4 10l-5 7l-4-4l-2 7l-3-4l-1 7l-1 5l7-3l6 8l12-2l10-2l2 8l10 2l-7 5l-3-7l7-6l3 8l6 2l-1-8l-5 6l1 6l-10-1l-1-7l-8 0l-4-6l5-9l12 1l12-1l-6-6l-6 7l-7 6l-5-7l-2-7l-5-7l-7 2l-9-7l0 10l-11-7l6 10l-6 0l-3-11M186 169l-7 4l-8-9l-10 0l1 2l9-2M353 357l3 6l-7-2l0-10l4 6l6-1l3 2l5 1l4 1l1 5l1 3l5 3l-2 2l3 2l-1 5l5-4l1-4l-3-3l3-2l0 5l-5 3l-1-4M353 357l-4 4l-7-7l7-3l1-5l-1-5l8 4l-7 1M359 356l0-5M359 356l4-2l-1 4l1 5l2 2l7 0l6-1l3 5M228 107l6-4l7 3l4 1M228 107l3 0l10 6l0-7l4 4M228 107l-5 12l-5 2l-3 6l-6 6M405 189l-4-6l3-3l3 3l3 7l3-6l5-3l-1-7M405 189l-6 0l-8 0l-1 4l0 2M405 189l2-6M405 189l0 6l-6 1l7 4l-6 4l-2-4l-1 2M405 189l5 1l0 6l-4 4l-8 0l-4-4l-4-3l6-1l3-3l-4-6l6 0M405 189l-3 3l-6 0l-5-3l-5 1l4 3M402 192l-3 4l-1 4M296 340l1 7l2 7l-5 2l-3 3l-4-2l2 5l-3 3l2 5l2-5l2 3l4-1l-3 4l-5-1l-1 6l3-2M296 340l6 6l-5 1l-2 5l-1 4M296 340l-5 9l-1 6l5-3l4 2l3-8l4 9l-5 7M296 340l5-3l7 1l4-4l7 0l-6 4l1 9l-5 3l-7-4M296 340l-8 1l-7-5l-5 1l-5 4M297 347l-6 2l4 3M380 359l-2 5l6 3l-2-5l3 1l0-6l-4-5l-6-2l-3 4l3 3l5 2l5-2l4-4l-4-3l-5-2l5-6l1-7l-1-6M380 359l-5 2l-3 4l-3 4l4 3l3 1l-2 6l4 1l-3 2l2 3l4 3l3-1l-2-3l2-4l-6 0M380 359l2 3l3-5l5 2M380 359l-1-4l2-3M378 364l-3-3l-4-1l-6 5l4 4l-3 1l-3-2l-2 3l-3-3l1-6M378 364l4-2M378 364l-1 3l-5-2M346 136l-1-8l-4-6l5 1l8-4l6-3l1-6l-3-8l-10-4l4 5l-9 1l4 5l-5 0l-8 2l-5 1l-5 1l2-8M346 136l6-1l4 3l-3 7l9-3l-6-4l7-1l1-5l-1-6l4-4l6-7l0-2l9 9l-9-7l0 8l-6-1l-6-1l-1-5l-6-2l0 5l7 2l2 5l7 1l-6 5l6 0l6 3l-5 2l-4 4l5 7l5 1l-5 5l0-6l-7 5l-4-6l-8-2l-2 6l2 5l2 5l-1 8l6-1l5 0l4 4l8 5l0 1l0-7l0 6l5 6l9-3l6-1l-2-4l-7 1l3 4l4 3l-4 6l-3-3l-6-3l1 5M346 136l-5 1l-1 5l8 0l8-4l4-4l4-2M346 136l2 6l5 3l-7 2l-6-5l-1 5l0 9l-6-2l0 5l5 3l-8 3l-8 0l-4-5l-4-2l1-6l-7-5l5-4l-1-5l-4-6l-2 10l-3 6M346 136l4-6l-5-2l-5 4l-7 4l0-7l-4-4l-4-7l-5-1l-3 5l-6-2l3 6l-5-1l-2-8l4 3l4-3l-5-5l-6-5l-1 7l4 3l3-5l6 1l4 4l-5 0M341 137l-1-5l-1-4l2-6l-5-7l-6 2l5 3l6 2l2-5l-1-8l-6 6l-2-4l-3-4M341 137l-7 5l-5 5l-1 7l6-6l-5-1l-5-6l-6 3l-5-1l2 5l6 3l-2 5l-1 4l5 0l-1 5l-2 8l6-4l8 3l-4-7l7 2l1-5l8-3l-2 6l6 0l4 4l8 6l1-1l2-6l-3-8l-2 8l2 7M341 137l-8-1l1 6l0 6l5-1l-5-5M316 392l5-4M310 396l-6-3l-7 0l-1-5l0-4l1-4l7 0l6-2l-1 6l3 2M310 396l-8 2l4 3l-1 1l-3-4l2-5l-5 3l-4 0l-3-4l-2-2l2-4l0-5l-3 1l3 4l4-2M310 396l1 4l4 2l10 0l-1-5l-3-3l8 0l-4-6l7 0l-4-3M361 371l-2 5l1 5l-4-3l-1 4l-2 4l4 4M359 376l-2-4l-2-3l-6 7l2-9l5-4l-1 6l-2 6l-1 6l-6 0l-1 7l-3 8l7-4l4-1l0-5l-7-5l-3-5l-2 7l4 5l4 4l2 7l5 0l5-4l3 2l5-2l5-2l-3-3l5-1l5-1l-2 6l1 4l-5 1l-1-6l2-4l1-4l-3 1l-3 4l-1-4l2-4l-2-4l3-6l1 7l-2 3l-4 1l-2-4l3-5l-4 1M359 376l-6-1l3 3l-4 3l1 5l-4 6l7 2l0 5M359 376l-3 2M359 376l3 1l-2 4l-3 4l-2-3M448 243l-1 4l0 2l-3-5l-4-5M448 243l-1-2l4 1l3-2l0 5l4 2l3-1l4-1l1 3l-2 2l3 0M448 243l3-1l1-4l-3-2l2-5l1-4l0-3l0-5l-3-3M448 243l6 2l0 4M451 248l3-3l3-2l5-1l-2-2l-3 3l4 3l3 4l0 4l-3-5l-5 1l1 2l4-3l0-3l1-4M287 197l-2 9l13-1l14-5l3-8l7 5l5-3l-1-5M287 197l14-8l-9-4l8-5l6-14l-9-4l6-2l7-5l-2-8l7 1l0 4l4 4l9-2l-5 6l7 5l-1-6l4 0M287 197l-12 6l-1-12l-12-8l-8-7l-13-2l0-10l0-11l5-6l4 13l4 8l0 8l-14 5l4 8l11 0l5 8l2-14l2-15l-10 0l-13-4l-10 0l2-8l-13 2l8-10l9-1l3-10l12 0l11 5l-1 9l9 7l11 6l6 7l9-1l9-4l3-5l-6-1l-6-9l-8 5l-7 8l3-16l0-8l-3-8l-5 1l-1 7l9 8M254 74l-1 6l0 4l0 2l3 3l0 3l2-1l3 3l-5-2M254 74l-8 0M254 74l-2-14l-8 8l-1 11l1 4l3 0l1 3l3-3M254 74l-10-6M254 74l5-6l3 11l-2 4l-3-2l1-4l-5 3l-4 0l5-6l4 3l4 2M307 365l5-3l5 2l7-3l0-5l-5 2l1-9l-5 6l-1-8l-2 6l-4 6l-2-4l-7-1M314 368l2 4l-7-1M314 368l-2-6l-4-3l7-4l4 3l-2 6M216 181l8-5l-11-3l3 8l-2 13l-5-9l4-12l12-4l7 3M216 181l-7 4l-4 7l3 9l2 8l10-9l8-10l4-10l4-4l4 5l1-7l13-6l3-10l5-7M216 181l11 8l-3-13l1-7l-13-5M228 398l-9 2l-3-5l6-1l6 4l0-8l-6 4l-3 6l2 5l7-7M228 390l-2-6l-7-2l2-6l-6 5l0 6l-1 4l-1 10l3-6l-2-4l7-3l-5 7M228 390l-7-2l-6-1l4-5l7-3M335 239l1 3l0 4l-3-1l-2-5l5 2l3 0l4 4M335 239l3-4l1 4M245 383l1-8l5-5l0 5M245 383l-3 7l-3-5l0 9l-3 6l-2 11l9-9l2-8l3 9l4-7l5 0l1-6l-1-6l-2 3l3 3l-4 1l3 5l-5 5l6 2M245 383l6 5l-9 2l-3 4l6 0l-3-4M127 251l4-2l4 1l1-5l-3 1l-2 3l-1 3l5 3l-1 4l2 1l2-3l-4 2l-6 2l-3-2l-2 2l5 0l4 2l2-4l-5-2l-4 2l-4-1l-4 2l-3 3l4 0l-1-3l1-5l-4 0l-1-5l-3 9l4-4l4-5l4-3l-4 0l-1-5l-1 3l2 2l0 3l-5 0l0-1l5-2M127 251l1-3l2-4l-1-5l-3 2M127 251l2 6l-1 4l-2 4l6-2l3 0l-1-4M127 251l3 1l-1 5l6-2l3 2l-1-3l-2 1l0-5l-5 2M127 251l-5 1l0-5M127 251l-4 5l2 3M127 251l-2-1l3-2M301 189l-1-9l11-12l4 7l4 2l8 2l-7-6l-5 2M301 189l9 1l2-10l4 6l-1 6l-5-2l6-4M301 189l11 11l-5 11l-3 4l-4 2l1 5l1 8l2 5l-5-2l-6-1l-5-2l-3 3l6 5l-6 0l-4-4l-2 4l-5 1l1 3l4-4l0 4l2 8l8 2l-3-5l-5 3M300 180l-3-10l0-8l0-11l7 3M154 204l-4-1l1 4l-1 6l-4-6l4-4l7-2l-3 3l3 3l-6 0l3 4l-4 2l-5-1l-2-3M154 204l6 1l2-4l-5-4l5-3M150 203l-4 4l-1 5l-4-1l-3 3l-3 3l3 3l-2 4l-4 0l0-4l6 0l0-6l3 3l0-6M358 368l-2-5M358 368l-1 4M358 368l5-5l0 5l2-3M358 368l-3 1l-4-2l-8-5l-5-5l4-3l-3-4l-1 7l0 9l5 4l6 6M358 368l5 0M319 156l-5 2l-4-3l-1 6l2 7l6 1l3 4l-1 4M319 156l4 4l6-1l-1-5l5 0l1-6M314 158l-5 3l8 3l1-4M314 158l3 6l5 1M288 128l-6 4l-6 8l9 0l2-6l-5-2l-3-4l-2 5l0-11l-8-2M288 128l-6-5l-3 5l9 0l-1 6l8-4l6 5l5 7l7 1M288 128l0-5l-6 0l0-5l-3-5l3-3l-5 0M282 123l-5-1l-5-7l4 1l-2-6l-5-1l-1 4l-1-2l2-2l2-2l-3 0l2-5l2-2l-4-1M142 235l-2-3l-3-4l-1-4M142 235l2 4l3-2l-2 5M142 235l-2 6l-4 4l3 3l2-4l-1-3l-2-4l-6-2l8-3M142 235l5 2l4 3l0 1l0-6l7-1l-7-3l-6-3l-5-3l2-3l3 6l6-1l4-2l6 2l-4 2l-2-4l5-2l6-5l-3-3l3-5l-6 0l3 5l8 0l-5 3l1 2l-7 3l1 4l6-7l4-5l-5-5l6-1l1-6l5-1l1 9l-5 5l11 3l3 0l3-10l-4-10l-10-4M140 241l-4 0l-3 2l0 3l-3-2M223 119l3 11l1 9l10 8l-4 9l8-3M141 217l4-5l1 6l4-5l3 4l-7 1l-4 4l-4-2l2 5l-3 3l-5-4l-5 3l5 2l0-5M141 217l1 5l7 1l-4 5M141 217l-3 3M141 217l5 1l3 5l2 4l0 4l6-2l-6-2l1-6l3 4l3-6l5-4l-6-1l3-4l-3-3l-3 4l6-1l0-5l6 5l0-4l-4-5l-5 0l0-4M345 213l1 5l-1 5l-2-4M345 213l-5 3M345 213l-5-2l-5-2l-4-5l-2-3l-2-7l4 3l5-6l5 1l-5 6l2 5l5 4l2 6l2 1l1 8l4 4l1 2l-6 0l0 5l2 2M304 380l-5-4l-3-2M304 380l1-7l5 5l5 2l2 5M304 380l-3 4l-5 4l-4-2l-4 1l2 3M304 380l5 4l-8 0l-4-4l2-4l-5 1l-1-6l-1-3M325 135l-9-4l7-1l6-5l6-5l-2 9l6-1l6 0l1-5l3-7l5 3l3 6l6 1l-3 8l-8 1l-4 7l-2 5l5 4l-6 3l-6 2l7 3l9 2l5 7l3 6l14 3M325 135l-2-5l-2-7l4-5l-1-5l-3-4M325 135l-1 6l-4-3l-4-7l-4 7l6 6l-3 4M325 135l-5 3l-8 0l-6 4l-7 2l-2 7M360 134l3 3l8 0l-1-5l5-5l1 8l7 6l3-5l5-4l-4-4l-4-5l-1-1l-7 5l8-4l-1 7l-6 5l10 1l6 2l1-6l-6-4l-1 8l2 5l8 3l-7 3l6 2M360 134l-4-4l7-4M272 100l1-2l-3-4l4 0l1-4l-3-1l-4-1l2 4l-3 0l1-4l1-2l1-3l3 3M272 100l-2-3l-3-3l-1 3l-4 2l4 2M272 100l4 0l2 2l2-3l0 6l-5 2l3-5l2 3l6-5l-1-7l-5 6M272 100l1 4l5-2M270 97l0-3l0-2l-3 2l0-2l-4-2l-1-3l-2-4l3 2l2-2l5 0l2-1l4-4l0-3M157 201l3 4l-3 2M252 137l-6 10l-6-10l-5-8l-8 10l1 9l-8 2M252 137l-2-10l-9-5M253 242l-3-2l2-9l0 5l1 6l3-2l-4-4l-2 4l-1 4l4-2l3 4l-4 3l-10 7l7-12l3 5l0 7l-10 0l0 1l3 9l7-10l-10 1l-3 8M256 240l4 2l4 1l-1-6l0-6l-7 2l-4-2l1-4l0-1l5-3l-4-1l-1 4l5 2l-2 5l-4 3l7 0l-3-3l-3-6l5 1l5 3l-1-3l-4 0l0-5l4 5l0-6l-3-5l-1 6l4-1l3-3l4-1l5-2l3 4l2 4l-6-3l-4-3l0 4l4-1l4-1l4 0l4-4l5 5l2-4l-2-4l-5-7l0 10l5-3M256 240l3-4l4-5l5 6l4-2l-3-3l7 1l1-3l2-6l-6 1l0-4l1-5l1-13l-15-6l6 14l3 7M256 240l0 6l2 6l4 9l5 8l-9 1M337 325l6-3l-1 9l8 5M337 325l5 6l7-2M250 108l-2 2l4 3l0 4l9 9l-11 1l2-10l-5-4M135 250l4-2l3-1l3-1l4 2l-5 2l6-1l-9 6l3-5l-3 4l-3 3l3-2l-5 5l-1 3l0 1l1-4M135 250l2 4l4 0l0 1l-6 9l-3-1M135 250l-2-4M135 250l4 1l5-1M139 251l3-4M139 251l0-3M139 251l-2 3M139 251l2 3M368 383l-4 2l2-6l4-1l-1-4l0-5l4-1l0 4M368 383l2-5l4 1l5-4l4 1l4-1l1-7M368 383l2 3l-4 2l-5 3M368 383l-2 5l5 2M405 375l2-1M405 375l-6 3l-4-4l-8 1l-3-3M405 375l-5-4M405 375l-1 6l6 2l-11 6M261 358l6-2l-7-5M261 358l-7 1l0-4M261 358l2 6l-4-1l-3 4l0-4l-2-4l-4-3l-1 6l5-3l-1 6l3-2M261 358l5 1l4 1l-4 4l4 0l-1 3l3 5l0 4l-3 3l4 2l-1-5l-6 0l-3-4l-3-1l-3 3M321 258l4 2l6 1l-1 3l-1 3l-2-4l-5 0l2 4l5 0l3 4l1-5l-2-5l5 2l-3 3l-4 1l-1 5l-1 5M321 258l0-4l0-3l-3 4l-3-3M321 258l-3-3l0 7l4 1l-1-5M322 263l-3 6M322 263l3-3M195 215l6-8l9 2l8 2l2-11l2 3l-4 8M195 215l3 5l6 2l2 0l8 1M195 215l-7 4l10 1l5-5M449 223l0 3l-4 1l-1 4l-3-2l-7-1M449 223l3 1M449 223l3-4M418 181l4 1M418 181l3-3M418 181l4 6l4-1l4-3l-2-3M434 199l2 4M434 199l3-5l4-6l0-4l-7-5l4 5l3 4M434 199l-4 5l-6 3l-2 3M434 199l-4-8l-2 4M365 168l6-4l-2 8l-6 2M357 385l-4 1l-8 2l-9-1l6 9l-8-4l4 8l-3 3l-9-1l-1 0l-6-1l2-7M262 228l4 1l3-3l8 4l4 4l3-4l4 0l0-5l2-4l3 6l0 5l-2 6l6 4l-2-7l-4 3l-1 4l-5-4l-1 4l-5-4M262 228l3-4l4-2l0 4l4-1l4 5l-8 2l0-6l-4-2l-3-2M336 387l5-4l-9 0l4 4l-4 1l-3 6l-5 3l9 0l5 3l8 1l9 2l-4-4l5-5l5 1M336 387l-2 5l-5 2l4 3l2 6l-3-1l-6 0l-2-5l-5 4l-3-4l-5 3l-5 1M332 388l0-5l-1-5M332 388l2 4l-1 5l-7 5M289 252l-3 11l-10 10l10 9l-14 5M286 247l-7-5l-4 5l-8 4l-9 1l-6-3M286 247l5-1l6-4l-7 0l-4 5l-2-5l-5 0l-4 0l0 5l-5-2l-3 6l-1-4l-2-4l-3 4l6 4M261 247l-3 5l-6 4M261 247l5 0l4-2l4-6l-6-2l-5 0l-4-1l1 6l3-5l5 4l-4 2M261 247l-1-5l-4 4l-7-2M261 247l-5-1M255 370l1-3l4 4l-1-8l5 4l-1 5M255 370l5 1l-1 5l-4 2l-3 5l5 1l5 0l3 2l-2 2l-6-4M255 370l-4 0l5-3l-3-2l-4-3l-3 5l-4 4l-5 3M305 249l-3-6l-5 4M268 241l6-2M268 241l0-4l1-5l-6-1l3-2l3 3M268 241l-2 6M268 241l2 4l5-3M399 151l7 1l0-1M406 152l-2 4l-5 5M371 348l-3 3l-5 3M371 348l4 2l5-2l-4-5l9-1l2 4M371 343l6-6l-8 0M418 169l11 5M264 168l9 0l-2-10M250 303l-10-2l-8 5l11 11l7-14M240 301l-8-6M240 301l3 16l6 13l-4 6l-5 6l-2 9l7 4l-10 2M312 353l-3-3l-1-6l5-6l-1-4l-7-2l-8-6l8 0l-4-5l-1-7l-11 5l-6-9l2-10M312 353l-6 2l3-5M312 353l3 2l-3 7l7-4l5 3l-3 6l-5 5l6 7l-7 1l-6 4M398 357l2 7l-6 4M398 357l-1 0M398 357l5 9M325 286l-9 9l-1-11M329 286l-3 16M329 286l5 2M329 286l2-5M329 286l5-3M152 221l1-4l1-6l3 3l-4 3l5 2l8-1M152 221l-3 2M152 221l6-2l2 4M152 221l-6-3M158 219l-1-5M120 240l-1-2l-2 4M350 165l-3 2l7 2M350 165l5-4l7-1l3-7l7 1l3 4l2-9l7 5l5 8l-11 2l8 3M350 165l-4-6l7-3l6 0l-4 5M347 167l-3 3l-7-3l-3 5l-1 4l6-1l5-5M233 156l8 8M233 156l-5-8M275 405l2 4l0 5l-10 1l0-4l-3-5l-3 4l-3 2l-5-1l-5 2l-3 5l11-1l5-2l0-5l-5-4l-4-5l-4 2l4 3l-4 7l-14-2l6 6M275 405l4-2l3 3l0 4l-1 3M275 405l-2 5l-6 1l-3-1l0-4l-4 1l-4-1l-4 0l0-5l7-2M275 405l-5 2l-3-5M276 401l2-3l1 5l-3-2M320 91l-1-6l-10-3l2 7l1 5l-5 3l-2-5l6-3l5-3l4 5l-3 5l-5-2l8-3l2-4l5 1l-8-3l3 2M320 91l7-3l4 5M319 85l-3 1l-7-4l-2-1M314 126l7-3l8 2M299 144l-3-6l-1-8M311 100l-1 7l-4-5M311 100l1-6l-7-2l1-5l3-5M311 100l3 9l2 4l8 0l-4 4l1 6l-4-1M310 107l-6 0l-8-1l3-6M310 107l0 5l-7 2l-4 4l3 6l7 1l2-5l-1-8l4-3l-4-2M322 339l-4 1l-1 4l3 5M322 339l8 2l0 5l-5-1l-8-1l-3 3M322 339l3-4l0-4M322 339l-5 5l-4-6M375 407l3 2l1 3l3-4l-2-2l-2 3l4-1l2-4l-3-3l-1 5l-5 1l-4-3l-3 2l-2-2l0-5l5 1l-2-5M371 404l-5 0l-4 3l1 6l3 0l-10 1l7-1l-5-2l1-6l-4-2M371 404l0-4l6 2M287 398l-3 4l2 4M287 398l2 3l0 4l-5-3l-2 4M287 398l-4-5l5 0l0-6l-4-2l-5-2l7-1l-2 3l-3 1l1 3l6 4l4-1l5 1l2 3l-1 3l4-1l-3-2M287 398l4-3l4 1l0 4l2 4l1 5l-4-3l-2 5l-5 1l11-1l-6 0l6-2l0 2M284 402l-2-3l-2-6l-2-5l4 1l-2 4l-6 2l2-4M284 402l5-1l3 2l2 3l3-2M284 402l-5 1l3-4l1-6l-3 0M362 160l8-1l2-5M362 160l-3-4l6-3l5 6l5-1l3 6l5 7l0 5l-6 2l5 5l1-7l5 0l1-5M362 160l9 4l4-6l5 0l-3-9l-1-6l0-8M288 83l4-2l5 4l4 4l1-5M288 83l-5-2l-8 3l1-6l5 0M373 368l4-1M387 384l-3 3l4 2l-1-5l3-5l9-1M387 384l-3-4l-1-4M384 387l-1 6l-3 5l6 1l-5 2M408 175l4-2l-1-4M408 175l-4 5l-3-4M267 279l0-10l9 4M254 391l-2 5l-1-8l4-1l-1 4l-3-3l1-5l3 4M335 218l1-5l-6 3l4 6l4 4l-5 1l-2 2l-5 1l-1 4l-3-2M335 218l-1 4l-1 5l2 5l3-2l0-4M335 218l-5-2l-3-6l-6-1l0 7l4 1l-3 4l-1-5l3-3l1 4M330 216l-6-3l-3-4l-5-2l-1 6M330 216l5-7l1 4M305 92l-4 2l-7-3l7-2l4 3M310 190l2 10l4 7l-9 4l1 5l-4 6l-3 0l-3 5l-5 5M315 192l1 6l6-1l-2 5l1 7M387 375l3 4l-6 1l3-5M335 209l3-6M335 209l-8 1l-3 3M188 219l-9-8l6 8M296 302l6-7l14 0l1 11M296 302l-7-10l10-5M296 302l4 12l-17-4l-7-12M296 302l-13 8M353 145l3 4l-5 2M264 379l2 3l3-3l-3-3l-2 3M354 246l-3-5l0 4l3 1l2 3l3-7l-5-10l-1-4M434 179l-4 4l4 5M430 183l0 8M430 183l8 1M151 240l-2 4l2-3l7-7l-1-5l5 1l-4 4M357 293l4 8M376 343l1-6l-1-9l5-8M376 343l-1 7l0 7l0 4M385 342l5-1l-1-2l-3-4M385 342l-8-5l-9-5l-6 3l-5 10l8-2M385 342l4-3l5 9M454 245l-3-3M454 245l-2 3M321 216l-2 6l-4-3M316 372l-1 8M267 111l1-4l1 2l3 3l2-2M260 197l-2 10l-7-8M255 189l7-6l10-2l7-6l9-4M255 189l-9-2l8-11M273 225l-4-3l-4-3l-6-2l-5 5l-3-3l4-2l-1 5M338 235l5 4M338 235l-4 0M338 235l0-5l5 1l1 3l3-1l-4-2l1-3l-3-3l4-2l3-1M338 235l6-1M338 235l5-4M338 235l-3-3l-4-3M249 90l1 5l3 1l-1-4l0-3l4 0l0-3l-3-2M249 90l-5 0l0-7l2-4M249 90l3 2l2 1l2-4l2 2l5-1l-2 4l-3 4l3-1l-2 2l-3 4l-3-3l-3-1l0-4l-3 0l3 4l-3 2l-4-3l1-8l1 3l0 4M249 90l-5 0l1-3l-1-4l0 7M249 90l-1-4l2 1M249 90l-4 3l-2 5l2 6l-5-3l1 5l4-2l2-3l3 1l3-2M350 225l-5-2l2 5l-3 0l-6 2M315 402l4-1M272 348l7-1l4-4l-7 0l5-7l2 7l2 7l-3 5l5 2l3-2l-5-5l6-1l-3-8l6-7M272 353l-5-1M272 353l-5 3l6 2l1 3l3 1l1-4l-4 3l-2 5l-2-2M272 353l1 5l5 0l6 3l-4 3l-3-2l1 6l3 1l-1-5l-2-6M336 198l-7 3l-7-4M352 254l-5-3M352 254l-5 0l-3 3l4 0l-2 4M352 254l-4 3l-1-3M412 222l1-5l2-3l-4 0l4-3M264 81l4 0l-1-3l4-2l5 2M264 81l3-3M264 81l-4 2l-4 3l3 2l3-1M264 81l1 2l3-2l2 2M260 83l-1 5l4 2M265 224l0-5l1-8l8 5l5-1l2 5M265 224l1 5M352 103l6-1l8 8l-5 0l-7 4l-2-6l-3 8l-2-7l5-1l0-5l-5 6l-4 8l-7-2l-1 5l4 8M352 103l5 3l1-4M357 106l4 4l5 6l-6 0M357 106l-5 2M357 106l-3 8l-5 2l-6 1l3 6l11 2l4-4l5-5l1 6l3 5l5 0l-2-4l-3 4l0 5l-7 5l-1 5l-1 5l-2 9l-3-7l-3 7l-8-2l-6-7l-6 7l-4 5M118 250l0 5l3 3l2 3l-5 2l3 1l2-3l3 4l-5-1l3 2l2-1l9-1M118 250l4 2l-4 3l-5 4l4 1M118 250l-5-1l3-4l3-7l3-2M412 240l2-4M412 240l4-1M412 240l0 4l-5-1l-1 0l0-3l3-2l1-4l5-2l-3-2l0-4M412 240l-3-2l-2 5l5-3M301 372l-1-4l5 5l-4-1l-2 4l6-3M225 169l-5-11M225 169l6-5M132 229l5-1l-5 7l-3 4l-4-3l-3-3l5-6l3 6l-5 3M132 229l-2 4l-1 6l4 4l-1-5l6-1l-2 4l0 4M132 229l0 6l-2-2l-8 0l-3 5M294 91l3-6M410 207l-6-3l3 6M404 204l2-4l6 2l4 4M404 204l-4 0M412 202l5-3l4-5l4-2l-3-5l-1 7l-6 2l2 3M412 202l3-6l-5 0l2 6M267 102l-3 0l-2-3l-3 0l0 4l-1 2M267 102l1 5M365 153l2-7l5 2l4-5l-5-6M370 159l1 5l7 0l2-6l9 4M251 370l-5-3l7-2l-2 5M447 241l2-5l-4 2M279 175l13 10l-9 3l-11-7l1-13l6 7l3-11l-9 4M279 175l4 13M383 176l-6-5l-8 1M383 171l5 5l-6 7M383 171l-6 0l1-7M441 229l0 4l-2-2l0 5l2-3M441 229l-5-4l-3-2l-2-4l-1 4l-4-5l2-4l3 1l3-2l-3-1l-4-3l-3-2M441 229l-2 2M441 229l4-2l4 2l3-2M441 229l0-5M227 189l-7 11M227 189l-13 5l-9-2l-3-10M227 189l5-9M227 189l1 1l-6 13M129 239l-5 0M129 239l3-1l0-3M318 144l2-6M354 232l1 8l4 2M261 392l-4 4M261 392l4 0l-2-4l-5 2l3 2l2-4l4 1l3-4l3-4M284 230l4-5l-4-1l1-8l7 1l8 0l-4 4l-3 6l-5 3M284 230l-4-2l-1-4M297 111l7-4M297 111l-5 4l0-5l-5-4l-5 4l-2-5M297 111l2 7M297 111l6 3M297 111l-5-1l-5 1l5 4l-6 1l6 4M297 111l-1-5l-4 4l0-6l-6-4l5-1l-6-6M286 282l3 10M286 282l-6 8M268 113l4-1l0 3l-3 2l-1-4M240 137l10-10M240 137l-13 2l-8-3l-5 8M349 392l-3 9l5-2M275 90l3-3l5-6l9 0l4-4M280 375l4 3l-4 0M284 378l2 4l2 5l-6 2l2-4M284 378l3-2l5 5M371 164l6 7M362 377l4 2M298 227l-5 0l-5-2M298 227l-2-6l-4-4l4-3l8 1l0 7l5-1M298 227l1 6l2 6l1 4l4-4M298 227l4 3l6 3l-1-6l3-3l-6-2l-4-5l-4-3M312 334l1-7l-8 5l-4 5l-4-11M221 388l1 6M221 388l5-4M221 388l-2-6l-4-1M407 230l0 4l2 4M407 230l5 0l-2 4l-3 0l-3 2l2 4l1 3M279 128l-2-6l-1-6l3-3M304 279l-2-9l-15 3l-1-10l7-4M276 374l-1-4l6-1l5-4l4 0M292 104l-5 2l0 5l-5-1l4 6l1-5M292 104l-1-5M292 104l4 2M262 384l1 4M262 384l4-2l-1 4M250 356l-5-1l-2-9l-5 5M250 356l-6 6l-5-1l3 10l-8-2M344 228l3 5M344 228l1-5M361 401l3-4M361 401l5 3l0 6l0 3M317 164l0 5M317 164l-6 4M240 181l6 6l-2 2M346 123l4 7l2 5l4-5l1-5l-7 5l6 0M267 370l2-3l3-1l5-4M267 370l-3-3l-1-3l3-5l1-3M267 370l-1 6l6-4l0-6l6 2l-3 2l-3 2M267 411l3-4l2-6M267 415l4-2l4-1l2-3l5 1M433 223l3-1M433 223l-2 2l-5-2l4 0l3 0M375 382l-3 0l2 4l2 3l3 5l-4 5l-4 1M375 382l-1-3M375 382l-1 4l-4 0M355 275l-1-4l2-3l5-3l-6-1M355 275l-4-1l3-3M399 196l-3-4l-2 4l5 0M281 234l-1-6l4-4M386 394l-3-1l5-4l-2 5M284 361l3-4l-2-7l-6-3l-3-4l0-6l-8-8M284 361l2 4l-6-1l-2 4M292 403l3-3l3-1M292 403l-1-8l-3-2M291 395l-2 6M291 395l1-3l4-4M291 395l4 5M276 116l-4-4M276 116l6 2l0-8M277 220l2-5l6-9l-10-3l-9 8l-8-4l-9-4l6 14l3-10l1 10l-4 0M284 242l6 0l1 4M235 328l8-11M118 263l3-5l2-2l-5-1M118 263l6 3M118 263l-4 2l-4-6l4 4l-1-4l1-4M224 406l-3-1M267 94l3 0M259 217l7-6M320 202l4 3l5-4l2-4M320 202l-4 5M320 202l-8-2l4-2l4 4M358 411l-2-6l3 0M308 147l-2-5M307 227l-5 3l-3 3l-4 2M307 227l-3-5M386 190l2-4l7-3l2-4M341 192l3-10M341 192l2 2M282 118l6 5l-2-7l-4 2l-5 4M367 141l-5 1l5 4l0-5l9 2l7-2l5 0l4-3l6 1l1 2M367 141l-4-4M278 388l-4-1l-4-2l-4-3M282 389l1 4M256 406l-3 5l2 6M252 406l1 5M266 376l-7 0M386 136l-4-6l-7-3M383 141l1 7l-7 1M436 216l6-2l0 4M221 376l-5-4l1-10l4 3l4-3l-2-6l-6 5l0 1l1 8l3-5M216 372l2-2M219 400l-6 1M263 96l-2 1l1 2l1-3l-2-2l0 3M343 362l6-1l2 6l-8 3l0 6l-5-3l5-3l0-8M244 362l5 0M244 362l1-7M244 362l2 5M339 175l4 4l-5 1l-5-4l-4-2l-3-5M339 175l-5-3l-5 2l-2 5M339 175l-1 5M269 367l-3-3l-3 0M269 367l-5 0l-4 4M331 337l-6-2l5 6M337 332l5-1M312 258l6-3l3-1M245 93l2 2M443 212l-1 2l4 2M376 143l8 5l0 6l6 1l-1-8l-5 7l-4 4M273 410l-2 3M273 410l4-1l2-6M273 410l2 2l2 2M273 410l-3-3l-6-1M266 364l0-5M266 364l-2 3M269 86l-4-3l3 5M274 395l-2-5l-5-1l1 7l-3-1M274 395l-6 1l-3-4M361 265l1 0M364 385l2 3M136 241l-4-3M431 226l0-1l-1-2M325 234l-1 5M324 361l4 3l1-7l-5-1M324 361l5-4l-2-4l3-7M283 343l5-2l-2-8M285 350l3-9M113 259l-3 0M345 154l1-7l-7 0M345 154l1 5M288 387l1-5l-3 0l1-6l-4-4M258 77l1-9l11 3M371 360l4-3l4-2l6 2l0-7M375 350l4 5M241 106l-10 1M256 103l-1 3l1 5M256 103l3 0l2 2l1 2M450 207l-5-1l3-5M289 405l5 1M302 243l-5-1M302 243l6 1M368 406l-2 4l-3 3M277 330l-1 7l-9 0l-5-1M341 263l-5 0l1-4l-1-3l-2-5l2-5l3-4M341 263l-1 4l5 3l-3 2l-4 2M261 410l3 0M261 410l-1-3M387 128l-5 2M373 123l9-1M373 115l-7 1l7-3l-7-3l0 6M313 327l-8-1M182 188l-9 3l-5 3M182 188l5 11l9 1l9-8l-11 1l-7 6l-8 12l-7-2l2 7l-3-1l1-6l-6-3l-6-1M439 236l4 0M123 256l6 1M123 256l-1-4l3-2M370 302l1-9M370 302l7 9M252 92l-2 3M367 146l-6 1l-5 2M162 230l-1-3M411 214l-3-3M411 214l2 3M285 216l-6-1l-4-12M226 333l-6-3l2-7M226 333l3 7M226 333l6 2M220 330l0 7l-1 4M386 399l-3-6l-4 1l-5-1M386 399l-2 5M336 263l4 4l-1 4l-4 3M234 411l-1 3M320 173l9 1M388 141l-4 7l5-1l-1-6M246 375l-4-4M438 213l4 1l-2-4M226 130l-7 6l-4-9M277 230l3-2M268 396l4-6l2-3M252 401l0-5l-7-2l6-6M248 86l-3 1M319 222l-3 4M319 222l-4 1M319 222l3-1M340 267l2 5l-3-1M264 118l-1-3M264 118l5-1M197 146l-4 10l7 6M430 204l-3 5l1 5l3-2M256 89l3-1l-1 3M275 370l-3-4M252 60l-7-2l0 6M252 60l4-2l3 10M333 397l-1 5M259 103l5-1M243 346l-3-4l9-2l4 3l-10 3M114 263l0 2M219 136l-9-3M279 256l7 7M279 256l-12 13M287 376l2 6M189 186l-2 13l-9 3M355 240l-4 1M149 248l2-7M149 248l1 1M149 248l0-4M256 58l9 4M252 117l-7-2" stroke="#000" stroke-width="0.9" fill="none" shape-rendering="auto"/><path d="M237 407L258 403L298 400L298 411L273 415L251 420L239 420L233 417Z" fill="#000"/><path d="M357 401L385 398L387 405L385 412L371 414L358 414Z" fill="#000"/></g><path d="M246 58L266 58L276 76L281 78L296 77L319 85L335 91L358 102L373 113L393 132L406 151L413 165L429 174L441 184L444 192L452 202L454 209L452 213L459 225L464 238L467 250L464 254L457 252L452 248L447 249L440 239L431 225L422 222L417 226L416 239L412 244L406 243L404 236L406 223L408 211L397 202L383 188L377 178L362 175L347 167L344 182L343 207L347 214L352 226L359 242L362 265L371 293L380 320L394 348L412 383L387 395L387 413L356 414L355 403L305 402L298 399L298 411L235 420L233 414L221 405L213 401L218 352L221 319L230 295L233 285L242 256L250 240L253 226L251 219L249 203L244 189L236 176L228 190L222 203L220 219L214 223L204 222L198 220L185 219L172 215L167 220L162 230L151 241L150 249L141 255L135 264L124 266L114 265L110 259L113 249L119 238L125 226L135 217L143 209L157 196L159 183L157 172L161 164L175 158L191 152L201 140L209 133L218 121L228 107L234 103L243 98L244 90L243 79Z" stroke="#000" stroke-width="1" fill="none"/></svg></div>
<!-- grip -->
<div class="a" style="left:997px;top:557.5px;width:2px;height:2px;background:#a8a8a8"></div>
<div class="a" style="left:994px;top:561px;width:2px;height:2px;background:#a8a8a8"></div>
<div class="a" style="left:997px;top:561px;width:2px;height:2px;background:#a8a8a8"></div>
<div class="a" style="left:991px;top:564px;width:2px;height:2px;background:#a8a8a8"></div>
<div class="a" style="left:994px;top:564px;width:2px;height:2px;background:#a8a8a8"></div>
<div class="a" style="left:997px;top:564px;width:2px;height:2px;background:#a8a8a8"></div>
<div class="a" style="left:20.1px;top:10px;font-size:10px;line-height:1;color:#f4f4f4;transform:scaleX(0.947);transform-origin:0 0">AssetStudioModGUI v0.19.0.0 - no productName - 2022.3.62f1 - Android</div>
<div class="a" style="left:8.2px;top:31px;font-size:10px;line-height:1;color:#000;transform:scaleX(0.864);transform-origin:0 0">File</div>
<div class="a" style="left:37.5px;top:31px;font-size:10px;line-height:1;color:#000;transform:scaleX(0.958);transform-origin:0 0">Options</div>
<div class="a" style="left:86.0px;top:31px;font-size:10px;line-height:1;color:#000;transform:scaleX(0.999);transform-origin:0 0">Model</div>
<div class="a" style="left:128.0px;top:31px;font-size:10px;line-height:1;color:#000;transform:scaleX(0.927);transform-origin:0 0">Export</div>
<div class="a" style="left:170.0px;top:31px;font-size:10px;line-height:1;color:#000;transform:scaleX(0.923);transform-origin:0 0">Filter Type</div>
<div class="a" style="left:228.0px;top:31px;font-size:10px;line-height:1;color:#000;transform:scaleX(0.944);transform-origin:0 0">Debug</div>
<div class="a" style="left:270.7px;top:31px;font-size:10px;line-height:1;color:#000;transform:scaleX(0.983);transform-origin:0 0">About</div>
<div class="a" style="left:940.5px;top:31px;font-size:10px;line-height:1;color:#000;transform:scaleX(0.919);transform-origin:0 0">Color Theme</div>
<div class="a" style="left:2.8px;top:52px;font-size:10px;line-height:1;color:#000;transform:scaleX(0.904);transform-origin:0 0">Scene Hierarchy</div>
<div class="a" style="left:93.3px;top:51px;font-size:10px;line-height:1;color:#000;transform:scaleX(0.888);transform-origin:0 0">Asset List</div>
<div class="a" style="left:161.6px;top:52px;font-size:10px;line-height:1;color:#000;transform:scaleX(0.860);transform-origin:0 0">Asset Classes</div>
<div class="a" style="left:390.0px;top:51px;font-size:10px;line-height:1;color:#000;transform:scaleX(0.880);transform-origin:0 0">Preview</div>
<div class="a" style="left:432.5px;top:52px;font-size:10px;line-height:1;color:#000;transform:scaleX(0.940);transform-origin:0 0">Dump</div>
<div class="a" style="left:5.1px;top:70px;font-size:10px;line-height:1;color:#6d6d6d;transform:scaleX(0.878);transform-origin:0 0">Filter</div>
<div class="a" style="left:282.5px;top:71px;font-size:10px;line-height:1;color:#000;transform:scaleX(0.955);transform-origin:0 0">Include</div>
<div class="a" style="left:387.2px;top:533px;font-size:9.2px;line-height:1;color:#000;transform:scaleX(0.984);transform-origin:0 0">Using OpenGL Version: 3.3.0 Core Profile Context 23.9.3.230915</div>
<div class="a" style="left:387.2px;top:545px;font-size:9.2px;line-height:1;color:#000;transform:scaleX(1.049);transform-origin:0 0">'Mouse Left'=Rotate | 'Mouse Right'=Move | 'Mouse Wheel'=Zoom</div>
<div class="a" style="left:387.2px;top:556px;font-size:9.2px;line-height:1;color:#000;transform:scaleX(1.035);transform-origin:0 0">'Ctrl W'=Wireframe | 'Ctrl S'=Shade | 'Ctrl N'=ReNormal</div>
</body></html>
